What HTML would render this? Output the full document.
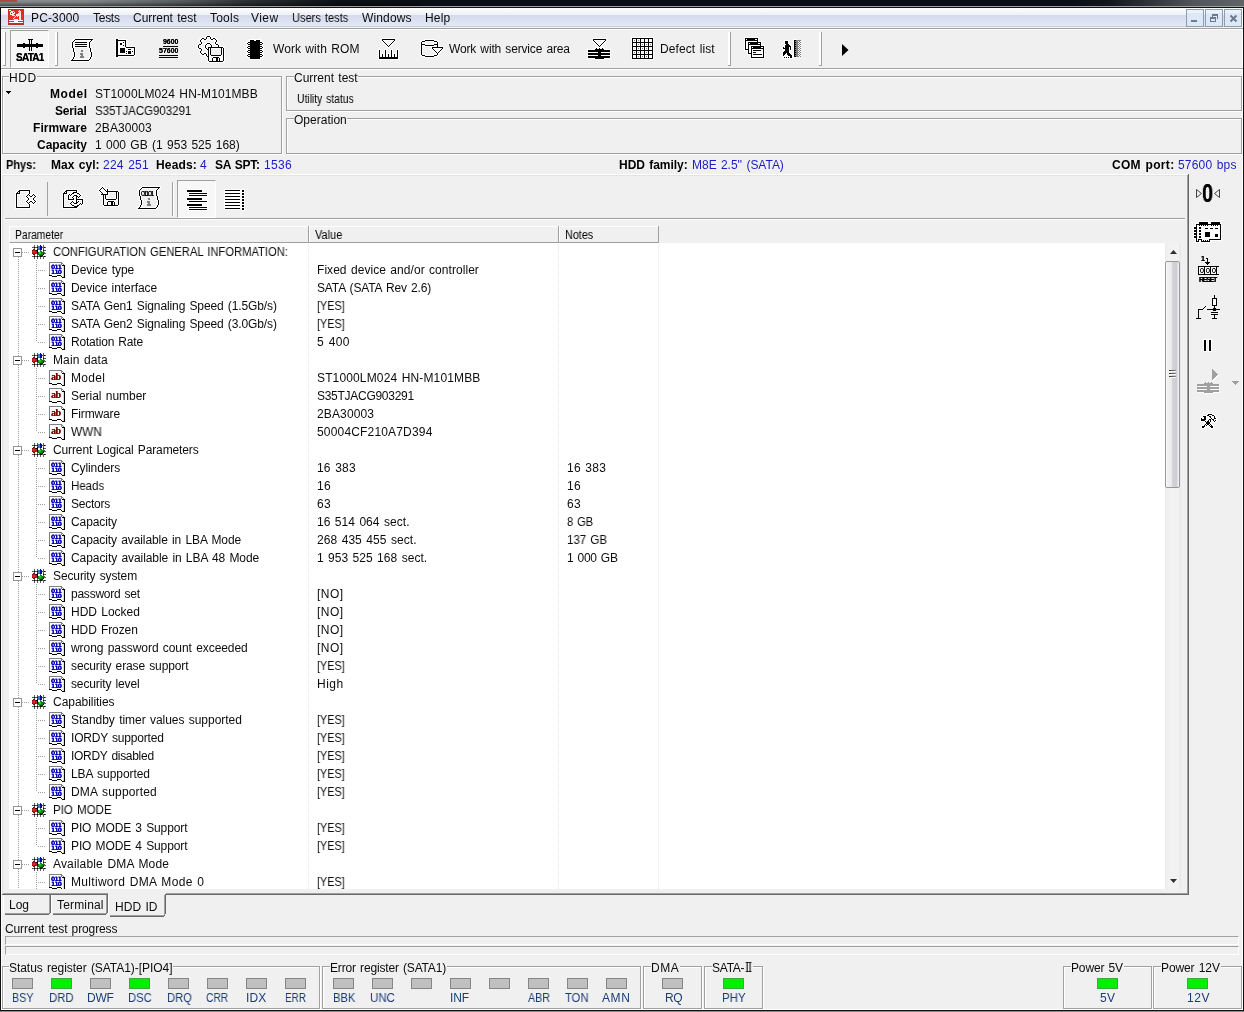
<!DOCTYPE html>
<html lang="en"><head><meta charset="utf-8"><title>PC-3000</title>
<style>
html,body{margin:0;padding:0;background:#f0f0f0;}
body{width:1244px;height:1012px;overflow:hidden;font-family:"Liberation Sans",sans-serif;font-size:12px;color:#0c0c0c;}
#app{position:relative;width:1244px;height:1012px;overflow:hidden;background:#f0f0f0;}
#app div,#app span,#app i,#app svg{position:absolute;box-sizing:border-box;}
#app span{white-space:pre;line-height:14px;font-size:12px;word-spacing:1px;transform-origin:0 50%;will-change:transform;}
#app i{display:block;}
.b{font-weight:bold;color:#000;}
.v{color:#1c1cc4;}
.l{color:#1c3c78;}
svg{shape-rendering:crispEdges;overflow:visible;}
#app .bn{font-family:"DejaVu Sans","Liberation Sans",sans-serif;font-size:6px;line-height:6px;font-weight:bold;color:#0000b0;letter-spacing:-0.75px;word-spacing:0;will-change:transform;text-shadow:0 0 0 #0000b0;}
#app .ab{font-size:10px;line-height:12px;font-weight:bold;color:#800000;letter-spacing:-0.5px;font-family:"Liberation Serif",serif;will-change:transform;text-shadow:0 0 0 #800000;}
#app .it{will-change:transform;word-spacing:0;}

</style></head>
<body>
<div id="app">
<div style="left:0px;top:0px;width:1244px;height:6px;background:linear-gradient(90deg,#8e9294 0,#888c8e 7%,#5c6064 14.5%,#2e3236 20%,#0e1219 27%,#0a0e17 34%,#0a0e17 86%,#12161c 89%,#2c3036 92%,#52565a 96%,#606468 100%)"></div>
<div style="left:0px;top:0px;width:420px;height:6px;background:linear-gradient(180deg,rgba(0,0,0,0) 0,rgba(0,0,0,0.12) 40%,rgba(0,0,0,0.5) 100%)"></div>
<div style="left:0px;top:0px;width:17px;height:2px;background:linear-gradient(#b44646,#a44c4c)"></div>
<i style="left:0px;top:6px;width:1244px;height:1px;background:#9c9ea0"></i>
<i style="left:0px;top:7px;width:1244px;height:1px;background:#101214"></i>
<div style="left:1px;top:8px;width:1242px;height:19px;background:linear-gradient(#ffffff 0,#eef0f8 36%,#d4daec 37%,#e3e8f5 95%,#c9cedc 96%)"></div>
<i style="left:1px;top:27px;width:1242px;height:1px;background:#f4f4f4"></i>
<i style="left:1px;top:28px;width:1242px;height:1px;background:#a0a0a0"></i>
<i style="left:1px;top:29px;width:1242px;height:1px;background:#ffffff"></i>
<i style="left:0px;top:7px;width:1px;height:1004px;background:#101010"></i>
<i style="left:1243px;top:7px;width:1px;height:1004px;background:#101010"></i>
<i style="left:1px;top:30px;width:1px;height:980px;background:#ffffff"></i>
<i style="left:1242px;top:8px;width:1px;height:20px;background:#ffffff"></i>
<i style="left:1242px;top:30px;width:1px;height:980px;background:#ffffff"></i>
<i style="left:1px;top:1009px;width:1242px;height:1px;background:#ffffff"></i>
<i style="left:0px;top:1010px;width:1244px;height:1px;background:#101010"></i>
<i style="left:0px;top:1011px;width:1244px;height:1px;background:#8a8a8a"></i>
<svg style="left:8px;top:9px" width="16" height="16" viewBox="0 0 16 16"><path fill="#e42a22" d="M0 0h16v16h-16z"/><path fill="#ea3026" d="M1 6h14v5h-14z"/><path fill="#c83030" d="M0 0h16v1h-16zM0 0h1v16h-1zM15 0h1v16h-1z"/><path fill="#b03434" d="M0 14h16v2h-16z"/><path fill="#fff" d="M1 11h14v1h-14zM1 13h14v1h-14zM6 10h4v3h-4zM1 1h2v1h-2z"/><path fill="#fbe4e2" d="M2 3h5v3h-5zM3 2h3v1h-3zM4 6h3v1h-3zM10 2h3v3h-3zM8 5h5v2h-5zM11 7h2v4h-2zM9 7h1v1h-1zM5 9h1v1h-1zM6 8h1v1h-1zM7 7h1v1h-1zM11 1h1v1h-1z"/><path fill="#c03030" d="M3 4h1v1h-1zM5 3h1v1h-1zM6 5h1v1h-1zM9 4h1v1h-1zM10 3h1v1h-1zM7 6h1v1h-1z"/></svg>
<span style="left:31.0px;top:11px;letter-spacing:0.14px;">PC-3000</span>
<span style="left:92.5px;top:11px;letter-spacing:-0.27px;">Tests</span>
<span style="left:133.0px;top:11px;letter-spacing:-0.02px;">Current test</span>
<span style="left:209.6px;top:11px;letter-spacing:0.22px;">Tools</span>
<span style="left:251.2px;top:11px;letter-spacing:0.43px;">View</span>
<span style="left:292.2px;top:11px;transform:scaleX(0.921);">Users tests</span>
<span style="left:361.7px;top:11px;letter-spacing:0.15px;">Windows</span>
<span style="left:425.2px;top:11px;letter-spacing:0.20px;">Help</span>
<svg style="left:1186px;top:9px" width="18" height="18" viewBox="0 0 18 18"><path fill="#8f9cae" d="M0 0h18v18h-18z"/><path fill="#dde8f6" d="M1 1h16v16h-16z"/><path fill="#eaf2fb" d="M1 1h16v3h-16z"/><path fill="#6b7a90" d="M5 11h6v2h-6z"/></svg>
<svg style="left:1205px;top:9px" width="18" height="18" viewBox="0 0 18 18"><path fill="#8f9cae" d="M0 0h18v18h-18z"/><path fill="#dde8f6" d="M1 1h16v16h-16z"/><path fill="#eaf2fb" d="M1 1h16v3h-16z"/><path fill="#6b7a90" d="M7 5h6v2h-6zM12 7h1v3h-1zM7 7h1v1h-1zM5 8h6v2h-6zM5 10h1v3h-1zM10 10h1v3h-1zM6 12h4v1h-4z"/></svg>
<svg style="left:1224px;top:9px" width="18" height="18" viewBox="0 0 18 18"><path fill="#8f9cae" d="M0 0h18v18h-18z"/><path fill="#dde8f6" d="M1 1h16v16h-16z"/><path fill="#eaf2fb" d="M1 1h16v3h-16z"/><path fill="none" stroke="#6b7a90" stroke-width="2" d="M6.500 6.500l6 6M12.500 6.500l-6 6" shape-rendering="geometricPrecision"/></svg>
<i style="left:1px;top:68px;width:1242px;height:1px;background:#a0a0a0"></i>
<i style="left:1px;top:69px;width:1242px;height:1px;background:#ffffff"></i>
<i style="left:3px;top:32px;width:2px;height:33px;background:#fff"></i>
<i style="left:5px;top:32px;width:1px;height:34px;background:#a0a0a0"></i>
<i style="left:3px;top:65px;width:3px;height:1px;background:#a0a0a0"></i>
<i style="left:55px;top:32px;width:2px;height:33px;background:#fff"></i>
<i style="left:57px;top:32px;width:1px;height:34px;background:#a0a0a0"></i>
<i style="left:55px;top:65px;width:3px;height:1px;background:#a0a0a0"></i>
<div style="left:10px;top:30px;width:39px;height:38px;background:#f7f7f7;border-left:1px solid #a0a0a0;border-top:1px solid #a0a0a0;border-right:1px solid #fff;border-bottom:1px solid #fff"></div>
<svg style="left:17px;top:39px" width="26" height="12" viewBox="0 0 26 12"><path fill="#000" d="M11 0h5v1h-5zM12 1h1v1h-1zM14 1h1v1h-1zM12 2h1v1h-1zM14 2h1v1h-1zM12 3h1v1h-1zM14 3h1v1h-1zM6 4h2v1h-2zM12 4h1v1h-1zM14 4h1v1h-1zM19 4h2v1h-2zM0 5h26v1h-26zM0 6h26v1h-26zM0 7h26v1h-26zM6 8h2v1h-2zM12 8h1v1h-1zM14 8h1v1h-1zM19 8h2v1h-2zM12 9h1v1h-1zM14 9h1v1h-1zM12 10h1v1h-1zM14 10h1v1h-1zM12 11h1v1h-1zM14 11h1v1h-1z"/></svg>
<span class="it" style="left:15.6px;top:52.14px;font-size:10px;line-height:12px;letter-spacing:-0.73px;color:#000;text-shadow:0 0 0 #000;font-weight:bold;">SATA1</span>
<svg style="left:70px;top:38px" width="24" height="24" viewBox="0 0 24 24"><path fill="#fff" d="M4 0h20v1h-20zM3 1h2v1h-2zM23 1h1v1h-1zM2 2h2v1h-2zM5 2h16v1h-16zM22 2h2v1h-2zM1 3h2v1h-2zM4 3h16v1h-16zM21 3h2v1h-2zM1 4h1v1h-1zM3 4h2v1h-2zM17 4h2v1h-2zM20 4h2v1h-2zM1 5h1v1h-1zM3 5h16v1h-16zM20 5h1v1h-1zM1 6h1v1h-1zM3 6h2v1h-2zM17 6h2v1h-2zM20 6h1v1h-1zM1 7h1v1h-1zM3 7h16v1h-16zM20 7h1v1h-1zM1 8h1v1h-1zM3 8h2v1h-2zM17 8h2v1h-2zM20 8h1v1h-1zM1 9h1v1h-1zM3 9h16v1h-16zM20 9h2v1h-2zM1 10h2v1h-2zM4 10h1v1h-1zM18 10h2v1h-2zM21 10h1v1h-1zM2 11h1v1h-1zM4 11h1v1h-1zM19 11h1v1h-1zM21 11h1v1h-1zM2 12h1v1h-1zM4 12h1v1h-1zM19 12h1v1h-1zM21 12h1v1h-1zM2 13h1v1h-1zM4 13h2v1h-2zM19 13h1v1h-1zM21 13h2v1h-2zM2 14h2v1h-2zM5 14h1v1h-1zM19 14h2v1h-2zM22 14h1v1h-1zM3 15h1v1h-1zM5 15h1v1h-1zM20 15h1v1h-1zM22 15h1v1h-1zM3 16h1v1h-1zM5 16h1v1h-1zM20 16h1v1h-1zM22 16h1v1h-1zM3 17h1v1h-1zM5 17h1v1h-1zM20 17h1v1h-1zM22 17h1v1h-1zM2 18h2v1h-2zM5 18h1v1h-1zM19 18h2v1h-2zM22 18h1v1h-1zM2 19h1v1h-1zM4 19h2v1h-2zM19 19h1v1h-1zM21 19h2v1h-2zM1 20h2v1h-2zM4 20h1v1h-1zM18 20h2v1h-2zM21 20h1v1h-1zM0 21h2v1h-2zM3 21h16v1h-16zM20 21h2v1h-2zM0 22h1v1h-1zM19 22h2v1h-2zM0 23h20v1h-20z"/><path fill="#000" d="M5 1h18v1h-18zM4 2h1v1h-1zM21 2h1v1h-1zM3 3h1v1h-1zM20 3h1v1h-1zM2 4h1v1h-1zM5 4h12v1h-12zM19 4h1v1h-1zM2 5h1v1h-1zM19 5h1v1h-1zM2 6h1v1h-1zM5 6h12v1h-12zM19 6h1v1h-1zM2 7h1v1h-1zM19 7h1v1h-1zM2 8h1v1h-1zM5 8h12v1h-12zM19 8h1v1h-1zM2 9h1v1h-1zM19 9h1v1h-1zM3 10h1v1h-1zM20 10h1v1h-1zM3 11h1v1h-1zM20 11h1v1h-1zM3 12h1v1h-1zM20 12h1v1h-1zM3 13h1v1h-1zM20 13h1v1h-1zM4 14h1v1h-1zM21 14h1v1h-1zM4 15h1v1h-1zM21 15h1v1h-1zM4 16h1v1h-1zM21 16h1v1h-1zM4 17h1v1h-1zM21 17h1v1h-1zM4 18h1v1h-1zM21 18h1v1h-1zM3 19h1v1h-1zM20 19h1v1h-1zM3 20h1v1h-1zM20 20h1v1h-1zM2 21h1v1h-1zM19 21h1v1h-1zM1 22h18v1h-18z"/><path fill="#808080" d="M11 12h2v1h-2zM11 13h2v1h-2zM10 15h3v1h-3zM10 16h3v1h-3zM11 17h2v1h-2zM10 18h4v1h-4zM10 19h4v1h-4z"/></svg>
<svg style="left:115px;top:38px" width="21" height="20" viewBox="0 0 21 20"><path fill="#fff" d="M0 0h4v1h-4zM0 1h1v1h-1zM3 1h9v1h-9zM0 2h1v1h-1zM11 2h1v1h-1zM0 3h1v1h-1zM3 3h7v1h-7zM11 3h1v1h-1zM0 4h1v1h-1zM3 4h5v1h-5zM9 4h1v1h-1zM11 4h1v1h-1zM0 5h1v1h-1zM3 5h2v1h-2zM7 5h3v1h-3zM11 5h1v1h-1zM0 6h1v1h-1zM3 6h2v1h-2zM7 6h3v1h-3zM11 6h1v1h-1zM0 7h1v1h-1zM3 7h5v1h-5zM9 7h1v1h-1zM11 7h1v1h-1zM0 8h1v1h-1zM3 8h7v1h-7zM11 8h10v1h-10zM0 9h1v1h-1zM3 9h8v1h-8zM20 9h1v1h-1zM0 10h1v1h-1zM3 10h2v1h-2zM10 10h9v1h-9zM20 10h1v1h-1zM0 11h1v1h-1zM3 11h2v1h-2zM10 11h3v1h-3zM16 11h3v1h-3zM20 11h1v1h-1zM0 12h1v1h-1zM3 12h2v1h-2zM10 12h9v1h-9zM20 12h1v1h-1zM0 13h1v1h-1zM3 13h2v1h-2zM10 13h1v1h-1zM12 13h1v1h-1zM16 13h1v1h-1zM18 13h1v1h-1zM20 13h1v1h-1zM0 14h1v1h-1zM3 14h2v1h-2zM10 14h3v1h-3zM16 14h3v1h-3zM20 14h1v1h-1zM0 15h1v1h-1zM3 15h8v1h-8zM12 15h1v1h-1zM16 15h3v1h-3zM20 15h1v1h-1zM0 16h1v1h-1zM3 16h16v1h-16zM20 16h1v1h-1zM0 17h1v1h-1zM19 17h2v1h-2zM0 18h1v1h-1zM3 18h17v1h-17zM0 19h4v1h-4z"/><path fill="#000" d="M1 1h2v1h-2zM1 2h10v1h-10zM1 3h2v1h-2zM10 3h1v1h-1zM1 4h2v1h-2zM8 4h1v1h-1zM10 4h1v1h-1zM1 5h2v1h-2zM5 5h2v1h-2zM10 5h1v1h-1zM1 6h2v1h-2zM5 6h2v1h-2zM10 6h1v1h-1zM1 7h2v1h-2zM8 7h1v1h-1zM10 7h1v1h-1zM1 8h2v1h-2zM10 8h1v1h-1zM1 9h2v1h-2zM11 9h9v1h-9zM1 10h2v1h-2zM5 10h5v1h-5zM19 10h1v1h-1zM1 11h2v1h-2zM5 11h5v1h-5zM13 11h3v1h-3zM19 11h1v1h-1zM1 12h2v1h-2zM5 12h5v1h-5zM19 12h1v1h-1zM1 13h2v1h-2zM5 13h5v1h-5zM11 13h1v1h-1zM13 13h3v1h-3zM17 13h1v1h-1zM19 13h1v1h-1zM1 14h2v1h-2zM5 14h5v1h-5zM13 14h3v1h-3zM19 14h1v1h-1zM1 15h2v1h-2zM11 15h1v1h-1zM13 15h3v1h-3zM19 15h1v1h-1zM1 16h2v1h-2zM19 16h1v1h-1zM1 17h18v1h-18zM1 18h2v1h-2z"/></svg>
<svg style="left:159px;top:46px" width="19" height="12" viewBox="0 0 19 12"><path fill="#000" d="M4 0h15v1h-15zM0 9h19v1h-19zM0 11h19v1h-19z"/></svg>
<span class="it" style="left:162.6px;top:37.07px;font-size:7px;line-height:9px;letter-spacing:-0.05px;color:#000;text-shadow:0 0 0 #000;font-weight:bold;">9600</span>
<span class="it" style="left:158.6px;top:46.07px;font-size:7px;line-height:9px;letter-spacing:-0.01px;color:#000;text-shadow:0 0 0 #000;font-weight:bold;">57600</span>
<svg style="left:197px;top:35px" width="28" height="28" viewBox="0 0 28 28"><path fill="#fff" d="M9 0h5v1h-5zM8 1h2v1h-2zM13 1h2v1h-2zM4 2h5v1h-5zM10 2h3v1h-3zM14 2h5v1h-5zM3 3h2v1h-2zM7 3h2v1h-2zM10 3h1v1h-1zM12 3h1v1h-1zM14 3h2v1h-2zM18 3h2v1h-2zM2 4h2v1h-2zM5 4h2v1h-2zM9 4h2v1h-2zM12 4h2v1h-2zM16 4h2v1h-2zM19 4h2v1h-2zM2 5h1v1h-1zM4 5h6v1h-6zM13 5h6v1h-6zM20 5h1v1h-1zM2 6h1v1h-1zM4 6h2v1h-2zM17 6h2v1h-2zM20 6h1v1h-1zM2 7h2v1h-2zM5 7h1v1h-1zM9 7h5v1h-5zM17 7h1v1h-1zM19 7h2v1h-2zM1 8h3v1h-3zM5 8h1v1h-1zM8 8h2v1h-2zM13 8h2v1h-2zM17 8h1v1h-1zM19 8h3v1h-3zM0 9h2v1h-2zM4 9h2v1h-2zM7 9h2v1h-2zM10 9h3v1h-3zM14 9h2v1h-2zM17 9h2v1h-2zM21 9h2v1h-2zM0 10h1v1h-1zM2 10h3v1h-3zM7 10h1v1h-1zM9 10h2v1h-2zM12 10h2v1h-2zM15 10h1v1h-1zM18 10h3v1h-3zM22 10h1v1h-1zM0 11h1v1h-1zM2 11h1v1h-1zM7 11h1v1h-1zM9 11h5v1h-5zM15 11h6v1h-6zM22 11h5v1h-5zM0 12h1v1h-1zM2 12h3v1h-3zM7 12h1v1h-1zM9 12h2v1h-2zM26 12h2v1h-2zM0 13h2v1h-2zM4 13h2v1h-2zM7 13h2v1h-2zM10 13h1v1h-1zM12 13h1v1h-1zM14 13h10v1h-10zM25 13h1v1h-1zM27 13h1v1h-1zM1 14h3v1h-3zM5 14h1v1h-1zM8 14h2v1h-2zM12 14h1v1h-1zM25 14h1v1h-1zM27 14h1v1h-1zM2 15h2v1h-2zM5 15h1v1h-1zM9 15h2v1h-2zM12 15h1v1h-1zM25 15h1v1h-1zM27 15h1v1h-1zM2 16h1v1h-1zM4 16h2v1h-2zM10 16h1v1h-1zM12 16h1v1h-1zM25 16h1v1h-1zM27 16h1v1h-1zM2 17h1v1h-1zM4 17h7v1h-7zM12 17h1v1h-1zM25 17h1v1h-1zM27 17h1v1h-1zM2 18h2v1h-2zM5 18h2v1h-2zM9 18h2v1h-2zM12 18h1v1h-1zM25 18h1v1h-1zM27 18h1v1h-1zM3 19h2v1h-2zM7 19h2v1h-2zM10 19h1v1h-1zM12 19h1v1h-1zM25 19h1v1h-1zM27 19h1v1h-1zM4 20h5v1h-5zM10 20h1v1h-1zM12 20h2v1h-2zM24 20h2v1h-2zM27 20h1v1h-1zM8 21h2v1h-2zM12 21h14v1h-14zM27 21h1v1h-1zM9 22h2v1h-2zM12 22h4v1h-4zM22 22h4v1h-4zM27 22h1v1h-1zM10 23h1v1h-1zM12 23h3v1h-3zM16 23h3v1h-3zM21 23h1v1h-1zM23 23h3v1h-3zM27 23h1v1h-1zM10 24h1v1h-1zM12 24h3v1h-3zM16 24h3v1h-3zM21 24h1v1h-1zM23 24h3v1h-3zM27 24h1v1h-1zM10 25h1v1h-1zM12 25h3v1h-3zM16 25h3v1h-3zM21 25h1v1h-1zM23 25h3v1h-3zM27 25h1v1h-1zM10 26h2v1h-2zM26 26h2v1h-2zM11 27h16v1h-16z"/><path fill="#000" d="M10 1h3v1h-3zM9 2h1v1h-1zM13 2h1v1h-1zM5 3h2v1h-2zM9 3h1v1h-1zM13 3h1v1h-1zM16 3h2v1h-2zM4 4h1v1h-1zM7 4h2v1h-2zM14 4h2v1h-2zM18 4h1v1h-1zM3 5h1v1h-1zM19 5h1v1h-1zM3 6h1v1h-1zM19 6h1v1h-1zM4 7h1v1h-1zM18 7h1v1h-1zM4 8h1v1h-1zM10 8h3v1h-3zM18 8h1v1h-1zM2 9h2v1h-2zM9 9h1v1h-1zM13 9h1v1h-1zM19 9h2v1h-2zM1 10h1v1h-1zM8 10h1v1h-1zM14 10h1v1h-1zM21 10h1v1h-1zM1 11h1v1h-1zM8 11h1v1h-1zM14 11h1v1h-1zM21 11h1v1h-1zM1 12h1v1h-1zM8 12h1v1h-1zM11 12h15v1h-15zM2 13h2v1h-2zM9 13h1v1h-1zM11 13h1v1h-1zM13 13h1v1h-1zM24 13h1v1h-1zM26 13h1v1h-1zM4 14h1v1h-1zM10 14h2v1h-2zM13 14h1v1h-1zM24 14h1v1h-1zM26 14h1v1h-1zM4 15h1v1h-1zM11 15h1v1h-1zM13 15h1v1h-1zM24 15h1v1h-1zM26 15h1v1h-1zM3 16h1v1h-1zM11 16h1v1h-1zM13 16h1v1h-1zM24 16h1v1h-1zM26 16h1v1h-1zM3 17h1v1h-1zM11 17h1v1h-1zM13 17h1v1h-1zM24 17h1v1h-1zM26 17h1v1h-1zM4 18h1v1h-1zM7 18h2v1h-2zM11 18h1v1h-1zM13 18h1v1h-1zM24 18h1v1h-1zM26 18h1v1h-1zM5 19h2v1h-2zM9 19h1v1h-1zM11 19h1v1h-1zM13 19h1v1h-1zM24 19h1v1h-1zM26 19h1v1h-1zM9 20h1v1h-1zM11 20h1v1h-1zM14 20h10v1h-10zM26 20h1v1h-1zM10 21h2v1h-2zM26 21h1v1h-1zM11 22h1v1h-1zM16 22h6v1h-6zM26 22h1v1h-1zM11 23h1v1h-1zM15 23h1v1h-1zM19 23h2v1h-2zM22 23h1v1h-1zM26 23h1v1h-1zM11 24h1v1h-1zM15 24h1v1h-1zM19 24h2v1h-2zM22 24h1v1h-1zM26 24h1v1h-1zM11 25h1v1h-1zM15 25h1v1h-1zM19 25h2v1h-2zM22 25h1v1h-1zM26 25h1v1h-1zM12 26h14v1h-14z"/><path fill="#f0f0f0" d="M14 14h10v1h-10zM14 15h10v1h-10zM14 16h10v1h-10zM14 17h10v1h-10zM14 18h10v1h-10zM14 19h10v1h-10z"/></svg>
<svg style="left:246px;top:39px" width="18" height="21" viewBox="0 0 18 21"><path fill="#fff" d="M3 0h12v1h-12zM3 1h1v1h-1zM8 1h2v1h-2zM14 1h1v1h-1zM1 2h3v1h-3zM14 2h3v1h-3zM0 3h2v1h-2zM16 3h2v1h-2zM0 4h1v1h-1zM2 4h2v1h-2zM14 4h2v1h-2zM17 4h1v1h-1zM0 5h2v1h-2zM16 5h2v1h-2zM1 6h3v1h-3zM14 6h3v1h-3zM0 7h2v1h-2zM16 7h2v1h-2zM0 8h1v1h-1zM2 8h2v1h-2zM14 8h2v1h-2zM17 8h1v1h-1zM0 9h2v1h-2zM16 9h2v1h-2zM1 10h3v1h-3zM14 10h3v1h-3zM0 11h2v1h-2zM16 11h2v1h-2zM0 12h1v1h-1zM2 12h2v1h-2zM14 12h2v1h-2zM17 12h1v1h-1zM0 13h2v1h-2zM16 13h2v1h-2zM1 14h3v1h-3zM14 14h3v1h-3zM0 15h2v1h-2zM16 15h2v1h-2zM0 16h1v1h-1zM2 16h2v1h-2zM14 16h2v1h-2zM17 16h1v1h-1zM0 17h2v1h-2zM16 17h2v1h-2zM1 18h3v1h-3zM14 18h3v1h-3zM3 19h1v1h-1zM14 19h1v1h-1zM3 20h12v1h-12z"/><path fill="#000" d="M4 1h4v1h-4zM10 1h4v1h-4zM4 2h10v1h-10zM2 3h14v1h-14zM1 4h1v1h-1zM4 4h10v1h-10zM16 4h1v1h-1zM2 5h14v1h-14zM4 6h10v1h-10zM2 7h14v1h-14zM1 8h1v1h-1zM4 8h10v1h-10zM16 8h1v1h-1zM2 9h14v1h-14zM4 10h10v1h-10zM2 11h14v1h-14zM1 12h1v1h-1zM4 12h10v1h-10zM16 12h1v1h-1zM2 13h14v1h-14zM4 14h10v1h-10zM2 15h14v1h-14zM1 16h1v1h-1zM4 16h10v1h-10zM16 16h1v1h-1zM2 17h14v1h-14zM4 18h10v1h-10zM4 19h10v1h-10z"/></svg>
<svg style="left:378px;top:38px" width="21" height="22" viewBox="0 0 21 22"><path fill="#fff" d="M3 0h15v1h-15zM3 1h1v1h-1zM17 1h1v1h-1zM3 2h1v1h-1zM5 2h11v1h-11zM17 2h1v1h-1zM3 3h2v1h-2zM6 3h2v1h-2zM13 3h2v1h-2zM16 3h2v1h-2zM4 4h2v1h-2zM7 4h2v1h-2zM12 4h2v1h-2zM15 4h2v1h-2zM5 5h2v1h-2zM8 5h2v1h-2zM11 5h2v1h-2zM14 5h2v1h-2zM6 6h2v1h-2zM9 6h3v1h-3zM13 6h2v1h-2zM7 7h2v1h-2zM10 7h1v1h-1zM12 7h2v1h-2zM8 8h2v1h-2zM11 8h2v1h-2zM9 9h3v1h-3zM0 11h3v1h-3zM6 11h3v1h-3zM12 11h3v1h-3zM18 11h3v1h-3zM0 12h1v1h-1zM2 12h1v1h-1zM6 12h1v1h-1zM8 12h1v1h-1zM12 12h1v1h-1zM14 12h1v1h-1zM18 12h1v1h-1zM20 12h1v1h-1zM0 13h1v1h-1zM2 13h1v1h-1zM6 13h1v1h-1zM8 13h1v1h-1zM12 13h1v1h-1zM14 13h1v1h-1zM18 13h1v1h-1zM20 13h1v1h-1zM0 14h1v1h-1zM2 14h1v1h-1zM6 14h1v1h-1zM8 14h1v1h-1zM12 14h1v1h-1zM14 14h1v1h-1zM18 14h1v1h-1zM20 14h1v1h-1zM0 15h1v1h-1zM2 15h5v1h-5zM8 15h5v1h-5zM14 15h5v1h-5zM20 15h1v1h-1zM0 16h1v1h-1zM2 16h2v1h-2zM5 16h2v1h-2zM8 16h2v1h-2zM11 16h2v1h-2zM14 16h2v1h-2zM17 16h2v1h-2zM20 16h1v1h-1zM0 17h1v1h-1zM2 17h2v1h-2zM5 17h2v1h-2zM8 17h2v1h-2zM11 17h2v1h-2zM14 17h2v1h-2zM17 17h2v1h-2zM20 17h1v1h-1zM0 18h1v1h-1zM2 18h2v1h-2zM5 18h2v1h-2zM8 18h2v1h-2zM11 18h2v1h-2zM14 18h2v1h-2zM17 18h2v1h-2zM20 18h1v1h-1zM0 19h1v1h-1zM20 19h1v1h-1zM0 20h1v1h-1zM20 20h1v1h-1zM0 21h21v1h-21z"/><path fill="#000" d="M4 1h13v1h-13zM4 2h1v1h-1zM16 2h1v1h-1zM5 3h1v1h-1zM15 3h1v1h-1zM6 4h1v1h-1zM14 4h1v1h-1zM7 5h1v1h-1zM13 5h1v1h-1zM8 6h1v1h-1zM12 6h1v1h-1zM9 7h1v1h-1zM11 7h1v1h-1zM10 8h1v1h-1zM1 12h1v1h-1zM7 12h1v1h-1zM13 12h1v1h-1zM19 12h1v1h-1zM1 13h1v1h-1zM7 13h1v1h-1zM13 13h1v1h-1zM19 13h1v1h-1zM1 14h1v1h-1zM7 14h1v1h-1zM13 14h1v1h-1zM19 14h1v1h-1zM1 15h1v1h-1zM7 15h1v1h-1zM13 15h1v1h-1zM19 15h1v1h-1zM1 16h1v1h-1zM4 16h1v1h-1zM7 16h1v1h-1zM10 16h1v1h-1zM13 16h1v1h-1zM16 16h1v1h-1zM19 16h1v1h-1zM1 17h1v1h-1zM4 17h1v1h-1zM7 17h1v1h-1zM10 17h1v1h-1zM13 17h1v1h-1zM16 17h1v1h-1zM19 17h1v1h-1zM1 18h1v1h-1zM4 18h1v1h-1zM7 18h1v1h-1zM10 18h1v1h-1zM13 18h1v1h-1zM16 18h1v1h-1zM19 18h1v1h-1zM1 19h19v1h-19zM1 20h19v1h-19z"/></svg>
<svg style="left:420px;top:39px" width="24" height="19" viewBox="0 0 24 19"><path fill="#fff" d="M4 0h11v1h-11zM1 1h4v1h-4zM14 1h4v1h-4zM0 2h2v1h-2zM5 2h9v1h-9zM17 2h2v1h-2zM0 3h1v1h-1zM2 3h4v1h-4zM13 3h4v1h-4zM18 3h1v1h-1zM0 4h1v1h-1zM2 4h4v1h-4zM13 4h4v1h-4zM18 4h1v1h-1zM0 5h1v1h-1zM5 5h9v1h-9zM18 5h1v1h-1zM0 6h1v1h-1zM2 6h3v1h-3zM14 6h3v1h-3zM18 6h1v1h-1zM0 7h1v1h-1zM2 7h1v1h-1zM4 7h13v1h-13zM18 7h6v1h-6zM0 8h1v1h-1zM2 8h1v1h-1zM11 8h1v1h-1zM23 8h1v1h-1zM0 9h1v1h-1zM2 9h1v1h-1zM11 9h1v1h-1zM13 9h9v1h-9zM23 9h1v1h-1zM0 10h1v1h-1zM2 10h1v1h-1zM11 10h2v1h-2zM14 10h2v1h-2zM19 10h2v1h-2zM22 10h2v1h-2zM0 11h1v1h-1zM2 11h1v1h-1zM12 11h2v1h-2zM15 11h2v1h-2zM18 11h2v1h-2zM21 11h2v1h-2zM0 12h1v1h-1zM2 12h1v1h-1zM13 12h2v1h-2zM16 12h3v1h-3zM20 12h2v1h-2zM0 13h1v1h-1zM2 13h1v1h-1zM14 13h2v1h-2zM17 13h1v1h-1zM19 13h2v1h-2zM0 14h1v1h-1zM2 14h1v1h-1zM15 14h2v1h-2zM18 14h2v1h-2zM0 15h1v1h-1zM2 15h4v1h-4zM13 15h4v1h-4zM18 15h1v1h-1zM0 16h2v1h-2zM5 16h9v1h-9zM17 16h2v1h-2zM1 17h4v1h-4zM14 17h4v1h-4zM4 18h11v1h-11z"/><path fill="#000" d="M5 1h9v1h-9zM2 2h3v1h-3zM14 2h3v1h-3zM1 3h1v1h-1zM17 3h1v1h-1zM1 4h1v1h-1zM17 4h1v1h-1zM1 5h4v1h-4zM14 5h4v1h-4zM1 6h1v1h-1zM5 6h9v1h-9zM17 6h1v1h-1zM1 7h1v1h-1zM17 7h1v1h-1zM1 8h1v1h-1zM12 8h11v1h-11zM1 9h1v1h-1zM12 9h1v1h-1zM22 9h1v1h-1zM1 10h1v1h-1zM13 10h1v1h-1zM21 10h1v1h-1zM1 11h1v1h-1zM14 11h1v1h-1zM20 11h1v1h-1zM1 12h1v1h-1zM15 12h1v1h-1zM19 12h1v1h-1zM1 13h1v1h-1zM16 13h1v1h-1zM18 13h1v1h-1zM1 14h1v1h-1zM17 14h1v1h-1zM1 15h1v1h-1zM17 15h1v1h-1zM2 16h3v1h-3zM14 16h3v1h-3zM5 17h9v1h-9z"/></svg>
<svg style="left:587px;top:38px" width="24" height="22" viewBox="0 0 24 22"><path fill="#fff" d="M5 0h15v1h-15zM5 1h1v1h-1zM19 1h1v1h-1zM5 2h1v1h-1zM7 2h11v1h-11zM19 2h1v1h-1zM5 3h2v1h-2zM8 3h2v1h-2zM15 3h2v1h-2zM18 3h2v1h-2zM6 4h2v1h-2zM9 4h2v1h-2zM14 4h2v1h-2zM17 4h2v1h-2zM7 5h2v1h-2zM10 5h2v1h-2zM13 5h2v1h-2zM16 5h2v1h-2zM8 6h2v1h-2zM11 6h3v1h-3zM15 6h2v1h-2zM9 7h2v1h-2zM12 7h1v1h-1zM14 7h2v1h-2zM10 8h2v1h-2zM13 8h2v1h-2zM8 9h9v1h-9zM7 10h2v1h-2zM10 10h2v1h-2zM13 10h2v1h-2zM16 10h2v1h-2zM0 11h8v1h-8zM17 11h7v1h-7zM0 12h1v1h-1zM23 12h1v1h-1zM0 13h1v1h-1zM23 13h1v1h-1zM0 14h11v1h-11zM14 14h10v1h-10zM0 15h1v1h-1zM23 15h1v1h-1zM0 16h1v1h-1zM23 16h1v1h-1zM0 17h11v1h-11zM14 17h10v1h-10zM0 18h1v1h-1zM23 18h1v1h-1zM0 19h1v1h-1zM23 19h1v1h-1zM0 20h8v1h-8zM17 20h7v1h-7zM7 21h11v1h-11z"/><path fill="#000" d="M6 1h13v1h-13zM6 2h1v1h-1zM18 2h1v1h-1zM7 3h1v1h-1zM17 3h1v1h-1zM8 4h1v1h-1zM16 4h1v1h-1zM9 5h1v1h-1zM15 5h1v1h-1zM10 6h1v1h-1zM14 6h1v1h-1zM11 7h1v1h-1zM13 7h1v1h-1zM12 8h1v1h-1zM9 10h1v1h-1zM12 10h1v1h-1zM15 10h1v1h-1zM8 11h9v1h-9zM1 12h22v1h-22zM1 13h22v1h-22zM11 14h3v1h-3zM1 15h22v1h-22zM1 16h22v1h-22zM11 17h3v1h-3zM1 18h22v1h-22zM1 19h22v1h-22zM8 20h9v1h-9z"/></svg>
<svg style="left:631px;top:37px" width="23" height="23" viewBox="0 0 23 23"><path fill="#fff" d="M0 0h23v1h-23zM0 1h1v1h-1zM22 1h1v1h-1zM0 2h1v1h-1zM2 2h3v1h-3zM6 2h3v1h-3zM10 2h3v1h-3zM14 2h3v1h-3zM18 2h3v1h-3zM22 2h1v1h-1zM0 3h1v1h-1zM2 3h1v1h-1zM4 3h1v1h-1zM6 3h1v1h-1zM8 3h1v1h-1zM10 3h3v1h-3zM14 3h3v1h-3zM18 3h3v1h-3zM22 3h1v1h-1zM0 4h1v1h-1zM2 4h3v1h-3zM6 4h3v1h-3zM10 4h3v1h-3zM14 4h3v1h-3zM18 4h3v1h-3zM22 4h1v1h-1zM0 5h1v1h-1zM22 5h1v1h-1zM0 6h1v1h-1zM2 6h3v1h-3zM6 6h3v1h-3zM10 6h3v1h-3zM14 6h3v1h-3zM18 6h3v1h-3zM22 6h1v1h-1zM0 7h1v1h-1zM2 7h3v1h-3zM6 7h1v1h-1zM8 7h1v1h-1zM10 7h1v1h-1zM12 7h1v1h-1zM14 7h1v1h-1zM16 7h1v1h-1zM18 7h1v1h-1zM20 7h1v1h-1zM22 7h1v1h-1zM0 8h1v1h-1zM2 8h3v1h-3zM6 8h3v1h-3zM10 8h3v1h-3zM14 8h3v1h-3zM18 8h3v1h-3zM22 8h1v1h-1zM0 9h1v1h-1zM22 9h1v1h-1zM0 10h1v1h-1zM2 10h3v1h-3zM6 10h3v1h-3zM10 10h3v1h-3zM14 10h3v1h-3zM18 10h3v1h-3zM22 10h1v1h-1zM0 11h1v1h-1zM2 11h3v1h-3zM6 11h1v1h-1zM8 11h1v1h-1zM10 11h1v1h-1zM12 11h1v1h-1zM14 11h1v1h-1zM16 11h1v1h-1zM18 11h3v1h-3zM22 11h1v1h-1zM0 12h1v1h-1zM2 12h3v1h-3zM6 12h3v1h-3zM10 12h3v1h-3zM14 12h3v1h-3zM18 12h3v1h-3zM22 12h1v1h-1zM0 13h1v1h-1zM22 13h1v1h-1zM0 14h1v1h-1zM2 14h3v1h-3zM6 14h3v1h-3zM10 14h3v1h-3zM14 14h3v1h-3zM18 14h3v1h-3zM22 14h1v1h-1zM0 15h1v1h-1zM2 15h1v1h-1zM4 15h1v1h-1zM6 15h1v1h-1zM8 15h1v1h-1zM10 15h3v1h-3zM14 15h1v1h-1zM16 15h1v1h-1zM18 15h3v1h-3zM22 15h1v1h-1zM0 16h1v1h-1zM2 16h3v1h-3zM6 16h3v1h-3zM10 16h3v1h-3zM14 16h3v1h-3zM18 16h3v1h-3zM22 16h1v1h-1zM0 17h1v1h-1zM22 17h1v1h-1zM0 18h1v1h-1zM2 18h3v1h-3zM6 18h3v1h-3zM10 18h3v1h-3zM14 18h3v1h-3zM18 18h3v1h-3zM22 18h1v1h-1zM0 19h1v1h-1zM2 19h3v1h-3zM6 19h1v1h-1zM8 19h1v1h-1zM10 19h1v1h-1zM12 19h1v1h-1zM14 19h1v1h-1zM16 19h1v1h-1zM18 19h3v1h-3zM22 19h1v1h-1zM0 20h1v1h-1zM2 20h3v1h-3zM6 20h3v1h-3zM10 20h3v1h-3zM14 20h3v1h-3zM18 20h3v1h-3zM22 20h1v1h-1zM0 21h1v1h-1zM22 21h1v1h-1zM0 22h23v1h-23z"/><path fill="#000" d="M1 1h21v1h-21zM1 2h1v1h-1zM5 2h1v1h-1zM9 2h1v1h-1zM13 2h1v1h-1zM17 2h1v1h-1zM21 2h1v1h-1zM1 3h1v1h-1zM5 3h1v1h-1zM9 3h1v1h-1zM13 3h1v1h-1zM17 3h1v1h-1zM21 3h1v1h-1zM1 4h1v1h-1zM5 4h1v1h-1zM9 4h1v1h-1zM13 4h1v1h-1zM17 4h1v1h-1zM21 4h1v1h-1zM1 5h21v1h-21zM1 6h1v1h-1zM5 6h1v1h-1zM9 6h1v1h-1zM13 6h1v1h-1zM17 6h1v1h-1zM21 6h1v1h-1zM1 7h1v1h-1zM5 7h1v1h-1zM9 7h1v1h-1zM13 7h1v1h-1zM17 7h1v1h-1zM21 7h1v1h-1zM1 8h1v1h-1zM5 8h1v1h-1zM9 8h1v1h-1zM13 8h1v1h-1zM17 8h1v1h-1zM21 8h1v1h-1zM1 9h21v1h-21zM1 10h1v1h-1zM5 10h1v1h-1zM9 10h1v1h-1zM13 10h1v1h-1zM17 10h1v1h-1zM21 10h1v1h-1zM1 11h1v1h-1zM5 11h1v1h-1zM9 11h1v1h-1zM13 11h1v1h-1zM17 11h1v1h-1zM21 11h1v1h-1zM1 12h1v1h-1zM5 12h1v1h-1zM9 12h1v1h-1zM13 12h1v1h-1zM17 12h1v1h-1zM21 12h1v1h-1zM1 13h21v1h-21zM1 14h1v1h-1zM5 14h1v1h-1zM9 14h1v1h-1zM13 14h1v1h-1zM17 14h1v1h-1zM21 14h1v1h-1zM1 15h1v1h-1zM5 15h1v1h-1zM9 15h1v1h-1zM13 15h1v1h-1zM17 15h1v1h-1zM21 15h1v1h-1zM1 16h1v1h-1zM5 16h1v1h-1zM9 16h1v1h-1zM13 16h1v1h-1zM17 16h1v1h-1zM21 16h1v1h-1zM1 17h21v1h-21zM1 18h1v1h-1zM5 18h1v1h-1zM9 18h1v1h-1zM13 18h1v1h-1zM17 18h1v1h-1zM21 18h1v1h-1zM1 19h1v1h-1zM5 19h1v1h-1zM9 19h1v1h-1zM13 19h1v1h-1zM17 19h1v1h-1zM21 19h1v1h-1zM1 20h1v1h-1zM5 20h1v1h-1zM9 20h1v1h-1zM13 20h1v1h-1zM17 20h1v1h-1zM21 20h1v1h-1zM1 21h21v1h-21z"/><path fill="#808080" d="M3 3h1v1h-1zM7 3h1v1h-1zM7 7h1v1h-1zM11 7h1v1h-1zM15 7h1v1h-1zM19 7h1v1h-1zM7 11h1v1h-1zM11 11h1v1h-1zM15 11h1v1h-1zM3 15h1v1h-1zM7 15h1v1h-1zM15 15h1v1h-1zM7 19h1v1h-1zM11 19h1v1h-1zM15 19h1v1h-1z"/></svg>
<i style="left:728px;top:32px;width:2px;height:33px;background:#fff"></i>
<i style="left:730px;top:32px;width:1px;height:34px;background:#a0a0a0"></i>
<i style="left:728px;top:65px;width:3px;height:1px;background:#a0a0a0"></i>
<i style="left:819px;top:32px;width:2px;height:33px;background:#fff"></i>
<i style="left:821px;top:32px;width:1px;height:34px;background:#a0a0a0"></i>
<i style="left:819px;top:65px;width:3px;height:1px;background:#a0a0a0"></i>
<svg style="left:744px;top:37px" width="21" height="22" viewBox="0 0 21 22"><path fill="#fff" d="M0 0h15v1h-15zM0 1h1v1h-1zM14 1h1v1h-1zM0 2h1v1h-1zM2 2h1v1h-1zM11 2h2v1h-2zM14 2h1v1h-1zM0 3h1v1h-1zM14 3h1v1h-1zM0 4h1v1h-1zM2 4h11v1h-11zM14 4h4v1h-4zM0 5h1v1h-1zM2 5h2v1h-2zM17 5h1v1h-1zM0 6h1v1h-1zM2 6h2v1h-2zM5 6h1v1h-1zM14 6h2v1h-2zM17 6h1v1h-1zM0 7h1v1h-1zM2 7h2v1h-2zM17 7h1v1h-1zM0 8h1v1h-1zM2 8h2v1h-2zM5 8h11v1h-11zM17 8h4v1h-4zM0 9h1v1h-1zM2 9h2v1h-2zM5 9h2v1h-2zM20 9h1v1h-1zM0 10h1v1h-1zM2 10h2v1h-2zM5 10h2v1h-2zM8 10h1v1h-1zM17 10h2v1h-2zM20 10h1v1h-1zM0 11h1v1h-1zM2 11h2v1h-2zM5 11h2v1h-2zM20 11h1v1h-1zM0 12h1v1h-1zM5 12h2v1h-2zM8 12h11v1h-11zM20 12h1v1h-1zM0 13h4v1h-4zM5 13h2v1h-2zM8 13h1v1h-1zM17 13h2v1h-2zM20 13h1v1h-1zM3 14h1v1h-1zM5 14h2v1h-2zM8 14h11v1h-11zM20 14h1v1h-1zM3 15h1v1h-1zM5 15h2v1h-2zM8 15h1v1h-1zM12 15h7v1h-7zM20 15h1v1h-1zM3 16h1v1h-1zM8 16h11v1h-11zM20 16h1v1h-1zM3 17h4v1h-4zM8 17h1v1h-1zM18 17h1v1h-1zM20 17h1v1h-1zM6 18h1v1h-1zM8 18h11v1h-11zM20 18h1v1h-1zM6 19h1v1h-1zM8 19h11v1h-11zM20 19h1v1h-1zM6 20h1v1h-1zM20 20h1v1h-1zM6 21h15v1h-15z"/><path fill="#000" d="M1 1h13v1h-13zM1 2h1v1h-1zM3 2h8v1h-8zM13 2h1v1h-1zM1 3h13v1h-13zM1 4h1v1h-1zM13 4h1v1h-1zM1 5h1v1h-1zM4 5h13v1h-13zM1 6h1v1h-1zM4 6h1v1h-1zM6 6h8v1h-8zM16 6h1v1h-1zM1 7h1v1h-1zM4 7h13v1h-13zM1 8h1v1h-1zM4 8h1v1h-1zM16 8h1v1h-1zM1 9h1v1h-1zM4 9h1v1h-1zM7 9h13v1h-13zM1 10h1v1h-1zM4 10h1v1h-1zM7 10h1v1h-1zM9 10h8v1h-8zM19 10h1v1h-1zM1 11h1v1h-1zM4 11h1v1h-1zM7 11h13v1h-13zM1 12h4v1h-4zM7 12h1v1h-1zM19 12h1v1h-1zM4 13h1v1h-1zM7 13h1v1h-1zM9 13h8v1h-8zM19 13h1v1h-1zM4 14h1v1h-1zM7 14h1v1h-1zM19 14h1v1h-1zM4 15h1v1h-1zM7 15h1v1h-1zM9 15h3v1h-3zM19 15h1v1h-1zM4 16h4v1h-4zM19 16h1v1h-1zM7 17h1v1h-1zM9 17h9v1h-9zM19 17h1v1h-1zM7 18h1v1h-1zM19 18h1v1h-1zM7 19h1v1h-1zM19 19h1v1h-1zM7 20h13v1h-13z"/></svg>
<svg style="left:782px;top:39px" width="19" height="20" viewBox="0 0 19 20"><path fill="#fff" d="M11 0h4v1h-4zM2 1h5v1h-5zM11 1h1v1h-1zM2 2h1v1h-1zM6 2h1v1h-1zM11 2h1v1h-1zM16 2h1v1h-1zM18 2h1v1h-1zM2 3h1v1h-1zM6 3h1v1h-1zM11 3h1v1h-1zM17 3h1v1h-1zM2 4h1v1h-1zM6 4h2v1h-2zM11 4h1v1h-1zM16 4h1v1h-1zM18 4h1v1h-1zM2 5h2v1h-2zM7 5h2v1h-2zM11 5h1v1h-1zM17 5h1v1h-1zM2 6h1v1h-1zM8 6h2v1h-2zM11 6h1v1h-1zM16 6h1v1h-1zM18 6h1v1h-1zM0 7h3v1h-3zM9 7h1v1h-1zM11 7h1v1h-1zM17 7h1v1h-1zM0 8h1v1h-1zM2 8h1v1h-1zM7 8h1v1h-1zM9 8h1v1h-1zM11 8h1v1h-1zM16 8h1v1h-1zM18 8h1v1h-1zM0 9h1v1h-1zM7 9h1v1h-1zM9 9h1v1h-1zM11 9h1v1h-1zM17 9h1v1h-1zM0 10h3v1h-3zM7 10h1v1h-1zM9 10h1v1h-1zM11 10h1v1h-1zM16 10h1v1h-1zM18 10h1v1h-1zM1 11h2v1h-2zM7 11h3v1h-3zM11 11h1v1h-1zM17 11h1v1h-1zM0 12h2v1h-2zM7 12h1v1h-1zM11 12h1v1h-1zM16 12h1v1h-1zM18 12h1v1h-1zM0 13h1v1h-1zM7 13h2v1h-2zM11 13h1v1h-1zM17 13h1v1h-1zM0 14h1v1h-1zM4 14h1v1h-1zM8 14h2v1h-2zM11 14h1v1h-1zM16 14h1v1h-1zM18 14h1v1h-1zM0 15h1v1h-1zM3 15h2v1h-2zM9 15h3v1h-3zM17 15h1v1h-1zM0 16h1v1h-1zM2 16h4v1h-4zM10 16h2v1h-2zM16 16h1v1h-1zM18 16h1v1h-1zM0 17h8v1h-8zM10 17h2v1h-2zM17 17h1v1h-1zM1 18h1v1h-1zM3 18h1v1h-1zM5 18h1v1h-1zM7 18h1v1h-1zM10 18h5v1h-5zM1 19h10v1h-10z"/><path fill="#000" d="M12 1h2v1h-2zM3 2h3v1h-3zM12 2h1v1h-1zM3 3h3v1h-3zM12 3h2v1h-2zM3 4h3v1h-3zM12 4h1v1h-1zM4 5h3v1h-3zM12 5h2v1h-2zM3 6h5v1h-5zM12 6h1v1h-1zM3 7h6v1h-6zM12 7h2v1h-2zM1 8h1v1h-1zM3 8h4v1h-4zM8 8h1v1h-1zM12 8h1v1h-1zM1 9h6v1h-6zM8 9h1v1h-1zM12 9h2v1h-2zM3 10h4v1h-4zM8 10h1v1h-1zM12 10h1v1h-1zM3 11h4v1h-4zM12 11h2v1h-2zM2 12h5v1h-5zM12 12h1v1h-1zM1 13h6v1h-6zM12 13h2v1h-2zM1 14h3v1h-3zM5 14h3v1h-3zM12 14h1v1h-1zM1 15h2v1h-2zM5 15h4v1h-4zM12 15h2v1h-2zM1 16h1v1h-1zM6 16h4v1h-4zM12 16h1v1h-1zM8 17h2v1h-2zM12 17h2v1h-2zM2 18h1v1h-1zM4 18h1v1h-1zM6 18h1v1h-1zM8 18h2v1h-2z"/><path fill="#808080" d="M14 1h5v1h-5zM13 2h3v1h-3zM17 2h1v1h-1zM14 3h3v1h-3zM18 3h1v1h-1zM13 4h3v1h-3zM17 4h1v1h-1zM14 5h3v1h-3zM18 5h1v1h-1zM13 6h3v1h-3zM17 6h1v1h-1zM14 7h3v1h-3zM18 7h1v1h-1zM13 8h3v1h-3zM17 8h1v1h-1zM14 9h3v1h-3zM18 9h1v1h-1zM13 10h3v1h-3zM17 10h1v1h-1zM14 11h3v1h-3zM18 11h1v1h-1zM13 12h3v1h-3zM17 12h1v1h-1zM14 13h3v1h-3zM18 13h1v1h-1zM13 14h3v1h-3zM17 14h1v1h-1zM14 15h3v1h-3zM18 15h1v1h-1zM13 16h3v1h-3zM17 16h1v1h-1zM14 17h3v1h-3zM18 17h1v1h-1z"/></svg>
<svg style="left:842px;top:44px" width="7" height="12" viewBox="0 0 7 12" ><path fill="#000" shape-rendering="geometricPrecision" d="M0 0L6.5 6L0 12z"/></svg>
<span style="left:272.7px;top:42px;letter-spacing:0.05px;">Work with ROM</span>
<span style="left:448.9px;top:42px;letter-spacing:-0.15px;">Work with service area</span>
<span style="left:660.0px;top:42px;letter-spacing:0.09px;">Defect list</span>
<div style="left:2px;top:76px;width:280px;height:78px;border:1px solid #a0a0a0;box-shadow:1px 1px 0 #fff, inset 1px 1px 0 #fff;"></div>
<div style="left:9px;top:76px;width:28px;height:2px;background:#f0f0f0"></div>
<span style="left:9.1px;top:71px;letter-spacing:0.54px;">HDD</span>
<span class="b" style="left:49.7px;top:87px;letter-spacing:0.60px;">Model</span>
<span style="left:95.2px;top:87px;letter-spacing:0.11px;">ST1000LM024 HN-M101MBB</span>
<span class="b" style="left:55.0px;top:104px;letter-spacing:-0.17px;">Serial</span>
<span style="left:95.2px;top:104px;transform:scaleX(0.956);">S35TJACG903291</span>
<span class="b" style="left:32.8px;top:121px;letter-spacing:0.09px;">Firmware</span>
<span style="left:95.2px;top:121px;letter-spacing:0.10px;">2BA30003</span>
<span class="b" style="left:36.9px;top:138px;letter-spacing:-0.02px;">Capacity</span>
<span style="left:95.2px;top:138px;">1 000 GB (1 953 525 168)</span>
<svg style="left:6px;top:91px" width="5" height="3" viewBox="0 0 5 3" ><path d="M0 0h5v1h-5zM1 1h3v1h-3zM2 2h1v1h-1z" fill="#000"/></svg>
<div style="left:286px;top:76px;width:956px;height:35px;border:1px solid #a0a0a0;box-shadow:1px 1px 0 #fff, inset 1px 1px 0 #fff;"></div>
<div style="left:294px;top:76px;width:64px;height:2px;background:#f0f0f0"></div>
<span style="left:294.0px;top:71px;">Current test</span>
<span style="left:296.9px;top:92px;transform:scaleX(0.863);color:#000;">Utility status</span>
<div style="left:286px;top:118px;width:956px;height:36px;border:1px solid #a0a0a0;box-shadow:1px 1px 0 #fff, inset 1px 1px 0 #fff;"></div>
<div style="left:294px;top:118px;width:53px;height:2px;background:#f0f0f0"></div>
<span style="left:294.0px;top:113px;letter-spacing:0.01px;">Operation</span>
<span class="b" style="left:6.0px;top:158px;transform:scaleX(0.915);">Phys:</span>
<span class="b" style="left:50.9px;top:158px;letter-spacing:0.02px;">Max cyl:</span>
<span class="v" style="left:103.2px;top:158px;letter-spacing:0.21px;">224 251</span>
<span class="b" style="left:156.2px;top:158px;letter-spacing:0.16px;">Heads:</span>
<span class="v" style="left:200.4px;top:158px;letter-spacing:0.30px;">4</span>
<span class="b" style="left:214.8px;top:158px;letter-spacing:-0.28px;">SA SPT:</span>
<span class="v" style="left:263.5px;top:158px;letter-spacing:0.30px;">1536</span>
<span class="b" style="left:619.1px;top:158px;letter-spacing:-0.03px;">HDD family:</span>
<span class="v" style="left:691.9px;top:158px;letter-spacing:-0.02px;">M8E 2.5&#x27;&#x27; (SATA)</span>
<span class="b" style="left:1111.8px;top:158px;letter-spacing:0.31px;">COM port:</span>
<span class="v" style="left:1178.2px;top:158px;letter-spacing:0.17px;">57600 bps</span>
<i style="left:2px;top:174px;width:1187px;height:1px;background:#ffffff"></i>
<i style="left:2px;top:175px;width:1186px;height:1px;background:#e3e3e3"></i>
<i style="left:2px;top:175px;width:1px;height:719px;background:#e3e3e3"></i>
<i style="left:1187px;top:175px;width:1px;height:719px;background:#a0a0a0"></i>
<i style="left:1188px;top:174px;width:1px;height:721px;background:#696969"></i>
<i style="left:3px;top:893px;width:1185px;height:1px;background:#a0a0a0"></i>
<i style="left:2px;top:894px;width:1187px;height:1px;background:#696969"></i>
<i style="left:5px;top:218px;width:1180px;height:1px;background:#a0a0a0"></i>
<i style="left:5px;top:219px;width:1180px;height:1px;background:#ffffff"></i>
<i style="left:47px;top:182px;width:1px;height:34px;background:#a0a0a0"></i>
<i style="left:172px;top:182px;width:1px;height:34px;background:#a0a0a0"></i>
<i style="left:173px;top:182px;width:1px;height:34px;background:#ffffff"></i>
<div style="left:177px;top:180px;width:39px;height:38px;background:#f7f7f7;border-left:1px solid #a0a0a0;border-top:1px solid #a0a0a0;border-right:1px solid #fff;border-bottom:1px solid #fff"></div>
<svg style="left:15px;top:189px" width="22" height="20" viewBox="0 0 22 20"><path fill="#fff" d="M3 0h13v1h-13zM2 1h2v1h-2zM15 1h1v1h-1zM1 2h2v1h-2zM5 2h9v1h-9zM15 2h1v1h-1zM0 3h2v1h-2zM3 3h1v1h-1zM5 3h1v1h-1zM13 3h1v1h-1zM15 3h1v1h-1zM0 4h1v1h-1zM5 4h1v1h-1zM12 4h2v1h-2zM15 4h1v1h-1zM17 4h3v1h-3zM0 5h1v1h-1zM2 5h4v1h-4zM11 5h2v1h-2zM14 5h4v1h-4zM19 5h2v1h-2zM0 6h1v1h-1zM2 6h1v1h-1zM10 6h2v1h-2zM13 6h1v1h-1zM15 6h2v1h-2zM18 6h1v1h-1zM20 6h2v1h-2zM0 7h1v1h-1zM2 7h1v1h-1zM10 7h1v1h-1zM12 7h3v1h-3zM17 7h3v1h-3zM21 7h1v1h-1zM0 8h1v1h-1zM2 8h1v1h-1zM10 8h2v1h-2zM13 8h6v1h-6zM20 8h2v1h-2zM0 9h1v1h-1zM2 9h1v1h-1zM11 9h2v1h-2zM14 9h1v1h-1zM17 9h1v1h-1zM19 9h2v1h-2zM0 10h1v1h-1zM2 10h1v1h-1zM11 10h2v1h-2zM14 10h1v1h-1zM17 10h1v1h-1zM19 10h2v1h-2zM0 11h1v1h-1zM2 11h1v1h-1zM10 11h2v1h-2zM13 11h6v1h-6zM20 11h2v1h-2zM0 12h1v1h-1zM2 12h1v1h-1zM10 12h1v1h-1zM12 12h3v1h-3zM17 12h3v1h-3zM21 12h1v1h-1zM0 13h1v1h-1zM2 13h1v1h-1zM10 13h2v1h-2zM13 13h1v1h-1zM15 13h2v1h-2zM18 13h1v1h-1zM20 13h2v1h-2zM0 14h1v1h-1zM2 14h1v1h-1zM11 14h2v1h-2zM14 14h4v1h-4zM19 14h2v1h-2zM0 15h1v1h-1zM2 15h1v1h-1zM12 15h2v1h-2zM15 15h1v1h-1zM17 15h3v1h-3zM0 16h1v1h-1zM2 16h1v1h-1zM13 16h1v1h-1zM15 16h1v1h-1zM0 17h1v1h-1zM2 17h12v1h-12zM15 17h1v1h-1zM0 18h1v1h-1zM15 18h1v1h-1zM0 19h16v1h-16z"/><path fill="#000" d="M4 1h11v1h-11zM3 2h2v1h-2zM14 2h1v1h-1zM2 3h1v1h-1zM4 3h1v1h-1zM14 3h1v1h-1zM1 4h4v1h-4zM14 4h1v1h-1zM1 5h1v1h-1zM13 5h1v1h-1zM18 5h1v1h-1zM1 6h1v1h-1zM12 6h1v1h-1zM14 6h1v1h-1zM17 6h1v1h-1zM19 6h1v1h-1zM1 7h1v1h-1zM11 7h1v1h-1zM15 7h2v1h-2zM20 7h1v1h-1zM1 8h1v1h-1zM12 8h1v1h-1zM19 8h1v1h-1zM1 9h1v1h-1zM13 9h1v1h-1zM18 9h1v1h-1zM1 10h1v1h-1zM13 10h1v1h-1zM18 10h1v1h-1zM1 11h1v1h-1zM12 11h1v1h-1zM19 11h1v1h-1zM1 12h1v1h-1zM11 12h1v1h-1zM15 12h2v1h-2zM20 12h1v1h-1zM1 13h1v1h-1zM12 13h1v1h-1zM14 13h1v1h-1zM17 13h1v1h-1zM19 13h1v1h-1zM1 14h1v1h-1zM13 14h1v1h-1zM18 14h1v1h-1zM1 15h1v1h-1zM14 15h1v1h-1zM1 16h1v1h-1zM14 16h1v1h-1zM1 17h1v1h-1zM14 17h1v1h-1zM1 18h14v1h-14z"/></svg>
<svg style="left:62px;top:189px" width="22" height="20" viewBox="0 0 22 20"><path fill="#fff" d="M3 0h13v1h-13zM2 1h2v1h-2zM15 1h1v1h-1zM1 2h2v1h-2zM5 2h9v1h-9zM15 2h1v1h-1zM0 3h2v1h-2zM3 3h1v1h-1zM5 3h1v1h-1zM9 3h2v1h-2zM15 3h3v1h-3zM0 4h1v1h-1zM5 4h5v1h-5zM12 4h3v1h-3zM17 4h2v1h-2zM0 5h1v1h-1zM2 5h5v1h-5zM8 5h1v1h-1zM10 5h7v1h-7zM18 5h2v1h-2zM0 6h1v1h-1zM2 6h1v1h-1zM5 6h1v1h-1zM7 6h1v1h-1zM9 6h3v1h-3zM15 6h3v1h-3zM19 6h1v1h-1zM0 7h1v1h-1zM2 7h1v1h-1zM5 7h1v1h-1zM7 7h4v1h-4zM12 7h2v1h-2zM16 7h1v1h-1zM18 7h2v1h-2zM0 8h1v1h-1zM2 8h1v1h-1zM5 8h1v1h-1zM7 8h1v1h-1zM9 8h1v1h-1zM11 8h3v1h-3zM15 8h1v1h-1zM17 8h2v1h-2zM0 9h1v1h-1zM2 9h1v1h-1zM5 9h1v1h-1zM7 9h4v1h-4zM12 9h2v1h-2zM15 9h7v1h-7zM0 10h1v1h-1zM2 10h1v1h-1zM5 10h1v1h-1zM12 10h2v1h-2zM21 10h1v1h-1zM0 11h1v1h-1zM2 11h1v1h-1zM5 11h9v1h-9zM15 11h5v1h-5zM21 11h1v1h-1zM0 12h1v1h-1zM2 12h1v1h-1zM8 12h2v1h-2zM11 12h3v1h-3zM15 12h1v1h-1zM17 12h1v1h-1zM19 12h1v1h-1zM21 12h1v1h-1zM0 13h1v1h-1zM2 13h1v1h-1zM7 13h2v1h-2zM10 13h1v1h-1zM12 13h2v1h-2zM16 13h4v1h-4zM21 13h1v1h-1zM0 14h1v1h-1zM2 14h1v1h-1zM7 14h1v1h-1zM9 14h3v1h-3zM15 14h3v1h-3zM19 14h1v1h-1zM21 14h1v1h-1zM0 15h1v1h-1zM2 15h1v1h-1zM7 15h2v1h-2zM10 15h7v1h-7zM18 15h1v1h-1zM20 15h2v1h-2zM0 16h1v1h-1zM2 16h1v1h-1zM8 16h2v1h-2zM12 16h3v1h-3zM17 16h4v1h-4zM0 17h1v1h-1zM2 17h10v1h-10zM16 17h2v1h-2zM0 18h1v1h-1zM15 18h2v1h-2zM0 19h16v1h-16z"/><path fill="#000" d="M4 1h11v1h-11zM3 2h2v1h-2zM14 2h1v1h-1zM2 3h1v1h-1zM4 3h1v1h-1zM11 3h4v1h-4zM1 4h4v1h-4zM10 4h2v1h-2zM15 4h2v1h-2zM1 5h1v1h-1zM7 5h1v1h-1zM9 5h1v1h-1zM17 5h1v1h-1zM1 6h1v1h-1zM6 6h1v1h-1zM8 6h1v1h-1zM12 6h3v1h-3zM18 6h1v1h-1zM1 7h1v1h-1zM6 7h1v1h-1zM11 7h1v1h-1zM14 7h2v1h-2zM17 7h1v1h-1zM1 8h1v1h-1zM6 8h1v1h-1zM10 8h1v1h-1zM14 8h1v1h-1zM16 8h1v1h-1zM1 9h1v1h-1zM6 9h1v1h-1zM11 9h1v1h-1zM14 9h1v1h-1zM1 10h1v1h-1zM6 10h6v1h-6zM14 10h7v1h-7zM1 11h1v1h-1zM14 11h1v1h-1zM20 11h1v1h-1zM1 12h1v1h-1zM10 12h1v1h-1zM14 12h1v1h-1zM16 12h1v1h-1zM20 12h1v1h-1zM1 13h1v1h-1zM9 13h1v1h-1zM11 13h1v1h-1zM14 13h2v1h-2zM20 13h1v1h-1zM1 14h1v1h-1zM8 14h1v1h-1zM12 14h3v1h-3zM18 14h1v1h-1zM20 14h1v1h-1zM1 15h1v1h-1zM9 15h1v1h-1zM17 15h1v1h-1zM19 15h1v1h-1zM1 16h1v1h-1zM10 16h2v1h-2zM15 16h2v1h-2zM1 17h1v1h-1zM12 17h4v1h-4zM1 18h14v1h-14z"/></svg>
<svg style="left:98px;top:186px" width="22" height="21" viewBox="0 0 22 21"><path fill="#fff" d="M3 0h3v1h-3zM2 1h2v1h-2zM5 1h2v1h-2zM1 2h2v1h-2zM4 2h1v1h-1zM6 2h5v1h-5zM0 3h2v1h-2zM3 3h3v1h-3zM7 3h2v1h-2zM10 3h1v1h-1zM0 4h1v1h-1zM2 4h2v1h-2zM5 4h2v1h-2zM8 4h1v1h-1zM10 4h11v1h-11zM0 5h2v1h-2zM3 5h2v1h-2zM6 5h2v1h-2zM20 5h2v1h-2zM1 6h2v1h-2zM4 6h2v1h-2zM7 6h2v1h-2zM10 6h8v1h-8zM19 6h1v1h-1zM21 6h1v1h-1zM2 7h2v1h-2zM5 7h4v1h-4zM10 7h1v1h-1zM17 7h1v1h-1zM19 7h1v1h-1zM21 7h1v1h-1zM2 8h1v1h-1zM10 8h1v1h-1zM17 8h1v1h-1zM19 8h1v1h-1zM21 8h1v1h-1zM2 9h3v1h-3zM6 9h1v1h-1zM8 9h3v1h-3zM17 9h1v1h-1zM19 9h1v1h-1zM21 9h1v1h-1zM4 10h1v1h-1zM6 10h1v1h-1zM8 10h1v1h-1zM17 10h1v1h-1zM19 10h1v1h-1zM21 10h1v1h-1zM4 11h1v1h-1zM6 11h1v1h-1zM8 11h1v1h-1zM17 11h1v1h-1zM19 11h1v1h-1zM21 11h1v1h-1zM4 12h1v1h-1zM6 12h1v1h-1zM8 12h10v1h-10zM19 12h1v1h-1zM21 12h1v1h-1zM4 13h1v1h-1zM6 13h2v1h-2zM18 13h2v1h-2zM21 13h1v1h-1zM4 14h1v1h-1zM6 14h14v1h-14zM21 14h1v1h-1zM4 15h1v1h-1zM6 15h1v1h-1zM8 15h2v1h-2zM16 15h2v1h-2zM19 15h1v1h-1zM21 15h1v1h-1zM4 16h1v1h-1zM6 16h1v1h-1zM8 16h1v1h-1zM10 16h3v1h-3zM15 16h1v1h-1zM17 16h1v1h-1zM19 16h1v1h-1zM21 16h1v1h-1zM4 17h1v1h-1zM6 17h1v1h-1zM8 17h1v1h-1zM10 17h1v1h-1zM12 17h1v1h-1zM15 17h1v1h-1zM17 17h1v1h-1zM19 17h1v1h-1zM21 17h1v1h-1zM4 18h1v1h-1zM6 18h3v1h-3zM10 18h3v1h-3zM15 18h1v1h-1zM17 18h3v1h-3zM21 18h1v1h-1zM4 19h2v1h-2zM20 19h2v1h-2zM5 20h16v1h-16z"/><path fill="#000" d="M4 1h1v1h-1zM3 2h1v1h-1zM5 2h1v1h-1zM2 3h1v1h-1zM6 3h1v1h-1zM9 3h1v1h-1zM1 4h1v1h-1zM7 4h1v1h-1zM9 4h1v1h-1zM2 5h1v1h-1zM8 5h12v1h-12zM3 6h1v1h-1zM9 6h1v1h-1zM18 6h1v1h-1zM20 6h1v1h-1zM4 7h1v1h-1zM9 7h1v1h-1zM18 7h1v1h-1zM20 7h1v1h-1zM3 8h7v1h-7zM18 8h1v1h-1zM20 8h1v1h-1zM5 9h1v1h-1zM7 9h1v1h-1zM18 9h1v1h-1zM20 9h1v1h-1zM5 10h1v1h-1zM7 10h1v1h-1zM18 10h1v1h-1zM20 10h1v1h-1zM5 11h1v1h-1zM7 11h1v1h-1zM18 11h1v1h-1zM20 11h1v1h-1zM5 12h1v1h-1zM7 12h1v1h-1zM18 12h1v1h-1zM20 12h1v1h-1zM5 13h1v1h-1zM8 13h10v1h-10zM20 13h1v1h-1zM5 14h1v1h-1zM20 14h1v1h-1zM5 15h1v1h-1zM10 15h6v1h-6zM20 15h1v1h-1zM5 16h1v1h-1zM9 16h1v1h-1zM13 16h2v1h-2zM16 16h1v1h-1zM20 16h1v1h-1zM5 17h1v1h-1zM9 17h1v1h-1zM13 17h2v1h-2zM16 17h1v1h-1zM20 17h1v1h-1zM5 18h1v1h-1zM9 18h1v1h-1zM13 18h2v1h-2zM16 18h1v1h-1zM20 18h1v1h-1zM6 19h14v1h-14z"/></svg>
<svg style="left:137px;top:186px" width="24" height="24" viewBox="0 0 24 24"><path fill="#fff" d="M4 0h20v1h-20zM3 1h2v1h-2zM23 1h1v1h-1zM2 2h2v1h-2zM5 2h16v1h-16zM22 2h2v1h-2zM1 3h2v1h-2zM4 3h2v1h-2zM18 3h2v1h-2zM21 3h2v1h-2zM1 4h1v1h-1zM3 4h2v1h-2zM18 4h1v1h-1zM20 4h2v1h-2zM1 5h1v1h-1zM3 5h1v1h-1zM18 5h1v1h-1zM20 5h1v1h-1zM1 6h1v1h-1zM3 6h1v1h-1zM18 6h1v1h-1zM20 6h1v1h-1zM1 7h1v1h-1zM3 7h1v1h-1zM18 7h1v1h-1zM20 7h1v1h-1zM1 8h1v1h-1zM3 8h1v1h-1zM18 8h1v1h-1zM20 8h1v1h-1zM1 9h1v1h-1zM3 9h2v1h-2zM18 9h1v1h-1zM20 9h2v1h-2zM1 10h2v1h-2zM4 10h1v1h-1zM18 10h2v1h-2zM21 10h1v1h-1zM2 11h1v1h-1zM4 11h1v1h-1zM19 11h1v1h-1zM21 11h1v1h-1zM2 12h1v1h-1zM4 12h1v1h-1zM19 12h1v1h-1zM21 12h1v1h-1zM2 13h1v1h-1zM4 13h2v1h-2zM19 13h1v1h-1zM21 13h2v1h-2zM2 14h2v1h-2zM5 14h1v1h-1zM19 14h2v1h-2zM22 14h1v1h-1zM3 15h1v1h-1zM5 15h1v1h-1zM20 15h1v1h-1zM22 15h1v1h-1zM3 16h1v1h-1zM5 16h1v1h-1zM20 16h1v1h-1zM22 16h1v1h-1zM3 17h1v1h-1zM5 17h1v1h-1zM20 17h1v1h-1zM22 17h1v1h-1zM2 18h2v1h-2zM5 18h1v1h-1zM19 18h2v1h-2zM22 18h1v1h-1zM2 19h1v1h-1zM4 19h2v1h-2zM19 19h1v1h-1zM21 19h2v1h-2zM1 20h2v1h-2zM4 20h1v1h-1zM18 20h2v1h-2zM21 20h1v1h-1zM0 21h2v1h-2zM3 21h16v1h-16zM20 21h2v1h-2zM0 22h1v1h-1zM19 22h2v1h-2zM0 23h20v1h-20z"/><path fill="#000" d="M5 1h18v1h-18zM4 2h1v1h-1zM21 2h1v1h-1zM3 3h1v1h-1zM20 3h1v1h-1zM2 4h1v1h-1zM19 4h1v1h-1zM2 5h1v1h-1zM19 5h1v1h-1zM2 6h1v1h-1zM19 6h1v1h-1zM2 7h1v1h-1zM19 7h1v1h-1zM2 8h1v1h-1zM19 8h1v1h-1zM2 9h1v1h-1zM19 9h1v1h-1zM3 10h1v1h-1zM20 10h1v1h-1zM3 11h1v1h-1zM20 11h1v1h-1zM3 12h1v1h-1zM20 12h1v1h-1zM3 13h1v1h-1zM20 13h1v1h-1zM4 14h1v1h-1zM21 14h1v1h-1zM4 15h1v1h-1zM21 15h1v1h-1zM4 16h1v1h-1zM21 16h1v1h-1zM4 17h1v1h-1zM21 17h1v1h-1zM4 18h1v1h-1zM21 18h1v1h-1zM3 19h1v1h-1zM20 19h1v1h-1zM3 20h1v1h-1zM20 20h1v1h-1zM2 21h1v1h-1zM19 21h1v1h-1zM1 22h18v1h-18z"/><path fill="#808080" d="M11 12h2v1h-2zM11 13h2v1h-2zM10 15h3v1h-3zM10 16h3v1h-3zM11 17h2v1h-2zM10 18h4v1h-4zM10 19h4v1h-4z"/></svg>
<span class="it" style="left:140.6px;top:189.07px;font-size:7px;line-height:9px;letter-spacing:-1.38px;color:#000;text-shadow:0 0 0 #000;">01101</span>
<svg style="left:186px;top:189px" width="22" height="22" viewBox="0 0 22 22"><path fill="#fff" d="M0 0h17v1h-17zM0 1h1v1h-1zM16 1h1v1h-1zM0 2h1v1h-1zM16 2h1v1h-1zM0 3h22v1h-22zM2 4h1v1h-1zM21 4h1v1h-1zM2 5h20v1h-20zM2 6h1v1h-1zM21 6h1v1h-1zM2 7h20v1h-20zM0 8h17v1h-17zM0 9h1v1h-1zM16 9h1v1h-1zM0 10h1v1h-1zM16 10h1v1h-1zM0 11h22v1h-22zM2 12h1v1h-1zM21 12h1v1h-1zM2 13h20v1h-20zM0 14h17v1h-17zM0 15h1v1h-1zM16 15h1v1h-1zM0 16h1v1h-1zM16 16h1v1h-1zM0 17h22v1h-22zM2 18h1v1h-1zM21 18h1v1h-1zM2 19h20v1h-20zM2 20h1v1h-1zM21 20h1v1h-1zM2 21h20v1h-20z"/><path fill="#000" d="M1 1h15v1h-15zM1 2h15v1h-15zM3 4h18v1h-18zM3 6h18v1h-18zM1 9h15v1h-15zM1 10h15v1h-15zM3 12h18v1h-18zM1 15h15v1h-15zM1 16h15v1h-15zM3 18h18v1h-18zM3 20h18v1h-18z"/></svg>
<svg style="left:224px;top:189px" width="21" height="22" viewBox="0 0 21 22"><path fill="#fff" d="M0 0h21v1h-21zM0 1h1v1h-1zM16 1h2v1h-2zM20 1h1v1h-1zM0 2h18v1h-18zM20 2h1v1h-1zM0 3h21v1h-21zM0 4h1v1h-1zM16 4h2v1h-2zM20 4h1v1h-1zM0 5h18v1h-18zM20 5h1v1h-1zM0 6h21v1h-21zM0 7h1v1h-1zM16 7h2v1h-2zM20 7h1v1h-1zM0 8h18v1h-18zM20 8h1v1h-1zM0 9h21v1h-21zM0 10h1v1h-1zM16 10h2v1h-2zM20 10h1v1h-1zM0 11h18v1h-18zM20 11h1v1h-1zM0 12h21v1h-21zM0 13h1v1h-1zM16 13h2v1h-2zM20 13h1v1h-1zM0 14h18v1h-18zM20 14h1v1h-1zM0 15h21v1h-21zM0 16h1v1h-1zM16 16h2v1h-2zM20 16h1v1h-1zM0 17h18v1h-18zM20 17h1v1h-1zM0 18h21v1h-21zM0 19h1v1h-1zM16 19h2v1h-2zM20 19h1v1h-1zM0 20h18v1h-18zM20 20h1v1h-1zM17 21h4v1h-4z"/><path fill="#000" d="M1 1h15v1h-15zM18 1h2v1h-2zM18 2h2v1h-2zM1 4h15v1h-15zM18 4h2v1h-2zM18 5h2v1h-2zM1 7h15v1h-15zM18 7h2v1h-2zM18 8h2v1h-2zM1 10h15v1h-15zM18 10h2v1h-2zM18 11h2v1h-2zM1 13h15v1h-15zM18 13h2v1h-2zM18 14h2v1h-2zM1 16h15v1h-15zM18 16h2v1h-2zM18 17h2v1h-2zM1 19h15v1h-15zM18 19h2v1h-2zM18 20h2v1h-2z"/></svg>
<span class="it" style="left:1201.6px;top:178px;font-size:25px;line-height:30px;font-weight:bold;color:#000;transform:scaleX(0.8);transform-origin:0 0;text-shadow:0 0 0 #000;">0</span>
<svg style="left:1196px;top:189px" width="7" height="9" viewBox="0 0 7 9" ><path d="M0.5 0.500v8l5-4z" fill="none" stroke="#404040" shape-rendering="geometricPrecision"/></svg>
<svg style="left:1213px;top:189px" width="7" height="9" viewBox="0 0 7 9" ><path d="M6.5 0.500v8l-5-4z" fill="none" stroke="#404040" shape-rendering="geometricPrecision"/></svg>
<svg style="left:1193px;top:221px" width="29" height="22" viewBox="0 0 29 22"><path fill="#fff" d="M5 0h11v1h-11zM17 0h11v1h-11zM5 1h1v1h-1zM15 1h1v1h-1zM17 1h1v1h-1zM27 1h1v1h-1zM2 2h4v1h-4zM15 2h3v1h-3zM27 2h2v1h-2zM2 3h1v1h-1zM28 3h1v1h-1zM2 4h1v1h-1zM4 4h2v1h-2zM7 4h1v1h-1zM9 4h1v1h-1zM11 4h1v1h-1zM13 4h1v1h-1zM15 4h3v1h-3zM19 4h1v1h-1zM21 4h1v1h-1zM23 4h1v1h-1zM25 4h2v1h-2zM28 4h1v1h-1zM0 5h3v1h-3zM4 5h23v1h-23zM28 5h1v1h-1zM0 6h1v1h-1zM4 6h2v1h-2zM8 6h19v1h-19zM28 6h1v1h-1zM0 7h1v1h-1zM4 7h2v1h-2zM8 7h4v1h-4zM15 7h2v1h-2zM20 7h2v1h-2zM25 7h2v1h-2zM28 7h1v1h-1zM0 8h3v1h-3zM4 8h23v1h-23zM28 8h1v1h-1zM0 9h1v1h-1zM4 9h2v1h-2zM8 9h19v1h-19zM28 9h1v1h-1zM0 10h1v1h-1zM4 10h2v1h-2zM8 10h19v1h-19zM28 10h1v1h-1zM0 11h3v1h-3zM4 11h8v1h-8zM17 11h10v1h-10zM28 11h1v1h-1zM0 12h1v1h-1zM4 12h2v1h-2zM8 12h4v1h-4zM17 12h10v1h-10zM28 12h1v1h-1zM0 13h1v1h-1zM4 13h2v1h-2zM8 13h4v1h-4zM17 13h5v1h-5zM25 13h2v1h-2zM28 13h1v1h-1zM0 14h3v1h-3zM4 14h8v1h-8zM17 14h5v1h-5zM25 14h2v1h-2zM28 14h1v1h-1zM0 15h1v1h-1zM4 15h2v1h-2zM8 15h4v1h-4zM17 15h5v1h-5zM25 15h2v1h-2zM28 15h1v1h-1zM0 16h1v1h-1zM4 16h2v1h-2zM8 16h19v1h-19zM28 16h1v1h-1zM0 17h3v1h-3zM4 17h23v1h-23zM28 17h1v1h-1zM2 18h1v1h-1zM4 18h1v1h-1zM9 18h7v1h-7zM28 18h1v1h-1zM2 19h1v1h-1zM4 19h1v1h-1zM6 19h2v1h-2zM9 19h1v1h-1zM11 19h1v1h-1zM13 19h1v1h-1zM15 19h1v1h-1zM17 19h12v1h-12zM2 20h1v1h-1zM6 20h2v1h-2zM17 20h1v1h-1zM2 21h16v1h-16z"/><path fill="#000" d="M6 1h9v1h-9zM18 1h9v1h-9zM6 2h9v1h-9zM18 2h9v1h-9zM3 3h25v1h-25zM3 4h1v1h-1zM6 4h1v1h-1zM8 4h1v1h-1zM10 4h1v1h-1zM12 4h1v1h-1zM14 4h1v1h-1zM18 4h1v1h-1zM20 4h1v1h-1zM22 4h1v1h-1zM24 4h1v1h-1zM27 4h1v1h-1zM3 5h1v1h-1zM27 5h1v1h-1zM1 6h3v1h-3zM6 6h2v1h-2zM27 6h1v1h-1zM1 7h3v1h-3zM6 7h2v1h-2zM12 7h3v1h-3zM17 7h3v1h-3zM22 7h3v1h-3zM27 7h1v1h-1zM3 8h1v1h-1zM27 8h1v1h-1zM1 9h3v1h-3zM6 9h2v1h-2zM27 9h1v1h-1zM1 10h3v1h-3zM6 10h2v1h-2zM27 10h1v1h-1zM3 11h1v1h-1zM12 11h5v1h-5zM27 11h1v1h-1zM1 12h3v1h-3zM6 12h2v1h-2zM12 12h5v1h-5zM27 12h1v1h-1zM1 13h3v1h-3zM6 13h2v1h-2zM12 13h5v1h-5zM22 13h3v1h-3zM27 13h1v1h-1zM3 14h1v1h-1zM12 14h5v1h-5zM22 14h3v1h-3zM27 14h1v1h-1zM1 15h3v1h-3zM6 15h2v1h-2zM12 15h5v1h-5zM22 15h3v1h-3zM27 15h1v1h-1zM1 16h3v1h-3zM6 16h2v1h-2zM27 16h1v1h-1zM3 17h1v1h-1zM27 17h1v1h-1zM3 18h1v1h-1zM5 18h4v1h-4zM16 18h12v1h-12zM3 19h1v1h-1zM5 19h1v1h-1zM8 19h1v1h-1zM10 19h1v1h-1zM12 19h1v1h-1zM14 19h1v1h-1zM16 19h1v1h-1zM3 20h3v1h-3zM8 20h9v1h-9z"/></svg>
<svg style="left:1198px;top:258px" width="21" height="17" viewBox="0 0 21 17"><path fill="#fff" d="M1 9h5v1h-5zM7 9h5v1h-5zM13 9h5v1h-5zM1 10h5v1h-5zM7 10h5v1h-5zM13 10h5v1h-5zM1 11h5v1h-5zM7 11h5v1h-5zM13 11h5v1h-5zM1 12h5v1h-5zM7 12h5v1h-5zM13 12h5v1h-5zM1 13h5v1h-5zM7 13h5v1h-5zM13 13h5v1h-5zM1 14h5v1h-5zM7 14h5v1h-5zM13 14h5v1h-5zM1 15h5v1h-5zM7 15h5v1h-5zM13 15h5v1h-5z"/><path fill="#000" d="M8 0h2v1h-2zM9 1h1v1h-1zM9 2h1v1h-1zM9 3h1v1h-1zM7 4h5v1h-5zM8 5h3v1h-3zM9 6h1v1h-1zM0 8h21v1h-21zM0 9h1v1h-1zM6 9h1v1h-1zM12 9h1v1h-1zM18 9h1v1h-1zM0 10h1v1h-1zM6 10h1v1h-1zM12 10h1v1h-1zM18 10h1v1h-1zM0 11h1v1h-1zM6 11h1v1h-1zM12 11h1v1h-1zM18 11h1v1h-1zM0 12h1v1h-1zM6 12h1v1h-1zM12 12h1v1h-1zM18 12h1v1h-1zM0 13h1v1h-1zM6 13h1v1h-1zM12 13h1v1h-1zM18 13h1v1h-1zM0 14h1v1h-1zM6 14h1v1h-1zM12 14h1v1h-1zM18 14h1v1h-1zM0 15h1v1h-1zM6 15h1v1h-1zM12 15h1v1h-1zM18 15h1v1h-1zM0 16h21v1h-21z"/></svg>
<span class="it" style="left:1200.5px;top:254.07px;font-size:7px;line-height:9px;letter-spacing:-0.89px;color:#000;text-shadow:0 0 0 #000;font-weight:bold;">1</span>
<span class="it" style="left:1199.7px;top:266.07px;font-size:7px;line-height:9px;letter-spacing:-0.29px;color:#000;text-shadow:0 0 0 #000;">0</span>
<span class="it" style="left:1205.7px;top:266.07px;font-size:7px;line-height:9px;letter-spacing:-0.29px;color:#000;text-shadow:0 0 0 #000;">0</span>
<span class="it" style="left:1211.7px;top:266.07px;font-size:7px;line-height:9px;letter-spacing:-0.29px;color:#000;text-shadow:0 0 0 #000;">0</span>
<span class="it" style="left:1199.2px;top:275.07px;font-size:7px;line-height:9px;letter-spacing:-1.24px;color:#000;text-shadow:0 0 0 #000;font-weight:bold;">RESET</span>
<svg style="left:1196px;top:295px" width="24" height="24" viewBox="0 0 24 24"><path fill="#fff" d="M17 4h3v1h-3zM17 5h3v1h-3zM17 6h3v1h-3zM17 7h3v1h-3zM17 8h3v1h-3zM17 9h3v1h-3z"/><path fill="#000" d="M18 0h1v1h-1zM18 1h1v1h-1zM18 2h1v1h-1zM16 3h5v1h-5zM16 4h1v1h-1zM20 4h1v1h-1zM16 5h1v1h-1zM20 5h1v1h-1zM16 6h1v1h-1zM20 6h1v1h-1zM16 7h1v1h-1zM20 7h1v1h-1zM16 8h1v1h-1zM20 8h1v1h-1zM16 9h1v1h-1zM20 9h1v1h-1zM16 10h5v1h-5zM9 11h1v1h-1zM18 11h1v1h-1zM8 12h1v1h-1zM18 12h1v1h-1zM7 13h1v1h-1zM17 13h3v1h-3zM2 14h5v1h-5zM11 14h13v1h-13zM2 15h1v1h-1zM17 15h3v1h-3zM2 16h1v1h-1zM2 17h1v1h-1zM15 17h7v1h-7zM2 18h1v1h-1zM2 19h1v1h-1zM15 19h7v1h-7zM2 20h1v1h-1zM18 20h1v1h-1zM2 21h1v1h-1zM18 21h1v1h-1zM2 22h1v1h-1zM18 22h1v1h-1zM0 23h5v1h-5zM16 23h5v1h-5z"/></svg>
<svg style="left:1203px;top:339px" width="9" height="13" viewBox="0 0 9 13"><path fill="#fff" d="M0 0h4v1h-4zM5 0h4v1h-4zM0 1h1v1h-1zM3 1h1v1h-1zM5 1h1v1h-1zM8 1h1v1h-1zM0 2h1v1h-1zM3 2h1v1h-1zM5 2h1v1h-1zM8 2h1v1h-1zM0 3h1v1h-1zM3 3h1v1h-1zM5 3h1v1h-1zM8 3h1v1h-1zM0 4h1v1h-1zM3 4h1v1h-1zM5 4h1v1h-1zM8 4h1v1h-1zM0 5h1v1h-1zM3 5h1v1h-1zM5 5h1v1h-1zM8 5h1v1h-1zM0 6h1v1h-1zM3 6h1v1h-1zM5 6h1v1h-1zM8 6h1v1h-1zM0 7h1v1h-1zM3 7h1v1h-1zM5 7h1v1h-1zM8 7h1v1h-1zM0 8h1v1h-1zM3 8h1v1h-1zM5 8h1v1h-1zM8 8h1v1h-1zM0 9h1v1h-1zM3 9h1v1h-1zM5 9h1v1h-1zM8 9h1v1h-1zM0 10h1v1h-1zM3 10h1v1h-1zM5 10h1v1h-1zM8 10h1v1h-1zM0 11h1v1h-1zM3 11h1v1h-1zM5 11h1v1h-1zM8 11h1v1h-1zM0 12h4v1h-4zM5 12h4v1h-4z"/><path fill="#000" d="M1 1h2v1h-2zM6 1h2v1h-2zM1 2h2v1h-2zM6 2h2v1h-2zM1 3h2v1h-2zM6 3h2v1h-2zM1 4h2v1h-2zM6 4h2v1h-2zM1 5h2v1h-2zM6 5h2v1h-2zM1 6h2v1h-2zM6 6h2v1h-2zM1 7h2v1h-2zM6 7h2v1h-2zM1 8h2v1h-2zM6 8h2v1h-2zM1 9h2v1h-2zM6 9h2v1h-2zM1 10h2v1h-2zM6 10h2v1h-2zM1 11h2v1h-2zM6 11h2v1h-2z"/></svg>
<svg style="left:1197px;top:369px" width="42" height="25" viewBox="0 0 42 25"><path fill="#fff" d="M20 6h2v1h-2zM19 7h2v1h-2zM18 8h2v1h-2zM17 9h2v1h-2zM16 10h2v1h-2zM16 11h1v1h-1zM22 16h1v1h-1zM1 17h9v1h-9zM13 17h10v1h-10zM22 19h1v1h-1zM1 20h9v1h-9zM13 20h10v1h-10zM22 22h1v1h-1zM1 23h6v1h-6zM16 23h7v1h-7zM8 24h9v1h-9z"/><path fill="#a0a0a0" d="M15 0h1v1h-1zM15 1h2v1h-2zM15 2h3v1h-3zM15 3h4v1h-4zM15 4h5v1h-5zM15 5h6v1h-6zM15 6h5v1h-5zM15 7h4v1h-4zM15 8h3v1h-3zM15 9h2v1h-2zM15 10h1v1h-1zM35 12h7v1h-7zM8 13h1v1h-1zM11 13h1v1h-1zM14 13h1v1h-1zM36 13h5v1h-5zM7 14h9v1h-9zM37 14h3v1h-3zM0 15h22v1h-22zM38 15h1v1h-1zM0 16h22v1h-22zM10 17h3v1h-3zM0 18h22v1h-22zM0 19h22v1h-22zM10 20h3v1h-3zM0 21h22v1h-22zM0 22h22v1h-22zM7 23h9v1h-9z"/></svg>
<svg style="left:1200px;top:413px" width="17" height="16" viewBox="0 0 17 16"><path fill="#fff" d="M7 0h6v1h-6zM6 1h2v1h-2zM12 1h3v1h-3zM2 2h5v1h-5zM9 2h3v1h-3zM14 2h2v1h-2zM2 3h1v1h-1zM6 3h3v1h-3zM11 3h3v1h-3zM15 3h1v1h-1zM0 4h4v1h-4zM6 4h1v1h-1zM8 4h2v1h-2zM11 4h3v1h-3zM15 4h2v1h-2zM0 5h1v1h-1zM2 5h2v1h-2zM6 5h1v1h-1zM8 5h3v1h-3zM12 5h2v1h-2zM16 5h1v1h-1zM0 6h1v1h-1zM6 6h3v1h-3zM11 6h1v1h-1zM14 6h3v1h-3zM0 7h1v1h-1zM5 7h3v1h-3zM9 7h1v1h-1zM11 7h2v1h-2zM14 7h1v1h-1zM16 7h1v1h-1zM0 8h5v1h-5zM6 8h1v1h-1zM9 8h1v1h-1zM11 8h3v1h-3zM15 8h2v1h-2zM4 9h2v1h-2zM10 9h2v1h-2zM13 9h3v1h-3zM4 10h2v1h-2zM10 10h2v1h-2zM3 11h2v1h-2zM6 11h1v1h-1zM9 11h1v1h-1zM11 11h2v1h-2zM1 12h3v1h-3zM5 12h1v1h-1zM7 12h2v1h-2zM10 12h1v1h-1zM12 12h2v1h-2zM1 13h1v1h-1zM5 13h5v1h-5zM13 13h1v1h-1zM1 14h1v1h-1zM4 14h2v1h-2zM9 14h2v1h-2zM13 14h1v1h-1zM1 15h4v1h-4zM10 15h4v1h-4z"/><path fill="#000" d="M8 1h4v1h-4zM7 2h2v1h-2zM12 2h2v1h-2zM3 3h3v1h-3zM9 3h2v1h-2zM14 3h1v1h-1zM4 4h2v1h-2zM10 4h1v1h-1zM14 4h1v1h-1zM1 5h1v1h-1zM4 5h2v1h-2zM11 5h1v1h-1zM14 5h2v1h-2zM1 6h5v1h-5zM9 6h2v1h-2zM12 6h2v1h-2zM1 7h4v1h-4zM8 7h1v1h-1zM10 7h1v1h-1zM13 7h1v1h-1zM15 7h1v1h-1zM5 8h1v1h-1zM7 8h2v1h-2zM10 8h1v1h-1zM14 8h1v1h-1zM6 9h4v1h-4zM6 10h4v1h-4zM5 11h1v1h-1zM7 11h2v1h-2zM10 11h1v1h-1zM4 12h1v1h-1zM6 12h1v1h-1zM9 12h1v1h-1zM11 12h1v1h-1zM2 13h3v1h-3zM10 13h3v1h-3zM2 14h2v1h-2zM11 14h2v1h-2z"/></svg>
<div style="left:9px;top:226px;width:650px;height:17px;background:#f0f0f0;border-bottom:1px solid #a0a0a0;border-top:1px solid #fff;border-left:1px solid #fff"></div>
<span style="left:15.3px;top:228px;transform:scaleX(0.860);color:#000;">Parameter</span>
<span style="left:315.3px;top:228px;transform:scaleX(0.913);color:#000;">Value</span>
<span style="left:565.3px;top:228px;transform:scaleX(0.900);color:#000;">Notes</span>
<i style="left:308px;top:226px;width:1px;height:17px;background:#a0a0a0"></i>
<i style="left:309px;top:226px;width:1px;height:16px;background:#ffffff"></i>
<i style="left:558px;top:226px;width:1px;height:17px;background:#a0a0a0"></i>
<i style="left:559px;top:226px;width:1px;height:16px;background:#ffffff"></i>
<i style="left:658px;top:226px;width:1px;height:17px;background:#a0a0a0"></i>
<div style="left:9px;top:243px;width:1156px;height:646px;background:#fff"></div>
<div style="left:308px;top:244px;width:1px;height:645px;background:repeating-linear-gradient(180deg,#e6e6e6 0 1px,transparent 1px 2px)"></div>
<div style="left:558px;top:244px;width:1px;height:645px;background:repeating-linear-gradient(180deg,#e6e6e6 0 1px,transparent 1px 2px)"></div>
<div style="left:658px;top:244px;width:1px;height:645px;background:repeating-linear-gradient(180deg,#e6e6e6 0 1px,transparent 1px 2px)"></div>
<div style="left:10px;top:243px;width:1155px;height:646px;overflow:hidden">
<div style="left:8px;top:14px;width:1px;height:648px;background:repeating-linear-gradient(180deg,#a0a0a0 0 1px,transparent 1px 2px)"></div>
<div style="left:12px;top:9px;width:8px;height:1px;background:repeating-linear-gradient(90deg,#a0a0a0 0 1px,transparent 1px 2px)"></div>
<svg style="left:3px;top:5px" width="9" height="9" viewBox="0 0 9 9"><path fill="#969696" d="M0 0h9v9h-9z"/><path fill="#fff" d="M1 1h7v7h-7z"/><path fill="#000" d="M2 4h5v1h-5z"/></svg>
<svg style="left:22px;top:2px" width="14" height="14" viewBox="0 0 14 14"><path fill="#5a5a5a" d="M2 0h1v1h-1zM5 0h1v1h-1zM11 0h1v1h-1zM2 1h1v1h-1zM5 1h1v1h-1zM11 1h1v1h-1zM0 2h2v1h-2zM3 2h2v1h-2zM10 2h2v1h-2zM13 2h1v1h-1zM2 3h1v1h-1zM5 3h1v1h-1zM11 3h1v1h-1zM11 4h1v1h-1zM8 5h1v1h-1zM12 5h2v1h-2zM11 6h1v1h-1zM12 7h1v1h-1zM4 8h1v1h-1zM12 8h2v1h-2zM5 9h1v1h-1zM2 10h1v1h-1zM5 10h1v1h-1zM0 11h2v1h-2zM3 11h2v1h-2zM6 11h2v1h-2zM10 11h2v1h-2zM13 11h1v1h-1zM2 12h1v1h-1zM5 12h1v1h-1zM8 12h1v1h-1zM11 12h1v1h-1zM2 13h1v1h-1zM5 13h1v1h-1zM8 13h1v1h-1zM11 13h1v1h-1z"/><path fill="#0808a0" d="M8 0h1v1h-1zM8 1h2v1h-2zM8 2h2v1h-2zM8 3h2v1h-2zM8 4h2v1h-2z"/><path fill="#3a80c8" d="M6 1h2v1h-2zM6 2h2v1h-2zM6 3h2v1h-2zM6 4h2v1h-2z"/><path fill="#000" d="M2 2h1v1h-1zM5 2h1v1h-1zM12 2h1v1h-1zM5 4h1v1h-1zM4 5h2v1h-2zM11 5h1v1h-1zM5 6h1v1h-1zM5 7h1v1h-1zM5 8h1v1h-1zM11 9h1v1h-1zM10 10h1v1h-1zM2 11h1v1h-1zM5 11h1v1h-1zM8 11h2v1h-2zM12 11h1v1h-1z"/><path fill="#840808" d="M1 4h2v1h-2zM0 5h1v1h-1zM3 5h1v1h-1zM0 8h1v1h-1zM3 8h1v1h-1zM1 9h2v1h-2z"/><path fill="#c01c1c" d="M1 5h2v1h-2zM0 6h1v1h-1zM3 6h2v1h-2zM0 7h1v1h-1zM3 7h2v1h-2zM1 8h2v1h-2z"/><path fill="#dc2a2a" d="M1 6h2v1h-2zM1 7h2v1h-2z"/><path fill="#088808" d="M8 6h2v1h-2zM6 7h1v1h-1zM9 7h3v1h-3zM6 8h1v1h-1zM9 8h2v1h-2zM6 9h5v1h-5zM7 10h1v1h-1z"/><path fill="#2ccc2c" d="M7 7h2v1h-2zM7 8h2v1h-2z"/><path fill="#044804" d="M11 8h1v1h-1zM8 10h2v1h-2z"/></svg>
<span style="left:42.8px;top:2px;transform:scaleX(0.933);">CONFIGURATION GENERAL INFORMATION:</span>
<div style="left:26px;top:17px;width:1px;height:82px;background:repeating-linear-gradient(180deg,#a0a0a0 0 1px,transparent 1px 2px)"></div>
<div style="left:28px;top:27px;width:8px;height:1px;background:repeating-linear-gradient(90deg,#a0a0a0 0 1px,transparent 1px 2px)"></div>
<svg style="left:39px;top:19px" width="16" height="16" viewBox="0 0 16 16"><path fill="#fff" d="M1 1h11v1h-11zM1 2h11v1h-11zM13 2h1v1h-1zM1 3h12v1h-12zM1 4h13v1h-13zM1 5h13v1h-13zM1 6h13v1h-13zM1 7h13v1h-13zM1 8h13v1h-13zM1 9h13v1h-13zM1 10h13v1h-13zM1 11h13v1h-13zM1 12h13v1h-13zM3 13h5v1h-5zM12 13h2v1h-2zM13 14h1v1h-1z"/><path fill="#808080" d="M0 0h13v1h-13zM0 1h1v1h-1zM12 1h2v1h-2zM0 2h1v1h-1zM12 2h1v1h-1zM14 2h1v1h-1zM0 3h1v1h-1zM0 4h1v1h-1zM0 5h1v1h-1zM0 6h1v1h-1zM0 7h1v1h-1zM0 8h1v1h-1zM0 9h1v1h-1zM0 10h1v1h-1zM0 11h1v1h-1zM0 12h1v1h-1z"/><path fill="#000" d="M13 3h3v1h-3zM15 4h1v1h-1zM15 5h1v1h-1zM15 6h1v1h-1zM15 7h1v1h-1zM15 8h1v1h-1zM15 9h1v1h-1zM15 10h1v1h-1zM15 11h1v1h-1zM15 12h1v1h-1zM0 13h3v1h-3zM8 13h4v1h-4zM15 13h1v1h-1zM3 14h5v1h-5zM12 14h1v1h-1zM15 14h1v1h-1zM13 15h3v1h-3z"/><path fill="#dcdcdc" d="M14 4h1v1h-1zM14 5h1v1h-1zM14 6h1v1h-1zM14 7h1v1h-1zM14 8h1v1h-1zM14 9h1v1h-1zM14 10h1v1h-1zM14 11h1v1h-1zM14 12h1v1h-1zM14 13h1v1h-1zM14 14h1v1h-1z"/></svg>
<span class="bn" style="left:40.8px;top:21.4px">011</span><span class="bn" style="left:40.8px;top:26.4px">110</span>
<span style="left:61.2px;top:20px;letter-spacing:-0.04px;">Device type</span>
<span style="left:306.9px;top:20px;letter-spacing:0.05px;">Fixed device and/or controller</span>
<div style="left:28px;top:45px;width:8px;height:1px;background:repeating-linear-gradient(90deg,#a0a0a0 0 1px,transparent 1px 2px)"></div>
<svg style="left:39px;top:37px" width="16" height="16" viewBox="0 0 16 16"><path fill="#fff" d="M1 1h11v1h-11zM1 2h11v1h-11zM13 2h1v1h-1zM1 3h12v1h-12zM1 4h13v1h-13zM1 5h13v1h-13zM1 6h13v1h-13zM1 7h13v1h-13zM1 8h13v1h-13zM1 9h13v1h-13zM1 10h13v1h-13zM1 11h13v1h-13zM1 12h13v1h-13zM3 13h5v1h-5zM12 13h2v1h-2zM13 14h1v1h-1z"/><path fill="#808080" d="M0 0h13v1h-13zM0 1h1v1h-1zM12 1h2v1h-2zM0 2h1v1h-1zM12 2h1v1h-1zM14 2h1v1h-1zM0 3h1v1h-1zM0 4h1v1h-1zM0 5h1v1h-1zM0 6h1v1h-1zM0 7h1v1h-1zM0 8h1v1h-1zM0 9h1v1h-1zM0 10h1v1h-1zM0 11h1v1h-1zM0 12h1v1h-1z"/><path fill="#000" d="M13 3h3v1h-3zM15 4h1v1h-1zM15 5h1v1h-1zM15 6h1v1h-1zM15 7h1v1h-1zM15 8h1v1h-1zM15 9h1v1h-1zM15 10h1v1h-1zM15 11h1v1h-1zM15 12h1v1h-1zM0 13h3v1h-3zM8 13h4v1h-4zM15 13h1v1h-1zM3 14h5v1h-5zM12 14h1v1h-1zM15 14h1v1h-1zM13 15h3v1h-3z"/><path fill="#dcdcdc" d="M14 4h1v1h-1zM14 5h1v1h-1zM14 6h1v1h-1zM14 7h1v1h-1zM14 8h1v1h-1zM14 9h1v1h-1zM14 10h1v1h-1zM14 11h1v1h-1zM14 12h1v1h-1zM14 13h1v1h-1zM14 14h1v1h-1z"/></svg>
<span class="bn" style="left:40.8px;top:39.4px">011</span><span class="bn" style="left:40.8px;top:44.4px">110</span>
<span style="left:61.2px;top:38px;letter-spacing:-0.06px;">Device interface</span>
<span style="left:306.9px;top:38px;letter-spacing:-0.14px;">SATA (SATA Rev 2.6)</span>
<div style="left:28px;top:63px;width:8px;height:1px;background:repeating-linear-gradient(90deg,#a0a0a0 0 1px,transparent 1px 2px)"></div>
<svg style="left:39px;top:55px" width="16" height="16" viewBox="0 0 16 16"><path fill="#fff" d="M1 1h11v1h-11zM1 2h11v1h-11zM13 2h1v1h-1zM1 3h12v1h-12zM1 4h13v1h-13zM1 5h13v1h-13zM1 6h13v1h-13zM1 7h13v1h-13zM1 8h13v1h-13zM1 9h13v1h-13zM1 10h13v1h-13zM1 11h13v1h-13zM1 12h13v1h-13zM3 13h5v1h-5zM12 13h2v1h-2zM13 14h1v1h-1z"/><path fill="#808080" d="M0 0h13v1h-13zM0 1h1v1h-1zM12 1h2v1h-2zM0 2h1v1h-1zM12 2h1v1h-1zM14 2h1v1h-1zM0 3h1v1h-1zM0 4h1v1h-1zM0 5h1v1h-1zM0 6h1v1h-1zM0 7h1v1h-1zM0 8h1v1h-1zM0 9h1v1h-1zM0 10h1v1h-1zM0 11h1v1h-1zM0 12h1v1h-1z"/><path fill="#000" d="M13 3h3v1h-3zM15 4h1v1h-1zM15 5h1v1h-1zM15 6h1v1h-1zM15 7h1v1h-1zM15 8h1v1h-1zM15 9h1v1h-1zM15 10h1v1h-1zM15 11h1v1h-1zM15 12h1v1h-1zM0 13h3v1h-3zM8 13h4v1h-4zM15 13h1v1h-1zM3 14h5v1h-5zM12 14h1v1h-1zM15 14h1v1h-1zM13 15h3v1h-3z"/><path fill="#dcdcdc" d="M14 4h1v1h-1zM14 5h1v1h-1zM14 6h1v1h-1zM14 7h1v1h-1zM14 8h1v1h-1zM14 9h1v1h-1zM14 10h1v1h-1zM14 11h1v1h-1zM14 12h1v1h-1zM14 13h1v1h-1zM14 14h1v1h-1z"/></svg>
<span class="bn" style="left:40.8px;top:57.4px">011</span><span class="bn" style="left:40.8px;top:62.4px">110</span>
<span style="left:61.2px;top:56px;letter-spacing:-0.11px;">SATA Gen1 Signaling Speed (1.5Gb/s)</span>
<span style="left:306.9px;top:56px;transform:scaleX(0.907);">[YES]</span>
<div style="left:28px;top:81px;width:8px;height:1px;background:repeating-linear-gradient(90deg,#a0a0a0 0 1px,transparent 1px 2px)"></div>
<svg style="left:39px;top:73px" width="16" height="16" viewBox="0 0 16 16"><path fill="#fff" d="M1 1h11v1h-11zM1 2h11v1h-11zM13 2h1v1h-1zM1 3h12v1h-12zM1 4h13v1h-13zM1 5h13v1h-13zM1 6h13v1h-13zM1 7h13v1h-13zM1 8h13v1h-13zM1 9h13v1h-13zM1 10h13v1h-13zM1 11h13v1h-13zM1 12h13v1h-13zM3 13h5v1h-5zM12 13h2v1h-2zM13 14h1v1h-1z"/><path fill="#808080" d="M0 0h13v1h-13zM0 1h1v1h-1zM12 1h2v1h-2zM0 2h1v1h-1zM12 2h1v1h-1zM14 2h1v1h-1zM0 3h1v1h-1zM0 4h1v1h-1zM0 5h1v1h-1zM0 6h1v1h-1zM0 7h1v1h-1zM0 8h1v1h-1zM0 9h1v1h-1zM0 10h1v1h-1zM0 11h1v1h-1zM0 12h1v1h-1z"/><path fill="#000" d="M13 3h3v1h-3zM15 4h1v1h-1zM15 5h1v1h-1zM15 6h1v1h-1zM15 7h1v1h-1zM15 8h1v1h-1zM15 9h1v1h-1zM15 10h1v1h-1zM15 11h1v1h-1zM15 12h1v1h-1zM0 13h3v1h-3zM8 13h4v1h-4zM15 13h1v1h-1zM3 14h5v1h-5zM12 14h1v1h-1zM15 14h1v1h-1zM13 15h3v1h-3z"/><path fill="#dcdcdc" d="M14 4h1v1h-1zM14 5h1v1h-1zM14 6h1v1h-1zM14 7h1v1h-1zM14 8h1v1h-1zM14 9h1v1h-1zM14 10h1v1h-1zM14 11h1v1h-1zM14 12h1v1h-1zM14 13h1v1h-1zM14 14h1v1h-1z"/></svg>
<span class="bn" style="left:40.8px;top:75.4px">011</span><span class="bn" style="left:40.8px;top:80.4px">110</span>
<span style="left:61.2px;top:74px;letter-spacing:-0.11px;">SATA Gen2 Signaling Speed (3.0Gb/s)</span>
<span style="left:306.9px;top:74px;transform:scaleX(0.907);">[YES]</span>
<div style="left:28px;top:99px;width:8px;height:1px;background:repeating-linear-gradient(90deg,#a0a0a0 0 1px,transparent 1px 2px)"></div>
<svg style="left:39px;top:91px" width="16" height="16" viewBox="0 0 16 16"><path fill="#fff" d="M1 1h11v1h-11zM1 2h11v1h-11zM13 2h1v1h-1zM1 3h12v1h-12zM1 4h13v1h-13zM1 5h13v1h-13zM1 6h13v1h-13zM1 7h13v1h-13zM1 8h13v1h-13zM1 9h13v1h-13zM1 10h13v1h-13zM1 11h13v1h-13zM1 12h13v1h-13zM3 13h5v1h-5zM12 13h2v1h-2zM13 14h1v1h-1z"/><path fill="#808080" d="M0 0h13v1h-13zM0 1h1v1h-1zM12 1h2v1h-2zM0 2h1v1h-1zM12 2h1v1h-1zM14 2h1v1h-1zM0 3h1v1h-1zM0 4h1v1h-1zM0 5h1v1h-1zM0 6h1v1h-1zM0 7h1v1h-1zM0 8h1v1h-1zM0 9h1v1h-1zM0 10h1v1h-1zM0 11h1v1h-1zM0 12h1v1h-1z"/><path fill="#000" d="M13 3h3v1h-3zM15 4h1v1h-1zM15 5h1v1h-1zM15 6h1v1h-1zM15 7h1v1h-1zM15 8h1v1h-1zM15 9h1v1h-1zM15 10h1v1h-1zM15 11h1v1h-1zM15 12h1v1h-1zM0 13h3v1h-3zM8 13h4v1h-4zM15 13h1v1h-1zM3 14h5v1h-5zM12 14h1v1h-1zM15 14h1v1h-1zM13 15h3v1h-3z"/><path fill="#dcdcdc" d="M14 4h1v1h-1zM14 5h1v1h-1zM14 6h1v1h-1zM14 7h1v1h-1zM14 8h1v1h-1zM14 9h1v1h-1zM14 10h1v1h-1zM14 11h1v1h-1zM14 12h1v1h-1zM14 13h1v1h-1zM14 14h1v1h-1z"/></svg>
<span class="bn" style="left:40.8px;top:93.4px">011</span><span class="bn" style="left:40.8px;top:98.4px">110</span>
<span style="left:61.2px;top:92px;letter-spacing:-0.19px;">Rotation Rate</span>
<span style="left:306.9px;top:92px;letter-spacing:0.37px;">5 400</span>
<div style="left:12px;top:117px;width:8px;height:1px;background:repeating-linear-gradient(90deg,#a0a0a0 0 1px,transparent 1px 2px)"></div>
<svg style="left:3px;top:113px" width="9" height="9" viewBox="0 0 9 9"><path fill="#969696" d="M0 0h9v9h-9z"/><path fill="#fff" d="M1 1h7v7h-7z"/><path fill="#000" d="M2 4h5v1h-5z"/></svg>
<svg style="left:22px;top:110px" width="14" height="14" viewBox="0 0 14 14"><path fill="#5a5a5a" d="M2 0h1v1h-1zM5 0h1v1h-1zM11 0h1v1h-1zM2 1h1v1h-1zM5 1h1v1h-1zM11 1h1v1h-1zM0 2h2v1h-2zM3 2h2v1h-2zM10 2h2v1h-2zM13 2h1v1h-1zM2 3h1v1h-1zM5 3h1v1h-1zM11 3h1v1h-1zM11 4h1v1h-1zM8 5h1v1h-1zM12 5h2v1h-2zM11 6h1v1h-1zM12 7h1v1h-1zM4 8h1v1h-1zM12 8h2v1h-2zM5 9h1v1h-1zM2 10h1v1h-1zM5 10h1v1h-1zM0 11h2v1h-2zM3 11h2v1h-2zM6 11h2v1h-2zM10 11h2v1h-2zM13 11h1v1h-1zM2 12h1v1h-1zM5 12h1v1h-1zM8 12h1v1h-1zM11 12h1v1h-1zM2 13h1v1h-1zM5 13h1v1h-1zM8 13h1v1h-1zM11 13h1v1h-1z"/><path fill="#0808a0" d="M8 0h1v1h-1zM8 1h2v1h-2zM8 2h2v1h-2zM8 3h2v1h-2zM8 4h2v1h-2z"/><path fill="#3a80c8" d="M6 1h2v1h-2zM6 2h2v1h-2zM6 3h2v1h-2zM6 4h2v1h-2z"/><path fill="#000" d="M2 2h1v1h-1zM5 2h1v1h-1zM12 2h1v1h-1zM5 4h1v1h-1zM4 5h2v1h-2zM11 5h1v1h-1zM5 6h1v1h-1zM5 7h1v1h-1zM5 8h1v1h-1zM11 9h1v1h-1zM10 10h1v1h-1zM2 11h1v1h-1zM5 11h1v1h-1zM8 11h2v1h-2zM12 11h1v1h-1z"/><path fill="#840808" d="M1 4h2v1h-2zM0 5h1v1h-1zM3 5h1v1h-1zM0 8h1v1h-1zM3 8h1v1h-1zM1 9h2v1h-2z"/><path fill="#c01c1c" d="M1 5h2v1h-2zM0 6h1v1h-1zM3 6h2v1h-2zM0 7h1v1h-1zM3 7h2v1h-2zM1 8h2v1h-2z"/><path fill="#dc2a2a" d="M1 6h2v1h-2zM1 7h2v1h-2z"/><path fill="#088808" d="M8 6h2v1h-2zM6 7h1v1h-1zM9 7h3v1h-3zM6 8h1v1h-1zM9 8h2v1h-2zM6 9h5v1h-5zM7 10h1v1h-1z"/><path fill="#2ccc2c" d="M7 7h2v1h-2zM7 8h2v1h-2z"/><path fill="#044804" d="M11 8h1v1h-1zM8 10h2v1h-2z"/></svg>
<span style="left:42.8px;top:110px;letter-spacing:0.11px;">Main data</span>
<div style="left:26px;top:125px;width:1px;height:64px;background:repeating-linear-gradient(180deg,#a0a0a0 0 1px,transparent 1px 2px)"></div>
<div style="left:28px;top:135px;width:8px;height:1px;background:repeating-linear-gradient(90deg,#a0a0a0 0 1px,transparent 1px 2px)"></div>
<svg style="left:39px;top:127px" width="16" height="16" viewBox="0 0 16 16"><path fill="#fff" d="M1 1h11v1h-11zM1 2h11v1h-11zM13 2h1v1h-1zM1 3h12v1h-12zM1 4h13v1h-13zM1 5h13v1h-13zM1 6h13v1h-13zM1 7h13v1h-13zM1 8h13v1h-13zM1 9h13v1h-13zM1 10h13v1h-13zM1 11h13v1h-13zM1 12h13v1h-13zM3 13h5v1h-5zM12 13h2v1h-2zM13 14h1v1h-1z"/><path fill="#808080" d="M0 0h13v1h-13zM0 1h1v1h-1zM12 1h2v1h-2zM0 2h1v1h-1zM12 2h1v1h-1zM14 2h1v1h-1zM0 3h1v1h-1zM0 4h1v1h-1zM0 5h1v1h-1zM0 6h1v1h-1zM0 7h1v1h-1zM0 8h1v1h-1zM0 9h1v1h-1zM0 10h1v1h-1zM0 11h1v1h-1zM0 12h1v1h-1z"/><path fill="#000" d="M13 3h3v1h-3zM15 4h1v1h-1zM15 5h1v1h-1zM15 6h1v1h-1zM15 7h1v1h-1zM15 8h1v1h-1zM15 9h1v1h-1zM15 10h1v1h-1zM15 11h1v1h-1zM15 12h1v1h-1zM0 13h3v1h-3zM8 13h4v1h-4zM15 13h1v1h-1zM3 14h5v1h-5zM12 14h1v1h-1zM15 14h1v1h-1zM13 15h3v1h-3z"/><path fill="#dcdcdc" d="M14 4h1v1h-1zM14 5h1v1h-1zM14 6h1v1h-1zM14 7h1v1h-1zM14 8h1v1h-1zM14 9h1v1h-1zM14 10h1v1h-1zM14 11h1v1h-1zM14 12h1v1h-1zM14 13h1v1h-1zM14 14h1v1h-1z"/></svg>
<span class="ab" style="left:41px;top:128px">ab</span>
<span style="left:61.2px;top:128px;letter-spacing:0.33px;">Model</span>
<span style="left:306.9px;top:128px;letter-spacing:0.14px;">ST1000LM024 HN-M101MBB</span>
<div style="left:28px;top:153px;width:8px;height:1px;background:repeating-linear-gradient(90deg,#a0a0a0 0 1px,transparent 1px 2px)"></div>
<svg style="left:39px;top:145px" width="16" height="16" viewBox="0 0 16 16"><path fill="#fff" d="M1 1h11v1h-11zM1 2h11v1h-11zM13 2h1v1h-1zM1 3h12v1h-12zM1 4h13v1h-13zM1 5h13v1h-13zM1 6h13v1h-13zM1 7h13v1h-13zM1 8h13v1h-13zM1 9h13v1h-13zM1 10h13v1h-13zM1 11h13v1h-13zM1 12h13v1h-13zM3 13h5v1h-5zM12 13h2v1h-2zM13 14h1v1h-1z"/><path fill="#808080" d="M0 0h13v1h-13zM0 1h1v1h-1zM12 1h2v1h-2zM0 2h1v1h-1zM12 2h1v1h-1zM14 2h1v1h-1zM0 3h1v1h-1zM0 4h1v1h-1zM0 5h1v1h-1zM0 6h1v1h-1zM0 7h1v1h-1zM0 8h1v1h-1zM0 9h1v1h-1zM0 10h1v1h-1zM0 11h1v1h-1zM0 12h1v1h-1z"/><path fill="#000" d="M13 3h3v1h-3zM15 4h1v1h-1zM15 5h1v1h-1zM15 6h1v1h-1zM15 7h1v1h-1zM15 8h1v1h-1zM15 9h1v1h-1zM15 10h1v1h-1zM15 11h1v1h-1zM15 12h1v1h-1zM0 13h3v1h-3zM8 13h4v1h-4zM15 13h1v1h-1zM3 14h5v1h-5zM12 14h1v1h-1zM15 14h1v1h-1zM13 15h3v1h-3z"/><path fill="#dcdcdc" d="M14 4h1v1h-1zM14 5h1v1h-1zM14 6h1v1h-1zM14 7h1v1h-1zM14 8h1v1h-1zM14 9h1v1h-1zM14 10h1v1h-1zM14 11h1v1h-1zM14 12h1v1h-1zM14 13h1v1h-1zM14 14h1v1h-1z"/></svg>
<span class="ab" style="left:41px;top:146px">ab</span>
<span style="left:61.2px;top:146px;letter-spacing:-0.03px;">Serial number</span>
<span style="left:306.9px;top:146px;letter-spacing:-0.28px;">S35TJACG903291</span>
<div style="left:28px;top:171px;width:8px;height:1px;background:repeating-linear-gradient(90deg,#a0a0a0 0 1px,transparent 1px 2px)"></div>
<svg style="left:39px;top:163px" width="16" height="16" viewBox="0 0 16 16"><path fill="#fff" d="M1 1h11v1h-11zM1 2h11v1h-11zM13 2h1v1h-1zM1 3h12v1h-12zM1 4h13v1h-13zM1 5h13v1h-13zM1 6h13v1h-13zM1 7h13v1h-13zM1 8h13v1h-13zM1 9h13v1h-13zM1 10h13v1h-13zM1 11h13v1h-13zM1 12h13v1h-13zM3 13h5v1h-5zM12 13h2v1h-2zM13 14h1v1h-1z"/><path fill="#808080" d="M0 0h13v1h-13zM0 1h1v1h-1zM12 1h2v1h-2zM0 2h1v1h-1zM12 2h1v1h-1zM14 2h1v1h-1zM0 3h1v1h-1zM0 4h1v1h-1zM0 5h1v1h-1zM0 6h1v1h-1zM0 7h1v1h-1zM0 8h1v1h-1zM0 9h1v1h-1zM0 10h1v1h-1zM0 11h1v1h-1zM0 12h1v1h-1z"/><path fill="#000" d="M13 3h3v1h-3zM15 4h1v1h-1zM15 5h1v1h-1zM15 6h1v1h-1zM15 7h1v1h-1zM15 8h1v1h-1zM15 9h1v1h-1zM15 10h1v1h-1zM15 11h1v1h-1zM15 12h1v1h-1zM0 13h3v1h-3zM8 13h4v1h-4zM15 13h1v1h-1zM3 14h5v1h-5zM12 14h1v1h-1zM15 14h1v1h-1zM13 15h3v1h-3z"/><path fill="#dcdcdc" d="M14 4h1v1h-1zM14 5h1v1h-1zM14 6h1v1h-1zM14 7h1v1h-1zM14 8h1v1h-1zM14 9h1v1h-1zM14 10h1v1h-1zM14 11h1v1h-1zM14 12h1v1h-1zM14 13h1v1h-1zM14 14h1v1h-1z"/></svg>
<span class="ab" style="left:41px;top:164px">ab</span>
<span style="left:61.2px;top:164px;letter-spacing:-0.12px;">Firmware</span>
<span style="left:306.9px;top:164px;letter-spacing:0.14px;">2BA30003</span>
<div style="left:28px;top:189px;width:8px;height:1px;background:repeating-linear-gradient(90deg,#a0a0a0 0 1px,transparent 1px 2px)"></div>
<svg style="left:39px;top:181px" width="16" height="16" viewBox="0 0 16 16"><path fill="#fff" d="M1 1h11v1h-11zM1 2h11v1h-11zM13 2h1v1h-1zM1 3h12v1h-12zM1 4h13v1h-13zM1 5h13v1h-13zM1 6h13v1h-13zM1 7h13v1h-13zM1 8h13v1h-13zM1 9h13v1h-13zM1 10h13v1h-13zM1 11h13v1h-13zM1 12h13v1h-13zM3 13h5v1h-5zM12 13h2v1h-2zM13 14h1v1h-1z"/><path fill="#808080" d="M0 0h13v1h-13zM0 1h1v1h-1zM12 1h2v1h-2zM0 2h1v1h-1zM12 2h1v1h-1zM14 2h1v1h-1zM0 3h1v1h-1zM0 4h1v1h-1zM0 5h1v1h-1zM0 6h1v1h-1zM0 7h1v1h-1zM0 8h1v1h-1zM0 9h1v1h-1zM0 10h1v1h-1zM0 11h1v1h-1zM0 12h1v1h-1z"/><path fill="#000" d="M13 3h3v1h-3zM15 4h1v1h-1zM15 5h1v1h-1zM15 6h1v1h-1zM15 7h1v1h-1zM15 8h1v1h-1zM15 9h1v1h-1zM15 10h1v1h-1zM15 11h1v1h-1zM15 12h1v1h-1zM0 13h3v1h-3zM8 13h4v1h-4zM15 13h1v1h-1zM3 14h5v1h-5zM12 14h1v1h-1zM15 14h1v1h-1zM13 15h3v1h-3z"/><path fill="#dcdcdc" d="M14 4h1v1h-1zM14 5h1v1h-1zM14 6h1v1h-1zM14 7h1v1h-1zM14 8h1v1h-1zM14 9h1v1h-1zM14 10h1v1h-1zM14 11h1v1h-1zM14 12h1v1h-1zM14 13h1v1h-1zM14 14h1v1h-1z"/></svg>
<span class="ab" style="left:41px;top:182px">ab</span>
<span style="left:61.2px;top:182px;transform:scaleX(0.980);">WWN</span>
<span style="left:306.9px;top:182px;letter-spacing:0.17px;">50004CF210A7D394</span>
<div style="left:12px;top:207px;width:8px;height:1px;background:repeating-linear-gradient(90deg,#a0a0a0 0 1px,transparent 1px 2px)"></div>
<svg style="left:3px;top:203px" width="9" height="9" viewBox="0 0 9 9"><path fill="#969696" d="M0 0h9v9h-9z"/><path fill="#fff" d="M1 1h7v7h-7z"/><path fill="#000" d="M2 4h5v1h-5z"/></svg>
<svg style="left:22px;top:200px" width="14" height="14" viewBox="0 0 14 14"><path fill="#5a5a5a" d="M2 0h1v1h-1zM5 0h1v1h-1zM11 0h1v1h-1zM2 1h1v1h-1zM5 1h1v1h-1zM11 1h1v1h-1zM0 2h2v1h-2zM3 2h2v1h-2zM10 2h2v1h-2zM13 2h1v1h-1zM2 3h1v1h-1zM5 3h1v1h-1zM11 3h1v1h-1zM11 4h1v1h-1zM8 5h1v1h-1zM12 5h2v1h-2zM11 6h1v1h-1zM12 7h1v1h-1zM4 8h1v1h-1zM12 8h2v1h-2zM5 9h1v1h-1zM2 10h1v1h-1zM5 10h1v1h-1zM0 11h2v1h-2zM3 11h2v1h-2zM6 11h2v1h-2zM10 11h2v1h-2zM13 11h1v1h-1zM2 12h1v1h-1zM5 12h1v1h-1zM8 12h1v1h-1zM11 12h1v1h-1zM2 13h1v1h-1zM5 13h1v1h-1zM8 13h1v1h-1zM11 13h1v1h-1z"/><path fill="#0808a0" d="M8 0h1v1h-1zM8 1h2v1h-2zM8 2h2v1h-2zM8 3h2v1h-2zM8 4h2v1h-2z"/><path fill="#3a80c8" d="M6 1h2v1h-2zM6 2h2v1h-2zM6 3h2v1h-2zM6 4h2v1h-2z"/><path fill="#000" d="M2 2h1v1h-1zM5 2h1v1h-1zM12 2h1v1h-1zM5 4h1v1h-1zM4 5h2v1h-2zM11 5h1v1h-1zM5 6h1v1h-1zM5 7h1v1h-1zM5 8h1v1h-1zM11 9h1v1h-1zM10 10h1v1h-1zM2 11h1v1h-1zM5 11h1v1h-1zM8 11h2v1h-2zM12 11h1v1h-1z"/><path fill="#840808" d="M1 4h2v1h-2zM0 5h1v1h-1zM3 5h1v1h-1zM0 8h1v1h-1zM3 8h1v1h-1zM1 9h2v1h-2z"/><path fill="#c01c1c" d="M1 5h2v1h-2zM0 6h1v1h-1zM3 6h2v1h-2zM0 7h1v1h-1zM3 7h2v1h-2zM1 8h2v1h-2z"/><path fill="#dc2a2a" d="M1 6h2v1h-2zM1 7h2v1h-2z"/><path fill="#088808" d="M8 6h2v1h-2zM6 7h1v1h-1zM9 7h3v1h-3zM6 8h1v1h-1zM9 8h2v1h-2zM6 9h5v1h-5zM7 10h1v1h-1z"/><path fill="#2ccc2c" d="M7 7h2v1h-2zM7 8h2v1h-2z"/><path fill="#044804" d="M11 8h1v1h-1zM8 10h2v1h-2z"/></svg>
<span style="left:42.8px;top:200px;letter-spacing:-0.12px;">Current Logical Parameters</span>
<div style="left:26px;top:215px;width:1px;height:100px;background:repeating-linear-gradient(180deg,#a0a0a0 0 1px,transparent 1px 2px)"></div>
<div style="left:28px;top:225px;width:8px;height:1px;background:repeating-linear-gradient(90deg,#a0a0a0 0 1px,transparent 1px 2px)"></div>
<svg style="left:39px;top:217px" width="16" height="16" viewBox="0 0 16 16"><path fill="#fff" d="M1 1h11v1h-11zM1 2h11v1h-11zM13 2h1v1h-1zM1 3h12v1h-12zM1 4h13v1h-13zM1 5h13v1h-13zM1 6h13v1h-13zM1 7h13v1h-13zM1 8h13v1h-13zM1 9h13v1h-13zM1 10h13v1h-13zM1 11h13v1h-13zM1 12h13v1h-13zM3 13h5v1h-5zM12 13h2v1h-2zM13 14h1v1h-1z"/><path fill="#808080" d="M0 0h13v1h-13zM0 1h1v1h-1zM12 1h2v1h-2zM0 2h1v1h-1zM12 2h1v1h-1zM14 2h1v1h-1zM0 3h1v1h-1zM0 4h1v1h-1zM0 5h1v1h-1zM0 6h1v1h-1zM0 7h1v1h-1zM0 8h1v1h-1zM0 9h1v1h-1zM0 10h1v1h-1zM0 11h1v1h-1zM0 12h1v1h-1z"/><path fill="#000" d="M13 3h3v1h-3zM15 4h1v1h-1zM15 5h1v1h-1zM15 6h1v1h-1zM15 7h1v1h-1zM15 8h1v1h-1zM15 9h1v1h-1zM15 10h1v1h-1zM15 11h1v1h-1zM15 12h1v1h-1zM0 13h3v1h-3zM8 13h4v1h-4zM15 13h1v1h-1zM3 14h5v1h-5zM12 14h1v1h-1zM15 14h1v1h-1zM13 15h3v1h-3z"/><path fill="#dcdcdc" d="M14 4h1v1h-1zM14 5h1v1h-1zM14 6h1v1h-1zM14 7h1v1h-1zM14 8h1v1h-1zM14 9h1v1h-1zM14 10h1v1h-1zM14 11h1v1h-1zM14 12h1v1h-1zM14 13h1v1h-1zM14 14h1v1h-1z"/></svg>
<span class="bn" style="left:40.8px;top:219.4px">011</span><span class="bn" style="left:40.8px;top:224.4px">110</span>
<span style="left:61.2px;top:218px;letter-spacing:-0.10px;">Cylinders</span>
<span style="left:306.9px;top:218px;letter-spacing:0.18px;">16 383</span>
<span style="left:557.1px;top:218px;letter-spacing:0.22px;">16 383</span>
<div style="left:28px;top:243px;width:8px;height:1px;background:repeating-linear-gradient(90deg,#a0a0a0 0 1px,transparent 1px 2px)"></div>
<svg style="left:39px;top:235px" width="16" height="16" viewBox="0 0 16 16"><path fill="#fff" d="M1 1h11v1h-11zM1 2h11v1h-11zM13 2h1v1h-1zM1 3h12v1h-12zM1 4h13v1h-13zM1 5h13v1h-13zM1 6h13v1h-13zM1 7h13v1h-13zM1 8h13v1h-13zM1 9h13v1h-13zM1 10h13v1h-13zM1 11h13v1h-13zM1 12h13v1h-13zM3 13h5v1h-5zM12 13h2v1h-2zM13 14h1v1h-1z"/><path fill="#808080" d="M0 0h13v1h-13zM0 1h1v1h-1zM12 1h2v1h-2zM0 2h1v1h-1zM12 2h1v1h-1zM14 2h1v1h-1zM0 3h1v1h-1zM0 4h1v1h-1zM0 5h1v1h-1zM0 6h1v1h-1zM0 7h1v1h-1zM0 8h1v1h-1zM0 9h1v1h-1zM0 10h1v1h-1zM0 11h1v1h-1zM0 12h1v1h-1z"/><path fill="#000" d="M13 3h3v1h-3zM15 4h1v1h-1zM15 5h1v1h-1zM15 6h1v1h-1zM15 7h1v1h-1zM15 8h1v1h-1zM15 9h1v1h-1zM15 10h1v1h-1zM15 11h1v1h-1zM15 12h1v1h-1zM0 13h3v1h-3zM8 13h4v1h-4zM15 13h1v1h-1zM3 14h5v1h-5zM12 14h1v1h-1zM15 14h1v1h-1zM13 15h3v1h-3z"/><path fill="#dcdcdc" d="M14 4h1v1h-1zM14 5h1v1h-1zM14 6h1v1h-1zM14 7h1v1h-1zM14 8h1v1h-1zM14 9h1v1h-1zM14 10h1v1h-1zM14 11h1v1h-1zM14 12h1v1h-1zM14 13h1v1h-1zM14 14h1v1h-1z"/></svg>
<span class="bn" style="left:40.8px;top:237.4px">011</span><span class="bn" style="left:40.8px;top:242.4px">110</span>
<span style="left:61.2px;top:236px;transform:scaleX(0.957);">Heads</span>
<span style="left:306.9px;top:236px;letter-spacing:0.30px;">16</span>
<span style="left:557.1px;top:236px;letter-spacing:0.30px;">16</span>
<div style="left:28px;top:261px;width:8px;height:1px;background:repeating-linear-gradient(90deg,#a0a0a0 0 1px,transparent 1px 2px)"></div>
<svg style="left:39px;top:253px" width="16" height="16" viewBox="0 0 16 16"><path fill="#fff" d="M1 1h11v1h-11zM1 2h11v1h-11zM13 2h1v1h-1zM1 3h12v1h-12zM1 4h13v1h-13zM1 5h13v1h-13zM1 6h13v1h-13zM1 7h13v1h-13zM1 8h13v1h-13zM1 9h13v1h-13zM1 10h13v1h-13zM1 11h13v1h-13zM1 12h13v1h-13zM3 13h5v1h-5zM12 13h2v1h-2zM13 14h1v1h-1z"/><path fill="#808080" d="M0 0h13v1h-13zM0 1h1v1h-1zM12 1h2v1h-2zM0 2h1v1h-1zM12 2h1v1h-1zM14 2h1v1h-1zM0 3h1v1h-1zM0 4h1v1h-1zM0 5h1v1h-1zM0 6h1v1h-1zM0 7h1v1h-1zM0 8h1v1h-1zM0 9h1v1h-1zM0 10h1v1h-1zM0 11h1v1h-1zM0 12h1v1h-1z"/><path fill="#000" d="M13 3h3v1h-3zM15 4h1v1h-1zM15 5h1v1h-1zM15 6h1v1h-1zM15 7h1v1h-1zM15 8h1v1h-1zM15 9h1v1h-1zM15 10h1v1h-1zM15 11h1v1h-1zM15 12h1v1h-1zM0 13h3v1h-3zM8 13h4v1h-4zM15 13h1v1h-1zM3 14h5v1h-5zM12 14h1v1h-1zM15 14h1v1h-1zM13 15h3v1h-3z"/><path fill="#dcdcdc" d="M14 4h1v1h-1zM14 5h1v1h-1zM14 6h1v1h-1zM14 7h1v1h-1zM14 8h1v1h-1zM14 9h1v1h-1zM14 10h1v1h-1zM14 11h1v1h-1zM14 12h1v1h-1zM14 13h1v1h-1zM14 14h1v1h-1z"/></svg>
<span class="bn" style="left:40.8px;top:255.4px">011</span><span class="bn" style="left:40.8px;top:260.4px">110</span>
<span style="left:61.2px;top:254px;letter-spacing:-0.25px;">Sectors</span>
<span style="left:306.9px;top:254px;letter-spacing:0.30px;">63</span>
<span style="left:557.1px;top:254px;letter-spacing:0.30px;">63</span>
<div style="left:28px;top:279px;width:8px;height:1px;background:repeating-linear-gradient(90deg,#a0a0a0 0 1px,transparent 1px 2px)"></div>
<svg style="left:39px;top:271px" width="16" height="16" viewBox="0 0 16 16"><path fill="#fff" d="M1 1h11v1h-11zM1 2h11v1h-11zM13 2h1v1h-1zM1 3h12v1h-12zM1 4h13v1h-13zM1 5h13v1h-13zM1 6h13v1h-13zM1 7h13v1h-13zM1 8h13v1h-13zM1 9h13v1h-13zM1 10h13v1h-13zM1 11h13v1h-13zM1 12h13v1h-13zM3 13h5v1h-5zM12 13h2v1h-2zM13 14h1v1h-1z"/><path fill="#808080" d="M0 0h13v1h-13zM0 1h1v1h-1zM12 1h2v1h-2zM0 2h1v1h-1zM12 2h1v1h-1zM14 2h1v1h-1zM0 3h1v1h-1zM0 4h1v1h-1zM0 5h1v1h-1zM0 6h1v1h-1zM0 7h1v1h-1zM0 8h1v1h-1zM0 9h1v1h-1zM0 10h1v1h-1zM0 11h1v1h-1zM0 12h1v1h-1z"/><path fill="#000" d="M13 3h3v1h-3zM15 4h1v1h-1zM15 5h1v1h-1zM15 6h1v1h-1zM15 7h1v1h-1zM15 8h1v1h-1zM15 9h1v1h-1zM15 10h1v1h-1zM15 11h1v1h-1zM15 12h1v1h-1zM0 13h3v1h-3zM8 13h4v1h-4zM15 13h1v1h-1zM3 14h5v1h-5zM12 14h1v1h-1zM15 14h1v1h-1zM13 15h3v1h-3z"/><path fill="#dcdcdc" d="M14 4h1v1h-1zM14 5h1v1h-1zM14 6h1v1h-1zM14 7h1v1h-1zM14 8h1v1h-1zM14 9h1v1h-1zM14 10h1v1h-1zM14 11h1v1h-1zM14 12h1v1h-1zM14 13h1v1h-1zM14 14h1v1h-1z"/></svg>
<span class="bn" style="left:40.8px;top:273.4px">011</span><span class="bn" style="left:40.8px;top:278.4px">110</span>
<span style="left:61.2px;top:272px;letter-spacing:-0.10px;">Capacity</span>
<span style="left:306.9px;top:272px;letter-spacing:0.05px;">16 514 064 sect.</span>
<span style="left:557.1px;top:272px;transform:scaleX(0.925);">8 GB</span>
<div style="left:28px;top:297px;width:8px;height:1px;background:repeating-linear-gradient(90deg,#a0a0a0 0 1px,transparent 1px 2px)"></div>
<svg style="left:39px;top:289px" width="16" height="16" viewBox="0 0 16 16"><path fill="#fff" d="M1 1h11v1h-11zM1 2h11v1h-11zM13 2h1v1h-1zM1 3h12v1h-12zM1 4h13v1h-13zM1 5h13v1h-13zM1 6h13v1h-13zM1 7h13v1h-13zM1 8h13v1h-13zM1 9h13v1h-13zM1 10h13v1h-13zM1 11h13v1h-13zM1 12h13v1h-13zM3 13h5v1h-5zM12 13h2v1h-2zM13 14h1v1h-1z"/><path fill="#808080" d="M0 0h13v1h-13zM0 1h1v1h-1zM12 1h2v1h-2zM0 2h1v1h-1zM12 2h1v1h-1zM14 2h1v1h-1zM0 3h1v1h-1zM0 4h1v1h-1zM0 5h1v1h-1zM0 6h1v1h-1zM0 7h1v1h-1zM0 8h1v1h-1zM0 9h1v1h-1zM0 10h1v1h-1zM0 11h1v1h-1zM0 12h1v1h-1z"/><path fill="#000" d="M13 3h3v1h-3zM15 4h1v1h-1zM15 5h1v1h-1zM15 6h1v1h-1zM15 7h1v1h-1zM15 8h1v1h-1zM15 9h1v1h-1zM15 10h1v1h-1zM15 11h1v1h-1zM15 12h1v1h-1zM0 13h3v1h-3zM8 13h4v1h-4zM15 13h1v1h-1zM3 14h5v1h-5zM12 14h1v1h-1zM15 14h1v1h-1zM13 15h3v1h-3z"/><path fill="#dcdcdc" d="M14 4h1v1h-1zM14 5h1v1h-1zM14 6h1v1h-1zM14 7h1v1h-1zM14 8h1v1h-1zM14 9h1v1h-1zM14 10h1v1h-1zM14 11h1v1h-1zM14 12h1v1h-1zM14 13h1v1h-1zM14 14h1v1h-1z"/></svg>
<span class="bn" style="left:40.8px;top:291.4px">011</span><span class="bn" style="left:40.8px;top:296.4px">110</span>
<span style="left:61.2px;top:290px;letter-spacing:-0.09px;">Capacity available in LBA Mode</span>
<span style="left:306.9px;top:290px;letter-spacing:0.07px;">268 435 455 sect.</span>
<span style="left:557.1px;top:290px;transform:scaleX(0.960);">137 GB</span>
<div style="left:28px;top:315px;width:8px;height:1px;background:repeating-linear-gradient(90deg,#a0a0a0 0 1px,transparent 1px 2px)"></div>
<svg style="left:39px;top:307px" width="16" height="16" viewBox="0 0 16 16"><path fill="#fff" d="M1 1h11v1h-11zM1 2h11v1h-11zM13 2h1v1h-1zM1 3h12v1h-12zM1 4h13v1h-13zM1 5h13v1h-13zM1 6h13v1h-13zM1 7h13v1h-13zM1 8h13v1h-13zM1 9h13v1h-13zM1 10h13v1h-13zM1 11h13v1h-13zM1 12h13v1h-13zM3 13h5v1h-5zM12 13h2v1h-2zM13 14h1v1h-1z"/><path fill="#808080" d="M0 0h13v1h-13zM0 1h1v1h-1zM12 1h2v1h-2zM0 2h1v1h-1zM12 2h1v1h-1zM14 2h1v1h-1zM0 3h1v1h-1zM0 4h1v1h-1zM0 5h1v1h-1zM0 6h1v1h-1zM0 7h1v1h-1zM0 8h1v1h-1zM0 9h1v1h-1zM0 10h1v1h-1zM0 11h1v1h-1zM0 12h1v1h-1z"/><path fill="#000" d="M13 3h3v1h-3zM15 4h1v1h-1zM15 5h1v1h-1zM15 6h1v1h-1zM15 7h1v1h-1zM15 8h1v1h-1zM15 9h1v1h-1zM15 10h1v1h-1zM15 11h1v1h-1zM15 12h1v1h-1zM0 13h3v1h-3zM8 13h4v1h-4zM15 13h1v1h-1zM3 14h5v1h-5zM12 14h1v1h-1zM15 14h1v1h-1zM13 15h3v1h-3z"/><path fill="#dcdcdc" d="M14 4h1v1h-1zM14 5h1v1h-1zM14 6h1v1h-1zM14 7h1v1h-1zM14 8h1v1h-1zM14 9h1v1h-1zM14 10h1v1h-1zM14 11h1v1h-1zM14 12h1v1h-1zM14 13h1v1h-1zM14 14h1v1h-1z"/></svg>
<span class="bn" style="left:40.8px;top:309.4px">011</span><span class="bn" style="left:40.8px;top:314.4px">110</span>
<span style="left:61.2px;top:308px;letter-spacing:-0.07px;">Capacity available in LBA 48 Mode</span>
<span style="left:306.9px;top:308px;letter-spacing:0.04px;">1 953 525 168 sect.</span>
<span style="left:557.1px;top:308px;letter-spacing:-0.25px;">1 000 GB</span>
<div style="left:12px;top:333px;width:8px;height:1px;background:repeating-linear-gradient(90deg,#a0a0a0 0 1px,transparent 1px 2px)"></div>
<svg style="left:3px;top:329px" width="9" height="9" viewBox="0 0 9 9"><path fill="#969696" d="M0 0h9v9h-9z"/><path fill="#fff" d="M1 1h7v7h-7z"/><path fill="#000" d="M2 4h5v1h-5z"/></svg>
<svg style="left:22px;top:326px" width="14" height="14" viewBox="0 0 14 14"><path fill="#5a5a5a" d="M2 0h1v1h-1zM5 0h1v1h-1zM11 0h1v1h-1zM2 1h1v1h-1zM5 1h1v1h-1zM11 1h1v1h-1zM0 2h2v1h-2zM3 2h2v1h-2zM10 2h2v1h-2zM13 2h1v1h-1zM2 3h1v1h-1zM5 3h1v1h-1zM11 3h1v1h-1zM11 4h1v1h-1zM8 5h1v1h-1zM12 5h2v1h-2zM11 6h1v1h-1zM12 7h1v1h-1zM4 8h1v1h-1zM12 8h2v1h-2zM5 9h1v1h-1zM2 10h1v1h-1zM5 10h1v1h-1zM0 11h2v1h-2zM3 11h2v1h-2zM6 11h2v1h-2zM10 11h2v1h-2zM13 11h1v1h-1zM2 12h1v1h-1zM5 12h1v1h-1zM8 12h1v1h-1zM11 12h1v1h-1zM2 13h1v1h-1zM5 13h1v1h-1zM8 13h1v1h-1zM11 13h1v1h-1z"/><path fill="#0808a0" d="M8 0h1v1h-1zM8 1h2v1h-2zM8 2h2v1h-2zM8 3h2v1h-2zM8 4h2v1h-2z"/><path fill="#3a80c8" d="M6 1h2v1h-2zM6 2h2v1h-2zM6 3h2v1h-2zM6 4h2v1h-2z"/><path fill="#000" d="M2 2h1v1h-1zM5 2h1v1h-1zM12 2h1v1h-1zM5 4h1v1h-1zM4 5h2v1h-2zM11 5h1v1h-1zM5 6h1v1h-1zM5 7h1v1h-1zM5 8h1v1h-1zM11 9h1v1h-1zM10 10h1v1h-1zM2 11h1v1h-1zM5 11h1v1h-1zM8 11h2v1h-2zM12 11h1v1h-1z"/><path fill="#840808" d="M1 4h2v1h-2zM0 5h1v1h-1zM3 5h1v1h-1zM0 8h1v1h-1zM3 8h1v1h-1zM1 9h2v1h-2z"/><path fill="#c01c1c" d="M1 5h2v1h-2zM0 6h1v1h-1zM3 6h2v1h-2zM0 7h1v1h-1zM3 7h2v1h-2zM1 8h2v1h-2z"/><path fill="#dc2a2a" d="M1 6h2v1h-2zM1 7h2v1h-2z"/><path fill="#088808" d="M8 6h2v1h-2zM6 7h1v1h-1zM9 7h3v1h-3zM6 8h1v1h-1zM9 8h2v1h-2zM6 9h5v1h-5zM7 10h1v1h-1z"/><path fill="#2ccc2c" d="M7 7h2v1h-2zM7 8h2v1h-2z"/><path fill="#044804" d="M11 8h1v1h-1zM8 10h2v1h-2z"/></svg>
<span style="left:42.8px;top:326px;letter-spacing:-0.11px;">Security system</span>
<div style="left:26px;top:341px;width:1px;height:100px;background:repeating-linear-gradient(180deg,#a0a0a0 0 1px,transparent 1px 2px)"></div>
<div style="left:28px;top:351px;width:8px;height:1px;background:repeating-linear-gradient(90deg,#a0a0a0 0 1px,transparent 1px 2px)"></div>
<svg style="left:39px;top:343px" width="16" height="16" viewBox="0 0 16 16"><path fill="#fff" d="M1 1h11v1h-11zM1 2h11v1h-11zM13 2h1v1h-1zM1 3h12v1h-12zM1 4h13v1h-13zM1 5h13v1h-13zM1 6h13v1h-13zM1 7h13v1h-13zM1 8h13v1h-13zM1 9h13v1h-13zM1 10h13v1h-13zM1 11h13v1h-13zM1 12h13v1h-13zM3 13h5v1h-5zM12 13h2v1h-2zM13 14h1v1h-1z"/><path fill="#808080" d="M0 0h13v1h-13zM0 1h1v1h-1zM12 1h2v1h-2zM0 2h1v1h-1zM12 2h1v1h-1zM14 2h1v1h-1zM0 3h1v1h-1zM0 4h1v1h-1zM0 5h1v1h-1zM0 6h1v1h-1zM0 7h1v1h-1zM0 8h1v1h-1zM0 9h1v1h-1zM0 10h1v1h-1zM0 11h1v1h-1zM0 12h1v1h-1z"/><path fill="#000" d="M13 3h3v1h-3zM15 4h1v1h-1zM15 5h1v1h-1zM15 6h1v1h-1zM15 7h1v1h-1zM15 8h1v1h-1zM15 9h1v1h-1zM15 10h1v1h-1zM15 11h1v1h-1zM15 12h1v1h-1zM0 13h3v1h-3zM8 13h4v1h-4zM15 13h1v1h-1zM3 14h5v1h-5zM12 14h1v1h-1zM15 14h1v1h-1zM13 15h3v1h-3z"/><path fill="#dcdcdc" d="M14 4h1v1h-1zM14 5h1v1h-1zM14 6h1v1h-1zM14 7h1v1h-1zM14 8h1v1h-1zM14 9h1v1h-1zM14 10h1v1h-1zM14 11h1v1h-1zM14 12h1v1h-1zM14 13h1v1h-1zM14 14h1v1h-1z"/></svg>
<span class="bn" style="left:40.8px;top:345.4px">011</span><span class="bn" style="left:40.8px;top:350.4px">110</span>
<span style="left:61.2px;top:344px;letter-spacing:-0.24px;">password set</span>
<span style="left:306.9px;top:344px;letter-spacing:0.45px;">[NO]</span>
<div style="left:28px;top:369px;width:8px;height:1px;background:repeating-linear-gradient(90deg,#a0a0a0 0 1px,transparent 1px 2px)"></div>
<svg style="left:39px;top:361px" width="16" height="16" viewBox="0 0 16 16"><path fill="#fff" d="M1 1h11v1h-11zM1 2h11v1h-11zM13 2h1v1h-1zM1 3h12v1h-12zM1 4h13v1h-13zM1 5h13v1h-13zM1 6h13v1h-13zM1 7h13v1h-13zM1 8h13v1h-13zM1 9h13v1h-13zM1 10h13v1h-13zM1 11h13v1h-13zM1 12h13v1h-13zM3 13h5v1h-5zM12 13h2v1h-2zM13 14h1v1h-1z"/><path fill="#808080" d="M0 0h13v1h-13zM0 1h1v1h-1zM12 1h2v1h-2zM0 2h1v1h-1zM12 2h1v1h-1zM14 2h1v1h-1zM0 3h1v1h-1zM0 4h1v1h-1zM0 5h1v1h-1zM0 6h1v1h-1zM0 7h1v1h-1zM0 8h1v1h-1zM0 9h1v1h-1zM0 10h1v1h-1zM0 11h1v1h-1zM0 12h1v1h-1z"/><path fill="#000" d="M13 3h3v1h-3zM15 4h1v1h-1zM15 5h1v1h-1zM15 6h1v1h-1zM15 7h1v1h-1zM15 8h1v1h-1zM15 9h1v1h-1zM15 10h1v1h-1zM15 11h1v1h-1zM15 12h1v1h-1zM0 13h3v1h-3zM8 13h4v1h-4zM15 13h1v1h-1zM3 14h5v1h-5zM12 14h1v1h-1zM15 14h1v1h-1zM13 15h3v1h-3z"/><path fill="#dcdcdc" d="M14 4h1v1h-1zM14 5h1v1h-1zM14 6h1v1h-1zM14 7h1v1h-1zM14 8h1v1h-1zM14 9h1v1h-1zM14 10h1v1h-1zM14 11h1v1h-1zM14 12h1v1h-1zM14 13h1v1h-1zM14 14h1v1h-1z"/></svg>
<span class="bn" style="left:40.8px;top:363.4px">011</span><span class="bn" style="left:40.8px;top:368.4px">110</span>
<span style="left:61.2px;top:362px;letter-spacing:-0.01px;">HDD Locked</span>
<span style="left:306.9px;top:362px;letter-spacing:0.45px;">[NO]</span>
<div style="left:28px;top:387px;width:8px;height:1px;background:repeating-linear-gradient(90deg,#a0a0a0 0 1px,transparent 1px 2px)"></div>
<svg style="left:39px;top:379px" width="16" height="16" viewBox="0 0 16 16"><path fill="#fff" d="M1 1h11v1h-11zM1 2h11v1h-11zM13 2h1v1h-1zM1 3h12v1h-12zM1 4h13v1h-13zM1 5h13v1h-13zM1 6h13v1h-13zM1 7h13v1h-13zM1 8h13v1h-13zM1 9h13v1h-13zM1 10h13v1h-13zM1 11h13v1h-13zM1 12h13v1h-13zM3 13h5v1h-5zM12 13h2v1h-2zM13 14h1v1h-1z"/><path fill="#808080" d="M0 0h13v1h-13zM0 1h1v1h-1zM12 1h2v1h-2zM0 2h1v1h-1zM12 2h1v1h-1zM14 2h1v1h-1zM0 3h1v1h-1zM0 4h1v1h-1zM0 5h1v1h-1zM0 6h1v1h-1zM0 7h1v1h-1zM0 8h1v1h-1zM0 9h1v1h-1zM0 10h1v1h-1zM0 11h1v1h-1zM0 12h1v1h-1z"/><path fill="#000" d="M13 3h3v1h-3zM15 4h1v1h-1zM15 5h1v1h-1zM15 6h1v1h-1zM15 7h1v1h-1zM15 8h1v1h-1zM15 9h1v1h-1zM15 10h1v1h-1zM15 11h1v1h-1zM15 12h1v1h-1zM0 13h3v1h-3zM8 13h4v1h-4zM15 13h1v1h-1zM3 14h5v1h-5zM12 14h1v1h-1zM15 14h1v1h-1zM13 15h3v1h-3z"/><path fill="#dcdcdc" d="M14 4h1v1h-1zM14 5h1v1h-1zM14 6h1v1h-1zM14 7h1v1h-1zM14 8h1v1h-1zM14 9h1v1h-1zM14 10h1v1h-1zM14 11h1v1h-1zM14 12h1v1h-1zM14 13h1v1h-1zM14 14h1v1h-1z"/></svg>
<span class="bn" style="left:40.8px;top:381.4px">011</span><span class="bn" style="left:40.8px;top:386.4px">110</span>
<span style="left:61.2px;top:380px;letter-spacing:-0.09px;">HDD Frozen</span>
<span style="left:306.9px;top:380px;letter-spacing:0.45px;">[NO]</span>
<div style="left:28px;top:405px;width:8px;height:1px;background:repeating-linear-gradient(90deg,#a0a0a0 0 1px,transparent 1px 2px)"></div>
<svg style="left:39px;top:397px" width="16" height="16" viewBox="0 0 16 16"><path fill="#fff" d="M1 1h11v1h-11zM1 2h11v1h-11zM13 2h1v1h-1zM1 3h12v1h-12zM1 4h13v1h-13zM1 5h13v1h-13zM1 6h13v1h-13zM1 7h13v1h-13zM1 8h13v1h-13zM1 9h13v1h-13zM1 10h13v1h-13zM1 11h13v1h-13zM1 12h13v1h-13zM3 13h5v1h-5zM12 13h2v1h-2zM13 14h1v1h-1z"/><path fill="#808080" d="M0 0h13v1h-13zM0 1h1v1h-1zM12 1h2v1h-2zM0 2h1v1h-1zM12 2h1v1h-1zM14 2h1v1h-1zM0 3h1v1h-1zM0 4h1v1h-1zM0 5h1v1h-1zM0 6h1v1h-1zM0 7h1v1h-1zM0 8h1v1h-1zM0 9h1v1h-1zM0 10h1v1h-1zM0 11h1v1h-1zM0 12h1v1h-1z"/><path fill="#000" d="M13 3h3v1h-3zM15 4h1v1h-1zM15 5h1v1h-1zM15 6h1v1h-1zM15 7h1v1h-1zM15 8h1v1h-1zM15 9h1v1h-1zM15 10h1v1h-1zM15 11h1v1h-1zM15 12h1v1h-1zM0 13h3v1h-3zM8 13h4v1h-4zM15 13h1v1h-1zM3 14h5v1h-5zM12 14h1v1h-1zM15 14h1v1h-1zM13 15h3v1h-3z"/><path fill="#dcdcdc" d="M14 4h1v1h-1zM14 5h1v1h-1zM14 6h1v1h-1zM14 7h1v1h-1zM14 8h1v1h-1zM14 9h1v1h-1zM14 10h1v1h-1zM14 11h1v1h-1zM14 12h1v1h-1zM14 13h1v1h-1zM14 14h1v1h-1z"/></svg>
<span class="bn" style="left:40.8px;top:399.4px">011</span><span class="bn" style="left:40.8px;top:404.4px">110</span>
<span style="left:61.2px;top:398px;letter-spacing:-0.06px;">wrong password count exceeded</span>
<span style="left:306.9px;top:398px;letter-spacing:0.45px;">[NO]</span>
<div style="left:28px;top:423px;width:8px;height:1px;background:repeating-linear-gradient(90deg,#a0a0a0 0 1px,transparent 1px 2px)"></div>
<svg style="left:39px;top:415px" width="16" height="16" viewBox="0 0 16 16"><path fill="#fff" d="M1 1h11v1h-11zM1 2h11v1h-11zM13 2h1v1h-1zM1 3h12v1h-12zM1 4h13v1h-13zM1 5h13v1h-13zM1 6h13v1h-13zM1 7h13v1h-13zM1 8h13v1h-13zM1 9h13v1h-13zM1 10h13v1h-13zM1 11h13v1h-13zM1 12h13v1h-13zM3 13h5v1h-5zM12 13h2v1h-2zM13 14h1v1h-1z"/><path fill="#808080" d="M0 0h13v1h-13zM0 1h1v1h-1zM12 1h2v1h-2zM0 2h1v1h-1zM12 2h1v1h-1zM14 2h1v1h-1zM0 3h1v1h-1zM0 4h1v1h-1zM0 5h1v1h-1zM0 6h1v1h-1zM0 7h1v1h-1zM0 8h1v1h-1zM0 9h1v1h-1zM0 10h1v1h-1zM0 11h1v1h-1zM0 12h1v1h-1z"/><path fill="#000" d="M13 3h3v1h-3zM15 4h1v1h-1zM15 5h1v1h-1zM15 6h1v1h-1zM15 7h1v1h-1zM15 8h1v1h-1zM15 9h1v1h-1zM15 10h1v1h-1zM15 11h1v1h-1zM15 12h1v1h-1zM0 13h3v1h-3zM8 13h4v1h-4zM15 13h1v1h-1zM3 14h5v1h-5zM12 14h1v1h-1zM15 14h1v1h-1zM13 15h3v1h-3z"/><path fill="#dcdcdc" d="M14 4h1v1h-1zM14 5h1v1h-1zM14 6h1v1h-1zM14 7h1v1h-1zM14 8h1v1h-1zM14 9h1v1h-1zM14 10h1v1h-1zM14 11h1v1h-1zM14 12h1v1h-1zM14 13h1v1h-1zM14 14h1v1h-1z"/></svg>
<span class="bn" style="left:40.8px;top:417.4px">011</span><span class="bn" style="left:40.8px;top:422.4px">110</span>
<span style="left:61.2px;top:416px;letter-spacing:-0.12px;">security erase support</span>
<span style="left:306.9px;top:416px;transform:scaleX(0.907);">[YES]</span>
<div style="left:28px;top:441px;width:8px;height:1px;background:repeating-linear-gradient(90deg,#a0a0a0 0 1px,transparent 1px 2px)"></div>
<svg style="left:39px;top:433px" width="16" height="16" viewBox="0 0 16 16"><path fill="#fff" d="M1 1h11v1h-11zM1 2h11v1h-11zM13 2h1v1h-1zM1 3h12v1h-12zM1 4h13v1h-13zM1 5h13v1h-13zM1 6h13v1h-13zM1 7h13v1h-13zM1 8h13v1h-13zM1 9h13v1h-13zM1 10h13v1h-13zM1 11h13v1h-13zM1 12h13v1h-13zM3 13h5v1h-5zM12 13h2v1h-2zM13 14h1v1h-1z"/><path fill="#808080" d="M0 0h13v1h-13zM0 1h1v1h-1zM12 1h2v1h-2zM0 2h1v1h-1zM12 2h1v1h-1zM14 2h1v1h-1zM0 3h1v1h-1zM0 4h1v1h-1zM0 5h1v1h-1zM0 6h1v1h-1zM0 7h1v1h-1zM0 8h1v1h-1zM0 9h1v1h-1zM0 10h1v1h-1zM0 11h1v1h-1zM0 12h1v1h-1z"/><path fill="#000" d="M13 3h3v1h-3zM15 4h1v1h-1zM15 5h1v1h-1zM15 6h1v1h-1zM15 7h1v1h-1zM15 8h1v1h-1zM15 9h1v1h-1zM15 10h1v1h-1zM15 11h1v1h-1zM15 12h1v1h-1zM0 13h3v1h-3zM8 13h4v1h-4zM15 13h1v1h-1zM3 14h5v1h-5zM12 14h1v1h-1zM15 14h1v1h-1zM13 15h3v1h-3z"/><path fill="#dcdcdc" d="M14 4h1v1h-1zM14 5h1v1h-1zM14 6h1v1h-1zM14 7h1v1h-1zM14 8h1v1h-1zM14 9h1v1h-1zM14 10h1v1h-1zM14 11h1v1h-1zM14 12h1v1h-1zM14 13h1v1h-1zM14 14h1v1h-1z"/></svg>
<span class="bn" style="left:40.8px;top:435.4px">011</span><span class="bn" style="left:40.8px;top:440.4px">110</span>
<span style="left:61.2px;top:434px;letter-spacing:-0.13px;">security level</span>
<span style="left:306.9px;top:434px;letter-spacing:0.50px;">High</span>
<div style="left:12px;top:459px;width:8px;height:1px;background:repeating-linear-gradient(90deg,#a0a0a0 0 1px,transparent 1px 2px)"></div>
<svg style="left:3px;top:455px" width="9" height="9" viewBox="0 0 9 9"><path fill="#969696" d="M0 0h9v9h-9z"/><path fill="#fff" d="M1 1h7v7h-7z"/><path fill="#000" d="M2 4h5v1h-5z"/></svg>
<svg style="left:22px;top:452px" width="14" height="14" viewBox="0 0 14 14"><path fill="#5a5a5a" d="M2 0h1v1h-1zM5 0h1v1h-1zM11 0h1v1h-1zM2 1h1v1h-1zM5 1h1v1h-1zM11 1h1v1h-1zM0 2h2v1h-2zM3 2h2v1h-2zM10 2h2v1h-2zM13 2h1v1h-1zM2 3h1v1h-1zM5 3h1v1h-1zM11 3h1v1h-1zM11 4h1v1h-1zM8 5h1v1h-1zM12 5h2v1h-2zM11 6h1v1h-1zM12 7h1v1h-1zM4 8h1v1h-1zM12 8h2v1h-2zM5 9h1v1h-1zM2 10h1v1h-1zM5 10h1v1h-1zM0 11h2v1h-2zM3 11h2v1h-2zM6 11h2v1h-2zM10 11h2v1h-2zM13 11h1v1h-1zM2 12h1v1h-1zM5 12h1v1h-1zM8 12h1v1h-1zM11 12h1v1h-1zM2 13h1v1h-1zM5 13h1v1h-1zM8 13h1v1h-1zM11 13h1v1h-1z"/><path fill="#0808a0" d="M8 0h1v1h-1zM8 1h2v1h-2zM8 2h2v1h-2zM8 3h2v1h-2zM8 4h2v1h-2z"/><path fill="#3a80c8" d="M6 1h2v1h-2zM6 2h2v1h-2zM6 3h2v1h-2zM6 4h2v1h-2z"/><path fill="#000" d="M2 2h1v1h-1zM5 2h1v1h-1zM12 2h1v1h-1zM5 4h1v1h-1zM4 5h2v1h-2zM11 5h1v1h-1zM5 6h1v1h-1zM5 7h1v1h-1zM5 8h1v1h-1zM11 9h1v1h-1zM10 10h1v1h-1zM2 11h1v1h-1zM5 11h1v1h-1zM8 11h2v1h-2zM12 11h1v1h-1z"/><path fill="#840808" d="M1 4h2v1h-2zM0 5h1v1h-1zM3 5h1v1h-1zM0 8h1v1h-1zM3 8h1v1h-1zM1 9h2v1h-2z"/><path fill="#c01c1c" d="M1 5h2v1h-2zM0 6h1v1h-1zM3 6h2v1h-2zM0 7h1v1h-1zM3 7h2v1h-2zM1 8h2v1h-2z"/><path fill="#dc2a2a" d="M1 6h2v1h-2zM1 7h2v1h-2z"/><path fill="#088808" d="M8 6h2v1h-2zM6 7h1v1h-1zM9 7h3v1h-3zM6 8h1v1h-1zM9 8h2v1h-2zM6 9h5v1h-5zM7 10h1v1h-1z"/><path fill="#2ccc2c" d="M7 7h2v1h-2zM7 8h2v1h-2z"/><path fill="#044804" d="M11 8h1v1h-1zM8 10h2v1h-2z"/></svg>
<span style="left:42.8px;top:452px;letter-spacing:-0.04px;">Capabilities</span>
<div style="left:26px;top:467px;width:1px;height:82px;background:repeating-linear-gradient(180deg,#a0a0a0 0 1px,transparent 1px 2px)"></div>
<div style="left:28px;top:477px;width:8px;height:1px;background:repeating-linear-gradient(90deg,#a0a0a0 0 1px,transparent 1px 2px)"></div>
<svg style="left:39px;top:469px" width="16" height="16" viewBox="0 0 16 16"><path fill="#fff" d="M1 1h11v1h-11zM1 2h11v1h-11zM13 2h1v1h-1zM1 3h12v1h-12zM1 4h13v1h-13zM1 5h13v1h-13zM1 6h13v1h-13zM1 7h13v1h-13zM1 8h13v1h-13zM1 9h13v1h-13zM1 10h13v1h-13zM1 11h13v1h-13zM1 12h13v1h-13zM3 13h5v1h-5zM12 13h2v1h-2zM13 14h1v1h-1z"/><path fill="#808080" d="M0 0h13v1h-13zM0 1h1v1h-1zM12 1h2v1h-2zM0 2h1v1h-1zM12 2h1v1h-1zM14 2h1v1h-1zM0 3h1v1h-1zM0 4h1v1h-1zM0 5h1v1h-1zM0 6h1v1h-1zM0 7h1v1h-1zM0 8h1v1h-1zM0 9h1v1h-1zM0 10h1v1h-1zM0 11h1v1h-1zM0 12h1v1h-1z"/><path fill="#000" d="M13 3h3v1h-3zM15 4h1v1h-1zM15 5h1v1h-1zM15 6h1v1h-1zM15 7h1v1h-1zM15 8h1v1h-1zM15 9h1v1h-1zM15 10h1v1h-1zM15 11h1v1h-1zM15 12h1v1h-1zM0 13h3v1h-3zM8 13h4v1h-4zM15 13h1v1h-1zM3 14h5v1h-5zM12 14h1v1h-1zM15 14h1v1h-1zM13 15h3v1h-3z"/><path fill="#dcdcdc" d="M14 4h1v1h-1zM14 5h1v1h-1zM14 6h1v1h-1zM14 7h1v1h-1zM14 8h1v1h-1zM14 9h1v1h-1zM14 10h1v1h-1zM14 11h1v1h-1zM14 12h1v1h-1zM14 13h1v1h-1zM14 14h1v1h-1z"/></svg>
<span class="bn" style="left:40.8px;top:471.4px">011</span><span class="bn" style="left:40.8px;top:476.4px">110</span>
<span style="left:61.2px;top:470px;letter-spacing:-0.03px;">Standby timer values supported</span>
<span style="left:306.9px;top:470px;transform:scaleX(0.907);">[YES]</span>
<div style="left:28px;top:495px;width:8px;height:1px;background:repeating-linear-gradient(90deg,#a0a0a0 0 1px,transparent 1px 2px)"></div>
<svg style="left:39px;top:487px" width="16" height="16" viewBox="0 0 16 16"><path fill="#fff" d="M1 1h11v1h-11zM1 2h11v1h-11zM13 2h1v1h-1zM1 3h12v1h-12zM1 4h13v1h-13zM1 5h13v1h-13zM1 6h13v1h-13zM1 7h13v1h-13zM1 8h13v1h-13zM1 9h13v1h-13zM1 10h13v1h-13zM1 11h13v1h-13zM1 12h13v1h-13zM3 13h5v1h-5zM12 13h2v1h-2zM13 14h1v1h-1z"/><path fill="#808080" d="M0 0h13v1h-13zM0 1h1v1h-1zM12 1h2v1h-2zM0 2h1v1h-1zM12 2h1v1h-1zM14 2h1v1h-1zM0 3h1v1h-1zM0 4h1v1h-1zM0 5h1v1h-1zM0 6h1v1h-1zM0 7h1v1h-1zM0 8h1v1h-1zM0 9h1v1h-1zM0 10h1v1h-1zM0 11h1v1h-1zM0 12h1v1h-1z"/><path fill="#000" d="M13 3h3v1h-3zM15 4h1v1h-1zM15 5h1v1h-1zM15 6h1v1h-1zM15 7h1v1h-1zM15 8h1v1h-1zM15 9h1v1h-1zM15 10h1v1h-1zM15 11h1v1h-1zM15 12h1v1h-1zM0 13h3v1h-3zM8 13h4v1h-4zM15 13h1v1h-1zM3 14h5v1h-5zM12 14h1v1h-1zM15 14h1v1h-1zM13 15h3v1h-3z"/><path fill="#dcdcdc" d="M14 4h1v1h-1zM14 5h1v1h-1zM14 6h1v1h-1zM14 7h1v1h-1zM14 8h1v1h-1zM14 9h1v1h-1zM14 10h1v1h-1zM14 11h1v1h-1zM14 12h1v1h-1zM14 13h1v1h-1zM14 14h1v1h-1z"/></svg>
<span class="bn" style="left:40.8px;top:489.4px">011</span><span class="bn" style="left:40.8px;top:494.4px">110</span>
<span style="left:61.2px;top:488px;letter-spacing:-0.19px;">IORDY supported</span>
<span style="left:306.9px;top:488px;transform:scaleX(0.907);">[YES]</span>
<div style="left:28px;top:513px;width:8px;height:1px;background:repeating-linear-gradient(90deg,#a0a0a0 0 1px,transparent 1px 2px)"></div>
<svg style="left:39px;top:505px" width="16" height="16" viewBox="0 0 16 16"><path fill="#fff" d="M1 1h11v1h-11zM1 2h11v1h-11zM13 2h1v1h-1zM1 3h12v1h-12zM1 4h13v1h-13zM1 5h13v1h-13zM1 6h13v1h-13zM1 7h13v1h-13zM1 8h13v1h-13zM1 9h13v1h-13zM1 10h13v1h-13zM1 11h13v1h-13zM1 12h13v1h-13zM3 13h5v1h-5zM12 13h2v1h-2zM13 14h1v1h-1z"/><path fill="#808080" d="M0 0h13v1h-13zM0 1h1v1h-1zM12 1h2v1h-2zM0 2h1v1h-1zM12 2h1v1h-1zM14 2h1v1h-1zM0 3h1v1h-1zM0 4h1v1h-1zM0 5h1v1h-1zM0 6h1v1h-1zM0 7h1v1h-1zM0 8h1v1h-1zM0 9h1v1h-1zM0 10h1v1h-1zM0 11h1v1h-1zM0 12h1v1h-1z"/><path fill="#000" d="M13 3h3v1h-3zM15 4h1v1h-1zM15 5h1v1h-1zM15 6h1v1h-1zM15 7h1v1h-1zM15 8h1v1h-1zM15 9h1v1h-1zM15 10h1v1h-1zM15 11h1v1h-1zM15 12h1v1h-1zM0 13h3v1h-3zM8 13h4v1h-4zM15 13h1v1h-1zM3 14h5v1h-5zM12 14h1v1h-1zM15 14h1v1h-1zM13 15h3v1h-3z"/><path fill="#dcdcdc" d="M14 4h1v1h-1zM14 5h1v1h-1zM14 6h1v1h-1zM14 7h1v1h-1zM14 8h1v1h-1zM14 9h1v1h-1zM14 10h1v1h-1zM14 11h1v1h-1zM14 12h1v1h-1zM14 13h1v1h-1zM14 14h1v1h-1z"/></svg>
<span class="bn" style="left:40.8px;top:507.4px">011</span><span class="bn" style="left:40.8px;top:512.4px">110</span>
<span style="left:61.2px;top:506px;letter-spacing:-0.29px;">IORDY disabled</span>
<span style="left:306.9px;top:506px;transform:scaleX(0.907);">[YES]</span>
<div style="left:28px;top:531px;width:8px;height:1px;background:repeating-linear-gradient(90deg,#a0a0a0 0 1px,transparent 1px 2px)"></div>
<svg style="left:39px;top:523px" width="16" height="16" viewBox="0 0 16 16"><path fill="#fff" d="M1 1h11v1h-11zM1 2h11v1h-11zM13 2h1v1h-1zM1 3h12v1h-12zM1 4h13v1h-13zM1 5h13v1h-13zM1 6h13v1h-13zM1 7h13v1h-13zM1 8h13v1h-13zM1 9h13v1h-13zM1 10h13v1h-13zM1 11h13v1h-13zM1 12h13v1h-13zM3 13h5v1h-5zM12 13h2v1h-2zM13 14h1v1h-1z"/><path fill="#808080" d="M0 0h13v1h-13zM0 1h1v1h-1zM12 1h2v1h-2zM0 2h1v1h-1zM12 2h1v1h-1zM14 2h1v1h-1zM0 3h1v1h-1zM0 4h1v1h-1zM0 5h1v1h-1zM0 6h1v1h-1zM0 7h1v1h-1zM0 8h1v1h-1zM0 9h1v1h-1zM0 10h1v1h-1zM0 11h1v1h-1zM0 12h1v1h-1z"/><path fill="#000" d="M13 3h3v1h-3zM15 4h1v1h-1zM15 5h1v1h-1zM15 6h1v1h-1zM15 7h1v1h-1zM15 8h1v1h-1zM15 9h1v1h-1zM15 10h1v1h-1zM15 11h1v1h-1zM15 12h1v1h-1zM0 13h3v1h-3zM8 13h4v1h-4zM15 13h1v1h-1zM3 14h5v1h-5zM12 14h1v1h-1zM15 14h1v1h-1zM13 15h3v1h-3z"/><path fill="#dcdcdc" d="M14 4h1v1h-1zM14 5h1v1h-1zM14 6h1v1h-1zM14 7h1v1h-1zM14 8h1v1h-1zM14 9h1v1h-1zM14 10h1v1h-1zM14 11h1v1h-1zM14 12h1v1h-1zM14 13h1v1h-1zM14 14h1v1h-1z"/></svg>
<span class="bn" style="left:40.8px;top:525.4px">011</span><span class="bn" style="left:40.8px;top:530.4px">110</span>
<span style="left:61.2px;top:524px;letter-spacing:-0.06px;">LBA supported</span>
<span style="left:306.9px;top:524px;transform:scaleX(0.907);">[YES]</span>
<div style="left:28px;top:549px;width:8px;height:1px;background:repeating-linear-gradient(90deg,#a0a0a0 0 1px,transparent 1px 2px)"></div>
<svg style="left:39px;top:541px" width="16" height="16" viewBox="0 0 16 16"><path fill="#fff" d="M1 1h11v1h-11zM1 2h11v1h-11zM13 2h1v1h-1zM1 3h12v1h-12zM1 4h13v1h-13zM1 5h13v1h-13zM1 6h13v1h-13zM1 7h13v1h-13zM1 8h13v1h-13zM1 9h13v1h-13zM1 10h13v1h-13zM1 11h13v1h-13zM1 12h13v1h-13zM3 13h5v1h-5zM12 13h2v1h-2zM13 14h1v1h-1z"/><path fill="#808080" d="M0 0h13v1h-13zM0 1h1v1h-1zM12 1h2v1h-2zM0 2h1v1h-1zM12 2h1v1h-1zM14 2h1v1h-1zM0 3h1v1h-1zM0 4h1v1h-1zM0 5h1v1h-1zM0 6h1v1h-1zM0 7h1v1h-1zM0 8h1v1h-1zM0 9h1v1h-1zM0 10h1v1h-1zM0 11h1v1h-1zM0 12h1v1h-1z"/><path fill="#000" d="M13 3h3v1h-3zM15 4h1v1h-1zM15 5h1v1h-1zM15 6h1v1h-1zM15 7h1v1h-1zM15 8h1v1h-1zM15 9h1v1h-1zM15 10h1v1h-1zM15 11h1v1h-1zM15 12h1v1h-1zM0 13h3v1h-3zM8 13h4v1h-4zM15 13h1v1h-1zM3 14h5v1h-5zM12 14h1v1h-1zM15 14h1v1h-1zM13 15h3v1h-3z"/><path fill="#dcdcdc" d="M14 4h1v1h-1zM14 5h1v1h-1zM14 6h1v1h-1zM14 7h1v1h-1zM14 8h1v1h-1zM14 9h1v1h-1zM14 10h1v1h-1zM14 11h1v1h-1zM14 12h1v1h-1zM14 13h1v1h-1zM14 14h1v1h-1z"/></svg>
<span class="bn" style="left:40.8px;top:543.4px">011</span><span class="bn" style="left:40.8px;top:548.4px">110</span>
<span style="left:61.2px;top:542px;letter-spacing:0.17px;">DMA supported</span>
<span style="left:306.9px;top:542px;transform:scaleX(0.907);">[YES]</span>
<div style="left:12px;top:567px;width:8px;height:1px;background:repeating-linear-gradient(90deg,#a0a0a0 0 1px,transparent 1px 2px)"></div>
<svg style="left:3px;top:563px" width="9" height="9" viewBox="0 0 9 9"><path fill="#969696" d="M0 0h9v9h-9z"/><path fill="#fff" d="M1 1h7v7h-7z"/><path fill="#000" d="M2 4h5v1h-5z"/></svg>
<svg style="left:22px;top:560px" width="14" height="14" viewBox="0 0 14 14"><path fill="#5a5a5a" d="M2 0h1v1h-1zM5 0h1v1h-1zM11 0h1v1h-1zM2 1h1v1h-1zM5 1h1v1h-1zM11 1h1v1h-1zM0 2h2v1h-2zM3 2h2v1h-2zM10 2h2v1h-2zM13 2h1v1h-1zM2 3h1v1h-1zM5 3h1v1h-1zM11 3h1v1h-1zM11 4h1v1h-1zM8 5h1v1h-1zM12 5h2v1h-2zM11 6h1v1h-1zM12 7h1v1h-1zM4 8h1v1h-1zM12 8h2v1h-2zM5 9h1v1h-1zM2 10h1v1h-1zM5 10h1v1h-1zM0 11h2v1h-2zM3 11h2v1h-2zM6 11h2v1h-2zM10 11h2v1h-2zM13 11h1v1h-1zM2 12h1v1h-1zM5 12h1v1h-1zM8 12h1v1h-1zM11 12h1v1h-1zM2 13h1v1h-1zM5 13h1v1h-1zM8 13h1v1h-1zM11 13h1v1h-1z"/><path fill="#0808a0" d="M8 0h1v1h-1zM8 1h2v1h-2zM8 2h2v1h-2zM8 3h2v1h-2zM8 4h2v1h-2z"/><path fill="#3a80c8" d="M6 1h2v1h-2zM6 2h2v1h-2zM6 3h2v1h-2zM6 4h2v1h-2z"/><path fill="#000" d="M2 2h1v1h-1zM5 2h1v1h-1zM12 2h1v1h-1zM5 4h1v1h-1zM4 5h2v1h-2zM11 5h1v1h-1zM5 6h1v1h-1zM5 7h1v1h-1zM5 8h1v1h-1zM11 9h1v1h-1zM10 10h1v1h-1zM2 11h1v1h-1zM5 11h1v1h-1zM8 11h2v1h-2zM12 11h1v1h-1z"/><path fill="#840808" d="M1 4h2v1h-2zM0 5h1v1h-1zM3 5h1v1h-1zM0 8h1v1h-1zM3 8h1v1h-1zM1 9h2v1h-2z"/><path fill="#c01c1c" d="M1 5h2v1h-2zM0 6h1v1h-1zM3 6h2v1h-2zM0 7h1v1h-1zM3 7h2v1h-2zM1 8h2v1h-2z"/><path fill="#dc2a2a" d="M1 6h2v1h-2zM1 7h2v1h-2z"/><path fill="#088808" d="M8 6h2v1h-2zM6 7h1v1h-1zM9 7h3v1h-3zM6 8h1v1h-1zM9 8h2v1h-2zM6 9h5v1h-5zM7 10h1v1h-1z"/><path fill="#2ccc2c" d="M7 7h2v1h-2zM7 8h2v1h-2z"/><path fill="#044804" d="M11 8h1v1h-1zM8 10h2v1h-2z"/></svg>
<span style="left:42.8px;top:560px;transform:scaleX(0.961);">PIO MODE</span>
<div style="left:26px;top:575px;width:1px;height:28px;background:repeating-linear-gradient(180deg,#a0a0a0 0 1px,transparent 1px 2px)"></div>
<div style="left:28px;top:585px;width:8px;height:1px;background:repeating-linear-gradient(90deg,#a0a0a0 0 1px,transparent 1px 2px)"></div>
<svg style="left:39px;top:577px" width="16" height="16" viewBox="0 0 16 16"><path fill="#fff" d="M1 1h11v1h-11zM1 2h11v1h-11zM13 2h1v1h-1zM1 3h12v1h-12zM1 4h13v1h-13zM1 5h13v1h-13zM1 6h13v1h-13zM1 7h13v1h-13zM1 8h13v1h-13zM1 9h13v1h-13zM1 10h13v1h-13zM1 11h13v1h-13zM1 12h13v1h-13zM3 13h5v1h-5zM12 13h2v1h-2zM13 14h1v1h-1z"/><path fill="#808080" d="M0 0h13v1h-13zM0 1h1v1h-1zM12 1h2v1h-2zM0 2h1v1h-1zM12 2h1v1h-1zM14 2h1v1h-1zM0 3h1v1h-1zM0 4h1v1h-1zM0 5h1v1h-1zM0 6h1v1h-1zM0 7h1v1h-1zM0 8h1v1h-1zM0 9h1v1h-1zM0 10h1v1h-1zM0 11h1v1h-1zM0 12h1v1h-1z"/><path fill="#000" d="M13 3h3v1h-3zM15 4h1v1h-1zM15 5h1v1h-1zM15 6h1v1h-1zM15 7h1v1h-1zM15 8h1v1h-1zM15 9h1v1h-1zM15 10h1v1h-1zM15 11h1v1h-1zM15 12h1v1h-1zM0 13h3v1h-3zM8 13h4v1h-4zM15 13h1v1h-1zM3 14h5v1h-5zM12 14h1v1h-1zM15 14h1v1h-1zM13 15h3v1h-3z"/><path fill="#dcdcdc" d="M14 4h1v1h-1zM14 5h1v1h-1zM14 6h1v1h-1zM14 7h1v1h-1zM14 8h1v1h-1zM14 9h1v1h-1zM14 10h1v1h-1zM14 11h1v1h-1zM14 12h1v1h-1zM14 13h1v1h-1zM14 14h1v1h-1z"/></svg>
<span class="bn" style="left:40.8px;top:579.4px">011</span><span class="bn" style="left:40.8px;top:584.4px">110</span>
<span style="left:61.2px;top:578px;letter-spacing:-0.11px;">PIO MODE 3 Support</span>
<span style="left:306.9px;top:578px;transform:scaleX(0.907);">[YES]</span>
<div style="left:28px;top:603px;width:8px;height:1px;background:repeating-linear-gradient(90deg,#a0a0a0 0 1px,transparent 1px 2px)"></div>
<svg style="left:39px;top:595px" width="16" height="16" viewBox="0 0 16 16"><path fill="#fff" d="M1 1h11v1h-11zM1 2h11v1h-11zM13 2h1v1h-1zM1 3h12v1h-12zM1 4h13v1h-13zM1 5h13v1h-13zM1 6h13v1h-13zM1 7h13v1h-13zM1 8h13v1h-13zM1 9h13v1h-13zM1 10h13v1h-13zM1 11h13v1h-13zM1 12h13v1h-13zM3 13h5v1h-5zM12 13h2v1h-2zM13 14h1v1h-1z"/><path fill="#808080" d="M0 0h13v1h-13zM0 1h1v1h-1zM12 1h2v1h-2zM0 2h1v1h-1zM12 2h1v1h-1zM14 2h1v1h-1zM0 3h1v1h-1zM0 4h1v1h-1zM0 5h1v1h-1zM0 6h1v1h-1zM0 7h1v1h-1zM0 8h1v1h-1zM0 9h1v1h-1zM0 10h1v1h-1zM0 11h1v1h-1zM0 12h1v1h-1z"/><path fill="#000" d="M13 3h3v1h-3zM15 4h1v1h-1zM15 5h1v1h-1zM15 6h1v1h-1zM15 7h1v1h-1zM15 8h1v1h-1zM15 9h1v1h-1zM15 10h1v1h-1zM15 11h1v1h-1zM15 12h1v1h-1zM0 13h3v1h-3zM8 13h4v1h-4zM15 13h1v1h-1zM3 14h5v1h-5zM12 14h1v1h-1zM15 14h1v1h-1zM13 15h3v1h-3z"/><path fill="#dcdcdc" d="M14 4h1v1h-1zM14 5h1v1h-1zM14 6h1v1h-1zM14 7h1v1h-1zM14 8h1v1h-1zM14 9h1v1h-1zM14 10h1v1h-1zM14 11h1v1h-1zM14 12h1v1h-1zM14 13h1v1h-1zM14 14h1v1h-1z"/></svg>
<span class="bn" style="left:40.8px;top:597.4px">011</span><span class="bn" style="left:40.8px;top:602.4px">110</span>
<span style="left:61.2px;top:596px;letter-spacing:-0.11px;">PIO MODE 4 Support</span>
<span style="left:306.9px;top:596px;transform:scaleX(0.907);">[YES]</span>
<div style="left:12px;top:621px;width:8px;height:1px;background:repeating-linear-gradient(90deg,#a0a0a0 0 1px,transparent 1px 2px)"></div>
<svg style="left:3px;top:617px" width="9" height="9" viewBox="0 0 9 9"><path fill="#969696" d="M0 0h9v9h-9z"/><path fill="#fff" d="M1 1h7v7h-7z"/><path fill="#000" d="M2 4h5v1h-5z"/></svg>
<svg style="left:22px;top:614px" width="14" height="14" viewBox="0 0 14 14"><path fill="#5a5a5a" d="M2 0h1v1h-1zM5 0h1v1h-1zM11 0h1v1h-1zM2 1h1v1h-1zM5 1h1v1h-1zM11 1h1v1h-1zM0 2h2v1h-2zM3 2h2v1h-2zM10 2h2v1h-2zM13 2h1v1h-1zM2 3h1v1h-1zM5 3h1v1h-1zM11 3h1v1h-1zM11 4h1v1h-1zM8 5h1v1h-1zM12 5h2v1h-2zM11 6h1v1h-1zM12 7h1v1h-1zM4 8h1v1h-1zM12 8h2v1h-2zM5 9h1v1h-1zM2 10h1v1h-1zM5 10h1v1h-1zM0 11h2v1h-2zM3 11h2v1h-2zM6 11h2v1h-2zM10 11h2v1h-2zM13 11h1v1h-1zM2 12h1v1h-1zM5 12h1v1h-1zM8 12h1v1h-1zM11 12h1v1h-1zM2 13h1v1h-1zM5 13h1v1h-1zM8 13h1v1h-1zM11 13h1v1h-1z"/><path fill="#0808a0" d="M8 0h1v1h-1zM8 1h2v1h-2zM8 2h2v1h-2zM8 3h2v1h-2zM8 4h2v1h-2z"/><path fill="#3a80c8" d="M6 1h2v1h-2zM6 2h2v1h-2zM6 3h2v1h-2zM6 4h2v1h-2z"/><path fill="#000" d="M2 2h1v1h-1zM5 2h1v1h-1zM12 2h1v1h-1zM5 4h1v1h-1zM4 5h2v1h-2zM11 5h1v1h-1zM5 6h1v1h-1zM5 7h1v1h-1zM5 8h1v1h-1zM11 9h1v1h-1zM10 10h1v1h-1zM2 11h1v1h-1zM5 11h1v1h-1zM8 11h2v1h-2zM12 11h1v1h-1z"/><path fill="#840808" d="M1 4h2v1h-2zM0 5h1v1h-1zM3 5h1v1h-1zM0 8h1v1h-1zM3 8h1v1h-1zM1 9h2v1h-2z"/><path fill="#c01c1c" d="M1 5h2v1h-2zM0 6h1v1h-1zM3 6h2v1h-2zM0 7h1v1h-1zM3 7h2v1h-2zM1 8h2v1h-2z"/><path fill="#dc2a2a" d="M1 6h2v1h-2zM1 7h2v1h-2z"/><path fill="#088808" d="M8 6h2v1h-2zM6 7h1v1h-1zM9 7h3v1h-3zM6 8h1v1h-1zM9 8h2v1h-2zM6 9h5v1h-5zM7 10h1v1h-1z"/><path fill="#2ccc2c" d="M7 7h2v1h-2zM7 8h2v1h-2z"/><path fill="#044804" d="M11 8h1v1h-1zM8 10h2v1h-2z"/></svg>
<span style="left:42.8px;top:614px;letter-spacing:0.16px;">Available DMA Mode</span>
<div style="left:26px;top:629px;width:1px;height:18px;background:repeating-linear-gradient(180deg,#a0a0a0 0 1px,transparent 1px 2px)"></div>
<div style="left:28px;top:639px;width:8px;height:1px;background:repeating-linear-gradient(90deg,#a0a0a0 0 1px,transparent 1px 2px)"></div>
<svg style="left:39px;top:631px" width="16" height="16" viewBox="0 0 16 16"><path fill="#fff" d="M1 1h11v1h-11zM1 2h11v1h-11zM13 2h1v1h-1zM1 3h12v1h-12zM1 4h13v1h-13zM1 5h13v1h-13zM1 6h13v1h-13zM1 7h13v1h-13zM1 8h13v1h-13zM1 9h13v1h-13zM1 10h13v1h-13zM1 11h13v1h-13zM1 12h13v1h-13zM3 13h5v1h-5zM12 13h2v1h-2zM13 14h1v1h-1z"/><path fill="#808080" d="M0 0h13v1h-13zM0 1h1v1h-1zM12 1h2v1h-2zM0 2h1v1h-1zM12 2h1v1h-1zM14 2h1v1h-1zM0 3h1v1h-1zM0 4h1v1h-1zM0 5h1v1h-1zM0 6h1v1h-1zM0 7h1v1h-1zM0 8h1v1h-1zM0 9h1v1h-1zM0 10h1v1h-1zM0 11h1v1h-1zM0 12h1v1h-1z"/><path fill="#000" d="M13 3h3v1h-3zM15 4h1v1h-1zM15 5h1v1h-1zM15 6h1v1h-1zM15 7h1v1h-1zM15 8h1v1h-1zM15 9h1v1h-1zM15 10h1v1h-1zM15 11h1v1h-1zM15 12h1v1h-1zM0 13h3v1h-3zM8 13h4v1h-4zM15 13h1v1h-1zM3 14h5v1h-5zM12 14h1v1h-1zM15 14h1v1h-1zM13 15h3v1h-3z"/><path fill="#dcdcdc" d="M14 4h1v1h-1zM14 5h1v1h-1zM14 6h1v1h-1zM14 7h1v1h-1zM14 8h1v1h-1zM14 9h1v1h-1zM14 10h1v1h-1zM14 11h1v1h-1zM14 12h1v1h-1zM14 13h1v1h-1zM14 14h1v1h-1z"/></svg>
<span class="bn" style="left:40.8px;top:633.4px">011</span><span class="bn" style="left:40.8px;top:638.4px">110</span>
<span style="left:61.2px;top:632px;letter-spacing:0.31px;">Multiword DMA Mode 0</span>
<span style="left:306.9px;top:632px;transform:scaleX(0.907);">[YES]</span>
</div>
<div style="left:1165px;top:243px;width:16px;height:646px;background:linear-gradient(90deg,#e6e6e6 0,#eeeeee 1px,#f2f2f2 5px,#f2f2f2 14px,#e8e8e8 15px)"></div>
<div style="left:1165px;top:261px;width:15px;height:227px;border:1px solid #979797;border-radius:2px;background:linear-gradient(90deg,#fbfbfb 0,#f0f0f0 12%,#ebebeb 42%,#d4d4da 46%,#cdcdd3 80%,#f0f0f0 96%)"></div>
<i style="left:1169px;top:370px;width:7px;height:1px;background:linear-gradient(90deg,#303030,#8a8a8a)"></i>
<i style="left:1169px;top:371px;width:7px;height:1px;background:#fafafa"></i>
<i style="left:1169px;top:373px;width:7px;height:1px;background:linear-gradient(90deg,#303030,#8a8a8a)"></i>
<i style="left:1169px;top:374px;width:7px;height:1px;background:#fafafa"></i>
<i style="left:1169px;top:376px;width:7px;height:1px;background:linear-gradient(90deg,#303030,#8a8a8a)"></i>
<i style="left:1169px;top:377px;width:7px;height:1px;background:#fafafa"></i>
<svg style="left:1170px;top:250px" width="7" height="4" viewBox="0 0 7 4" ><path fill="#303030" shape-rendering="geometricPrecision" d="M0 4L3.500 0L7 4z"/></svg>
<svg style="left:1170px;top:879px" width="7" height="4" viewBox="0 0 7 4" ><path fill="#303030" shape-rendering="geometricPrecision" d="M0 0L3.500 4L7 0z"/></svg>
<i style="left:3px;top:895px;width:1px;height:18px;background:#ffffff"></i>
<i style="left:49px;top:895px;width:1px;height:18px;background:#a0a0a0"></i>
<i style="left:50px;top:895px;width:1px;height:18px;background:#696969"></i>
<i style="left:5px;top:913px;width:45px;height:1px;background:#a0a0a0"></i>
<i style="left:5px;top:914px;width:44px;height:1px;background:#696969"></i>
<i style="left:49px;top:913px;width:1px;height:1px;background:#696969"></i>
<i style="left:51px;top:895px;width:1px;height:18px;background:#ffffff"></i>
<i style="left:106px;top:895px;width:1px;height:18px;background:#a0a0a0"></i>
<i style="left:107px;top:895px;width:1px;height:18px;background:#696969"></i>
<i style="left:53px;top:913px;width:54px;height:1px;background:#a0a0a0"></i>
<i style="left:53px;top:914px;width:53px;height:1px;background:#696969"></i>
<i style="left:106px;top:913px;width:1px;height:1px;background:#696969"></i>
<div style="left:108px;top:893px;width:58px;height:3px;background:#f0f0f0"></div>
<i style="left:108px;top:895px;width:1px;height:20px;background:#ffffff"></i>
<i style="left:164px;top:895px;width:1px;height:20px;background:#a0a0a0"></i>
<i style="left:165px;top:894px;width:1px;height:20px;background:#696969"></i>
<i style="left:110px;top:915px;width:55px;height:1px;background:#a0a0a0"></i>
<i style="left:110px;top:916px;width:54px;height:1px;background:#696969"></i>
<i style="left:164px;top:915px;width:1px;height:1px;background:#696969"></i>
<span style="left:9.0px;top:898px;">Log</span>
<span style="left:56.5px;top:898px;letter-spacing:0.16px;">Terminal</span>
<span style="left:115.0px;top:900px;letter-spacing:0.03px;">HDD ID</span>
<span style="left:5.0px;top:922px;letter-spacing:-0.11px;">Current test progress</span>
<div style="left:5px;top:936px;width:1234px;height:9px;border-top:1px solid #a0a0a0;border-left:1px solid #a0a0a0;border-right:1px solid #fff;border-bottom:1px solid #fff"></div>
<div style="left:5px;top:946px;width:1234px;height:9px;border-top:1px solid #a0a0a0;border-left:1px solid #a0a0a0;border-right:1px solid #fff;border-bottom:1px solid #fff"></div>
<div style="left:2px;top:966px;width:318px;height:43px;border:1px solid #a0a0a0;box-shadow:1px 1px 0 #fff, inset 1px 1px 0 #fff;"></div>
<div style="left:9px;top:966px;width:164px;height:2px;background:#f0f0f0"></div>
<span style="left:8.8px;top:961px;letter-spacing:-0.05px;">Status register (SATA1)-[PIO4]</span>
<div style="left:12px;top:978px;width:21px;height:11px;background:#c0c0c0;border:1px solid #868686"></div>
<span class="l" style="left:12.2px;top:991px;transform:scaleX(0.896);">BSY</span>
<div style="left:51px;top:978px;width:21px;height:11px;background:#00f000;border:1px solid #40a840"></div>
<span class="l" style="left:49.4px;top:991px;transform:scaleX(0.946);">DRD</span>
<div style="left:90px;top:978px;width:21px;height:11px;background:#c0c0c0;border:1px solid #868686"></div>
<span class="l" style="left:87.0px;top:991px;letter-spacing:-0.26px;">DWF</span>
<div style="left:129px;top:978px;width:21px;height:11px;background:#00f000;border:1px solid #40a840"></div>
<span class="l" style="left:127.6px;top:991px;transform:scaleX(0.931);">DSC</span>
<div style="left:168px;top:978px;width:21px;height:11px;background:#c0c0c0;border:1px solid #868686"></div>
<span class="l" style="left:166.6px;top:991px;transform:scaleX(0.934);">DRQ</span>
<div style="left:207px;top:978px;width:21px;height:11px;background:#c0c0c0;border:1px solid #868686"></div>
<span class="l" style="left:206.4px;top:991px;transform:scaleX(0.853);">CRR</span>
<div style="left:246px;top:978px;width:21px;height:11px;background:#c0c0c0;border:1px solid #868686"></div>
<span class="l" style="left:246.2px;top:991px;letter-spacing:0.15px;">IDX</span>
<div style="left:285px;top:978px;width:21px;height:11px;background:#c0c0c0;border:1px solid #868686"></div>
<span class="l" style="left:284.6px;top:991px;transform:scaleX(0.825);">ERR</span>
<div style="left:322px;top:966px;width:319px;height:43px;border:1px solid #a0a0a0;box-shadow:1px 1px 0 #fff, inset 1px 1px 0 #fff;"></div>
<div style="left:330px;top:966px;width:117px;height:2px;background:#f0f0f0"></div>
<span style="left:329.9px;top:961px;letter-spacing:-0.16px;">Error register (SATA1)</span>
<div style="left:333px;top:978px;width:21px;height:11px;background:#c0c0c0;border:1px solid #868686"></div>
<span class="l" style="left:332.5px;top:991px;transform:scaleX(0.929);">BBK</span>
<div style="left:372px;top:978px;width:21px;height:11px;background:#c0c0c0;border:1px solid #868686"></div>
<span class="l" style="left:370.2px;top:991px;transform:scaleX(0.957);">UNC</span>
<div style="left:411px;top:978px;width:21px;height:11px;background:#c0c0c0;border:1px solid #868686"></div>
<div style="left:450px;top:978px;width:21px;height:11px;background:#c0c0c0;border:1px solid #868686"></div>
<span class="l" style="left:450.3px;top:991px;letter-spacing:-0.16px;">INF</span>
<div style="left:489px;top:978px;width:21px;height:11px;background:#c0c0c0;border:1px solid #868686"></div>
<div style="left:528px;top:978px;width:21px;height:11px;background:#c0c0c0;border:1px solid #868686"></div>
<span class="l" style="left:527.5px;top:991px;transform:scaleX(0.892);">ABR</span>
<div style="left:567px;top:978px;width:21px;height:11px;background:#c0c0c0;border:1px solid #868686"></div>
<span class="l" style="left:565.2px;top:991px;transform:scaleX(0.936);">TON</span>
<div style="left:606px;top:978px;width:21px;height:11px;background:#c0c0c0;border:1px solid #868686"></div>
<span class="l" style="left:601.8px;top:991px;letter-spacing:0.60px;">AMN</span>
<div style="left:643px;top:966px;width:59px;height:43px;border:1px solid #a0a0a0;box-shadow:1px 1px 0 #fff, inset 1px 1px 0 #fff;"></div>
<div style="left:651px;top:966px;width:29px;height:2px;background:#f0f0f0"></div>
<span style="left:651.3px;top:961px;letter-spacing:0.60px;">DMA</span>
<div style="left:662px;top:978px;width:21px;height:11px;background:#c0c0c0;border:1px solid #868686"></div>
<span class="l" style="left:664.8px;top:991px;letter-spacing:-0.30px;">RQ</span>
<div style="left:704px;top:966px;width:59px;height:43px;border:1px solid #a0a0a0;box-shadow:1px 1px 0 #fff, inset 1px 1px 0 #fff;"></div>
<div style="left:712px;top:966px;width:41px;height:2px;background:#f0f0f0"></div>
<span style="left:712.3px;top:961px;letter-spacing:-0.24px;">SATA-</span>
<span style="left:745.2px;top:961px;font-family:'DejaVu Serif','Liberation Serif',serif;color:#000;transform:scaleX(0.88)">Ⅱ</span>
<div style="left:723px;top:978px;width:21px;height:11px;background:#00f000;border:1px solid #40a840"></div>
<span class="l" style="left:721.8px;top:991px;transform:scaleX(0.957);">PHY</span>
<div style="left:1063px;top:966px;width:89px;height:43px;border:1px solid #a0a0a0;box-shadow:1px 1px 0 #fff, inset 1px 1px 0 #fff;"></div>
<div style="left:1071px;top:966px;width:53px;height:2px;background:#f0f0f0"></div>
<span style="left:1071.2px;top:961px;letter-spacing:-0.13px;">Power 5V</span>
<div style="left:1097px;top:978px;width:21px;height:11px;background:#00f000;border:1px solid #40a840"></div>
<span class="l" style="left:1100.1px;top:991px;letter-spacing:0.30px;">5V</span>
<div style="left:1153px;top:966px;width:89px;height:43px;border:1px solid #a0a0a0;box-shadow:1px 1px 0 #fff, inset 1px 1px 0 #fff;"></div>
<div style="left:1161px;top:966px;width:60px;height:2px;background:#f0f0f0"></div>
<span style="left:1161.2px;top:961px;letter-spacing:-0.10px;">Power 12V</span>
<div style="left:1187px;top:978px;width:21px;height:11px;background:#00f000;border:1px solid #40a840"></div>
<span class="l" style="left:1187.1px;top:991px;letter-spacing:0.60px;">12V</span>
</div>
</body></html>
